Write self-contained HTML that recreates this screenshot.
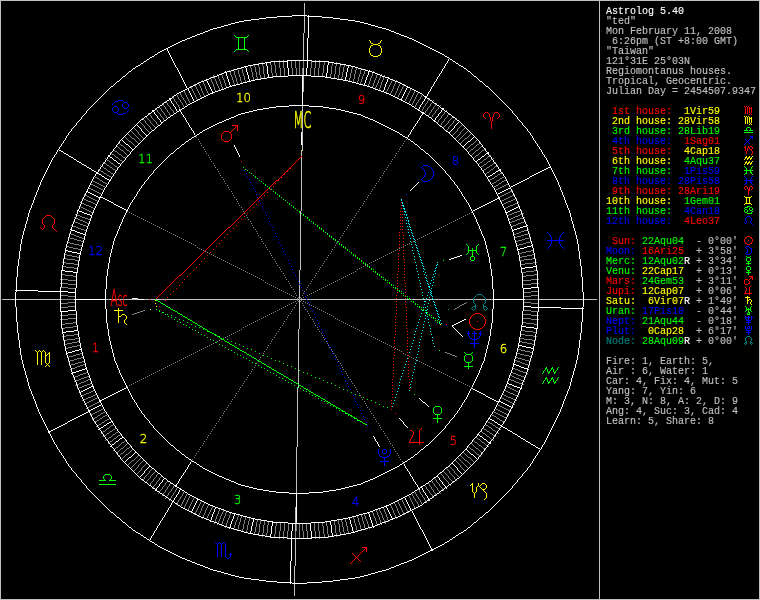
<!DOCTYPE html>
<html><head><meta charset="utf-8"><title>Astrolog 5.40 - ted</title>
<style>
html,body{margin:0;padding:0;background:#000;}
body{width:760px;height:600px;overflow:hidden;}
svg{display:block;will-change:transform;}
.gfx path{shape-rendering:crispEdges;}
.side text{font-family:"Liberation Mono",monospace;font-size:10px;white-space:pre;stroke-width:0.12px;}
.hn text{font-family:"DejaVu Sans Light","DejaVu Sans","Liberation Sans",sans-serif;font-weight:200;font-size:11.8px;text-anchor:middle;stroke-width:0.3px;}
.ang text{font-family:"DejaVu Sans Light","DejaVu Sans","Liberation Sans",sans-serif;font-weight:200;font-size:23.3px;stroke-width:0.6px;}
</style></head>
<body>
<svg width="760" height="600" viewBox="0 0 760 600">
<rect width="760" height="600" fill="#000"/>
<g class="gfx">
<path fill="#ffffff" d="M292 15h15v1h-15zM277 16h15v1h-15zM307 16h15v1h-15zM266 17h11v1h-11zM322 17h11v1h-11zM259 18h7v1h-7zM333 18h7v1h-7zM251 19h8v1h-8zM340 19h8v1h-8zM244 20h7v1h-7zM348 20h7v1h-7zM239 21h5v1h-5zM355 21h5v1h-5zM235 22h4v1h-4zM360 22h4v1h-4zM231 23h4v1h-4zM364 23h4v1h-4zM228 24h3v1h-3zM368 24h3v1h-3zM224 25h4v1h-4zM371 25h4v1h-4zM221 26h3v1h-3zM375 26h3v1h-3zM217 27h4v1h-4zM378 27h4v1h-4zM213 28h4v1h-4zM382 28h4v1h-4zM210 29h3v1h-3zM386 29h3v1h-3zM208 30h2v1h-2zM389 30h2v1h-2zM205 31h3v1h-3zM391 31h3v1h-3zM203 32h2v1h-2zM394 32h2v1h-2zM200 33h3v1h-3zM396 33h3v1h-3zM197 34h3v1h-3zM399 34h2v1h-2zM195 35h2v1h-2zM401 35h3v1h-3zM192 36h3v1h-3zM404 36h3v1h-3zM190 37h2v1h-2zM407 37h2v1h-2zM187 38h3v1h-3zM409 38h3v1h-3zM185 39h2v1h-2zM412 39h2v1h-2zM182 40h3v1h-3zM414 40h2v1h-2zM180 41h2v1h-2zM416 41h2v1h-2zM178 42h2v1h-2zM418 42h2v1h-2zM176 43h2v1h-2zM420 43h2v1h-2zM174 44h2v1h-2zM422 44h2v1h-2zM172 45h2v1h-2zM424 45h2v1h-2zM170 46h2v1h-2zM426 46h2v1h-2zM168 47h2v1h-2zM428 47h2v1h-2zM166 48h2v1h-2zM430 48h2v1h-2zM164 49h2v1h-2zM432 49h2v1h-2zM162 50h2v1h-2zM434 50h2v1h-2zM160 51h2v1h-2zM436 51h2v1h-2zM158 52h2v1h-2zM438 52h2v1h-2zM440 53h2v1h-2zM155 54h2v1h-2zM442 54h2v1h-2zM152 56h2v1h-2zM445 56h2v1h-2zM150 57h2v1h-2zM447 57h2v1h-2zM147 59h2v1h-2zM450 59h2v1h-2zM287 60h25v1h-25zM144 61h2v1h-2zM271 61h17v1h-17zM312 61h17v1h-17zM453 61h2v1h-2zM265 62h6v1h-6zM328 62h6v1h-6zM141 63h2v1h-2zM259 63h6v1h-6zM334 63h6v1h-6zM456 63h2v1h-2zM253 64h6v1h-6zM340 64h6v1h-6zM138 65h2v1h-2zM248 65h5v1h-5zM346 65h5v1h-5zM459 65h2v1h-2zM136 66h2v1h-2zM244 66h4v1h-4zM351 66h4v1h-4zM461 66h2v1h-2zM241 67h3v1h-3zM355 67h3v1h-3zM133 68h2v1h-2zM237 68h4v1h-4zM358 68h3v1h-3zM464 68h2v1h-2zM234 69h3v1h-3zM361 69h4v1h-4zM231 70h3v1h-3zM365 70h3v1h-3zM129 71h2v1h-2zM227 71h4v1h-4zM368 71h4v1h-4zM468 71h2v1h-2zM224 72h3v1h-3zM372 72h3v1h-3zM222 73h2v1h-2zM375 73h2v1h-2zM219 74h3v1h-3zM377 74h3v1h-3zM217 75h2v1h-2zM288 75h23v1h-23zM380 75h2v1h-2zM123 76h2v1h-2zM214 76h3v1h-3zM273 76h15v1h-15zM311 76h14v1h-14zM382 76h3v1h-3zM474 76h2v1h-2zM211 77h3v1h-3zM267 77h6v1h-6zM325 77h6v1h-6zM385 77h4v1h-4zM209 78h2v1h-2zM261 78h6v1h-6zM331 78h6v1h-6zM388 78h2v1h-2zM206 79h3v1h-3zM255 79h6v1h-6zM337 79h6v1h-6zM390 79h3v1h-3zM204 80h3v1h-3zM251 80h4v1h-4zM343 80h5v1h-5zM393 80h2v1h-2zM117 81h2v1h-2zM201 81h3v1h-3zM247 81h4v1h-4zM348 81h4v1h-4zM395 81h3v1h-3zM480 81h2v1h-2zM199 82h2v1h-2zM243 82h4v1h-4zM352 82h4v1h-4zM398 82h2v1h-2zM197 83h2v1h-2zM240 83h3v1h-3zM356 83h3v1h-3zM400 83h2v1h-2zM195 84h2v1h-2zM236 84h4v1h-4zM359 84h4v1h-4zM402 84h2v1h-2zM193 85h2v1h-2zM232 85h4v1h-4zM363 85h4v1h-4zM404 85h2v1h-2zM111 86h2v1h-2zM191 86h2v1h-2zM229 86h3v1h-3zM367 86h3v1h-3zM406 86h2v1h-2zM486 86h2v1h-2zM189 87h2v1h-2zM226 87h3v1h-3zM370 87h3v1h-3zM407 87h3v1h-3zM187 88h2v1h-2zM224 88h2v1h-2zM373 88h2v1h-2zM410 88h2v1h-2zM185 89h2v1h-2zM221 89h3v1h-3zM375 89h3v1h-3zM412 89h2v1h-2zM183 90h2v1h-2zM218 90h3v1h-3zM378 90h3v1h-3zM414 90h2v1h-2zM181 91h2v1h-2zM215 91h3v1h-3zM381 91h3v1h-3zM416 91h2v1h-2zM179 92h2v1h-2zM212 92h3v1h-3zM384 92h2v1h-2zM418 92h2v1h-2zM177 93h2v1h-2zM210 93h3v1h-3zM386 93h3v1h-3zM420 93h2v1h-2zM208 94h2v1h-2zM389 94h2v1h-2zM174 95h2v1h-2zM206 95h2v1h-2zM391 95h2v1h-2zM204 96h2v1h-2zM393 96h2v1h-2zM424 96h3v1h-3zM202 97h2v1h-2zM395 97h2v1h-2zM425 97h2v1h-2zM169 98h3v1h-3zM200 98h2v1h-2zM397 98h2v1h-2zM427 98h2v1h-2zM169 99h2v1h-2zM198 99h2v1h-2zM399 99h3v1h-3zM167 100h2v1h-2zM196 100h2v1h-2zM401 100h2v1h-2zM430 100h2v1h-2zM194 101h2v1h-2zM403 101h2v1h-2zM164 102h2v1h-2zM192 102h2v1h-2zM405 102h2v1h-2zM190 103h2v1h-2zM407 103h2v1h-2zM434 103h2v1h-2zM188 104h2v1h-2zM409 104h2v1h-2zM160 105h2v1h-2zM289 105h20v1h-20zM437 105h2v1h-2zM185 106h2v1h-2zM276 106h13v1h-13zM309 106h14v1h-14zM412 106h2v1h-2zM157 107h2v1h-2zM269 107h7v1h-7zM323 107h6v1h-6zM182 108h2v1h-2zM263 108h6v1h-6zM329 108h7v1h-7zM415 108h2v1h-2zM441 108h3v1h-3zM257 109h6v1h-6zM336 109h5v1h-5zM417 109h2v1h-2zM442 109h2v1h-2zM152 110h3v1h-3zM179 110h2v1h-2zM253 110h4v1h-4zM341 110h4v1h-4zM418 110h2v1h-2zM152 111h2v1h-2zM177 111h2v1h-2zM249 111h4v1h-4zM345 111h4v1h-4zM445 111h2v1h-2zM245 112h4v1h-4zM349 112h4v1h-4zM421 112h3v1h-3zM149 113h2v1h-2zM174 113h2v1h-2zM241 113h4v1h-4zM353 113h4v1h-4zM422 113h3v1h-3zM238 114h3v1h-3zM357 114h4v1h-4zM449 114h2v1h-2zM171 115h2v1h-2zM236 115h2v1h-2zM361 115h2v1h-2zM426 115h2v1h-2zM145 116h2v1h-2zM234 116h2v1h-2zM363 116h2v1h-2zM168 117h2v1h-2zM231 117h3v1h-3zM365 117h3v1h-3zM429 117h2v1h-2zM453 117h2v1h-2zM229 118h2v1h-2zM368 118h2v1h-2zM141 119h2v1h-2zM226 119h3v1h-3zM370 119h3v1h-3zM164 120h2v1h-2zM224 120h2v1h-2zM373 120h2v1h-2zM433 120h2v1h-2zM457 120h2v1h-2zM222 121h2v1h-2zM375 121h2v1h-2zM434 121h2v1h-2zM161 122h2v1h-2zM219 122h3v1h-3zM377 122h2v1h-2zM217 123h2v1h-2zM379 123h2v1h-2zM215 124h2v1h-2zM381 124h2v1h-2zM158 125h2v1h-2zM213 125h2v1h-2zM383 125h2v1h-2zM211 126h2v1h-2zM385 126h2v1h-2zM440 126h2v1h-2zM209 127h2v1h-2zM387 127h2v1h-2zM207 128h2v1h-2zM389 128h2v1h-2zM205 129h2v1h-2zM391 129h2v1h-2zM152 130h2v1h-2zM203 130h2v1h-2zM393 130h2v1h-2zM395 131h2v1h-2zM446 131h2v1h-2zM200 132h2v1h-2zM397 132h2v1h-2zM448 132h2v1h-2zM197 134h2v1h-2zM400 134h2v1h-2zM146 135h2v1h-2zM194 136h2v1h-2zM403 136h2v1h-2zM192 137h2v1h-2zM405 137h2v1h-2zM189 139h2v1h-2zM408 139h2v1h-2zM186 141h2v1h-2zM411 141h2v1h-2zM468 141h2v1h-2zM126 144h2v1h-2zM182 144h2v1h-2zM415 144h2v1h-2zM462 146h2v1h-2zM177 148h2v1h-2zM132 149h2v1h-2zM421 149h2v1h-2zM59 150h2v1h-2zM61 151h2v1h-2zM487 152h2v1h-2zM64 153h2v1h-2zM171 153h2v1h-2zM426 153h2v1h-2zM486 153h3v1h-3zM66 154h2v1h-2zM108 155h2v1h-2zM69 156h2v1h-2zM108 156h2v1h-2zM482 156h2v1h-2zM71 157h2v1h-2zM110 157h2v1h-2zM74 159h2v1h-2zM478 159h2v1h-2zM114 160h2v1h-2zM77 161h2v1h-2zM475 161h2v1h-2zM79 162h2v1h-2zM118 163h2v1h-2zM82 164h2v1h-2zM84 165h2v1h-2zM87 167h2v1h-2zM548 167h3v1h-3zM89 168h2v1h-2zM546 168h2v1h-2zM499 169h2v1h-2zM544 169h2v1h-2zM92 170h2v1h-2zM498 170h3v1h-3zM542 170h2v1h-2zM94 171h2v1h-2zM496 171h2v1h-2zM540 171h2v1h-2zM96 172h2v1h-2zM538 172h2v1h-2zM96 173h3v1h-3zM493 173h2v1h-2zM536 173h2v1h-2zM99 174h2v1h-2zM534 174h2v1h-2zM490 175h2v1h-2zM532 175h2v1h-2zM102 176h2v1h-2zM488 176h2v1h-2zM530 176h2v1h-2zM105 178h2v1h-2zM527 178h2v1h-2zM107 179h2v1h-2zM525 179h2v1h-2zM109 180h2v1h-2zM523 180h2v1h-2zM521 181h2v1h-2zM519 182h2v1h-2zM517 183h2v1h-2zM515 184h2v1h-2zM513 185h2v1h-2zM511 186h2v1h-2zM508 188h3v1h-3zM506 189h2v1h-2zM504 190h2v1h-2zM86 191h2v1h-2zM502 191h2v1h-2zM88 192h2v1h-2zM500 192h2v1h-2zM90 193h2v1h-2zM498 193h2v1h-2zM92 194h2v1h-2zM94 195h2v1h-2zM96 196h2v1h-2zM98 197h5v1h-5zM498 197h2v1h-2zM103 198h2v1h-2zM497 198h3v1h-3zM105 199h2v1h-2zM495 199h2v1h-2zM107 200h2v1h-2zM493 200h2v1h-2zM109 201h2v1h-2zM491 201h2v1h-2zM111 202h2v1h-2zM489 202h2v1h-2zM487 203h2v1h-2zM114 204h2v1h-2zM485 204h2v1h-2zM116 205h2v1h-2zM483 205h2v1h-2zM118 206h2v1h-2zM481 206h2v1h-2zM518 206h2v1h-2zM120 207h2v1h-2zM479 207h2v1h-2zM516 207h2v1h-2zM122 208h2v1h-2zM477 208h2v1h-2zM514 208h2v1h-2zM124 209h2v1h-2zM475 209h2v1h-2zM512 209h2v1h-2zM77 210h2v1h-2zM126 210h2v1h-2zM473 210h2v1h-2zM510 210h2v1h-2zM79 211h3v1h-3zM508 211h2v1h-2zM82 212h2v1h-2zM505 212h3v1h-3zM84 213h3v1h-3zM87 214h3v1h-3zM90 215h2v1h-2zM526 225h2v1h-2zM523 226h4v1h-4zM520 227h3v1h-3zM517 228h3v1h-3zM70 229h2v1h-2zM514 229h3v1h-3zM71 230h4v1h-4zM512 230h2v1h-2zM75 231h2v1h-2zM77 232h3v1h-3zM80 233h3v1h-3zM83 234h3v1h-3zM531 245h2v1h-2zM527 246h4v1h-4zM524 247h3v1h-3zM520 248h4v1h-4zM517 249h3v1h-3zM65 250h3v1h-3zM68 251h4v1h-4zM72 252h5v1h-5zM77 253h4v1h-4zM460 255h2v1h-2zM457 256h3v1h-3zM454 257h3v1h-3zM451 258h3v1h-3zM449 259h2v1h-2zM533 266h4v1h-4zM525 267h8v1h-8zM521 268h4v1h-4zM61 270h4v1h-4zM65 271h8v1h-8zM73 272h5v1h-5zM531 287h8v1h-8zM523 288h8v1h-8zM15 290h23v1h-23zM38 291h30v1h-30zM68 292h8v1h-8zM132 298h6v1h-6zM74 299h32v1h-32zM138 299h6v1h-6zM493 299h32v1h-32zM523 306h8v1h-8zM531 307h30v1h-30zM561 308h23v1h-23zM68 310h8v1h-8zM60 311h8v1h-8zM464 319h2v1h-2zM462 320h2v1h-2zM460 321h2v1h-2zM458 322h2v1h-2zM456 323h2v1h-2zM454 324h2v1h-2zM452 325h2v1h-2zM521 326h5v1h-5zM526 327h8v1h-8zM534 328h4v1h-4zM74 330h4v1h-4zM66 331h8v1h-8zM62 332h4v1h-4zM518 345h4v1h-4zM522 346h4v1h-4zM526 347h5v1h-5zM531 348h3v1h-3zM79 349h3v1h-3zM75 350h4v1h-4zM72 351h3v1h-3zM68 352h4v1h-4zM66 353h2v1h-2zM513 364h3v1h-3zM516 365h3v1h-3zM519 366h2v1h-2zM521 367h3v1h-3zM85 368h2v1h-2zM524 368h4v1h-4zM82 369h3v1h-3zM527 369h2v1h-2zM79 370h3v1h-3zM76 371h3v1h-3zM72 372h4v1h-4zM71 373h2v1h-2zM507 383h2v1h-2zM509 384h3v1h-3zM512 385h2v1h-2zM91 386h3v1h-3zM514 386h3v1h-3zM89 387h2v1h-2zM126 387h2v1h-2zM517 387h3v1h-3zM87 388h2v1h-2zM124 388h2v1h-2zM471 388h2v1h-2zM520 388h2v1h-2zM85 389h2v1h-2zM122 389h2v1h-2zM473 389h2v1h-2zM83 390h2v1h-2zM120 390h2v1h-2zM475 390h2v1h-2zM81 391h2v1h-2zM118 391h2v1h-2zM477 391h2v1h-2zM79 392h2v1h-2zM116 392h2v1h-2zM479 392h2v1h-2zM114 393h2v1h-2zM481 393h2v1h-2zM112 394h2v1h-2zM483 394h2v1h-2zM110 395h2v1h-2zM108 396h2v1h-2zM486 396h2v1h-2zM106 397h2v1h-2zM488 397h2v1h-2zM104 398h2v1h-2zM490 398h2v1h-2zM102 399h2v1h-2zM492 399h2v1h-2zM99 400h3v1h-3zM494 400h2v1h-2zM99 401h2v1h-2zM496 401h5v1h-5zM423 402h2v1h-2zM501 402h2v1h-2zM503 403h2v1h-2zM505 404h2v1h-2zM99 405h2v1h-2zM507 405h2v1h-2zM97 406h2v1h-2zM509 406h2v1h-2zM95 407h2v1h-2zM511 407h2v1h-2zM93 408h2v1h-2zM91 409h2v1h-2zM88 410h3v1h-3zM88 411h2v1h-2zM86 412h2v1h-2zM84 413h2v1h-2zM82 414h2v1h-2zM80 415h2v1h-2zM78 416h2v1h-2zM76 417h2v1h-2zM74 418h2v1h-2zM488 418h2v1h-2zM72 419h2v1h-2zM490 419h2v1h-2zM70 420h2v1h-2zM492 420h2v1h-2zM68 421h2v1h-2zM111 421h2v1h-2zM109 422h2v1h-2zM495 422h2v1h-2zM65 423h2v1h-2zM107 423h2v1h-2zM63 424h2v1h-2zM498 424h2v1h-2zM61 425h2v1h-2zM104 425h2v1h-2zM500 425h2v1h-2zM59 426h2v1h-2zM501 426h2v1h-2zM57 427h2v1h-2zM101 427h2v1h-2zM503 427h2v1h-2zM55 428h2v1h-2zM99 428h2v1h-2zM505 428h2v1h-2zM53 429h2v1h-2zM98 429h2v1h-2zM51 430h2v1h-2zM508 430h2v1h-2zM48 431h3v1h-3zM510 431h2v1h-2zM48 432h2v1h-2zM513 433h2v1h-2zM477 434h2v1h-2zM515 434h2v1h-2zM480 436h2v1h-2zM518 436h2v1h-2zM122 437h2v1h-2zM120 438h2v1h-2zM521 438h2v1h-2zM484 439h2v1h-2zM523 439h2v1h-2zM116 441h2v1h-2zM526 441h2v1h-2zM488 442h3v1h-3zM528 442h2v1h-2zM489 443h2v1h-2zM112 444h2v1h-2zM531 444h2v1h-2zM171 445h2v1h-2zM426 445h2v1h-2zM533 445h2v1h-2zM110 446h2v1h-2zM536 447h2v1h-2zM538 448h2v1h-2zM421 449h2v1h-2zM465 449h2v1h-2zM177 450h2v1h-2zM135 452h2v1h-2zM182 454h2v1h-2zM415 454h2v1h-2zM471 454h2v1h-2zM129 457h2v1h-2zM186 457h2v1h-2zM411 457h2v1h-2zM189 459h2v1h-2zM408 459h2v1h-2zM192 461h2v1h-2zM405 461h2v1h-2zM194 462h2v1h-2zM403 462h2v1h-2zM451 463h2v1h-2zM197 464h2v1h-2zM400 464h2v1h-2zM149 466h2v1h-2zM200 466h2v1h-2zM397 466h2v1h-2zM395 467h2v1h-2zM446 467h2v1h-2zM152 468h2v1h-2zM203 468h2v1h-2zM393 468h2v1h-2zM205 469h2v1h-2zM391 469h2v1h-2zM207 470h2v1h-2zM389 470h2v1h-2zM209 471h2v1h-2zM387 471h2v1h-2zM211 472h2v1h-2zM385 472h2v1h-2zM440 472h2v1h-2zM158 473h2v1h-2zM213 473h2v1h-2zM383 473h2v1h-2zM215 474h2v1h-2zM381 474h2v1h-2zM217 475h2v1h-2zM379 475h2v1h-2zM219 476h3v1h-3zM377 476h2v1h-2zM436 476h2v1h-2zM222 477h2v1h-2zM375 477h2v1h-2zM434 477h2v1h-2zM164 478h2v1h-2zM224 478h2v1h-2zM373 478h2v1h-2zM457 478h2v1h-2zM141 479h2v1h-2zM226 479h3v1h-3zM370 479h3v1h-3zM229 480h2v1h-2zM368 480h2v1h-2zM168 481h2v1h-2zM231 481h3v1h-3zM365 481h3v1h-3zM429 481h2v1h-2zM453 481h2v1h-2zM145 482h2v1h-2zM234 482h2v1h-2zM363 482h2v1h-2zM171 483h2v1h-2zM236 483h2v1h-2zM361 483h2v1h-2zM426 483h2v1h-2zM238 484h3v1h-3zM357 484h4v1h-4zM449 484h2v1h-2zM149 485h2v1h-2zM174 485h3v1h-3zM241 485h4v1h-4zM353 485h4v1h-4zM423 485h2v1h-2zM175 486h2v1h-2zM245 486h4v1h-4zM349 486h4v1h-4zM421 486h2v1h-2zM177 487h2v1h-2zM249 487h4v1h-4zM345 487h4v1h-4zM420 487h2v1h-2zM445 487h2v1h-2zM153 488h2v1h-2zM179 488h2v1h-2zM253 488h4v1h-4zM341 488h4v1h-4zM418 488h2v1h-2zM155 489h2v1h-2zM180 489h2v1h-2zM257 489h6v1h-6zM336 489h5v1h-5zM155 490h2v1h-2zM182 490h2v1h-2zM263 490h6v1h-6zM329 490h7v1h-7zM415 490h2v1h-2zM441 490h2v1h-2zM157 491h2v1h-2zM269 491h7v1h-7zM323 491h6v1h-6zM185 492h2v1h-2zM276 492h13v1h-13zM309 492h14v1h-14zM412 492h2v1h-2zM160 493h2v1h-2zM289 493h20v1h-20zM437 493h2v1h-2zM188 494h2v1h-2zM409 494h2v1h-2zM163 495h2v1h-2zM190 495h2v1h-2zM407 495h2v1h-2zM434 495h2v1h-2zM192 496h2v1h-2zM405 496h2v1h-2zM166 497h2v1h-2zM194 497h2v1h-2zM403 497h2v1h-2zM196 498h2v1h-2zM401 498h2v1h-2zM430 498h2v1h-2zM169 499h2v1h-2zM197 499h3v1h-3zM399 499h2v1h-2zM428 499h2v1h-2zM200 500h2v1h-2zM397 500h2v1h-2zM427 500h3v1h-3zM172 501h2v1h-2zM202 501h2v1h-2zM395 501h2v1h-2zM204 502h2v1h-2zM393 502h2v1h-2zM424 502h2v1h-2zM175 503h2v1h-2zM206 503h2v1h-2zM391 503h2v1h-2zM208 504h2v1h-2zM389 504h2v1h-2zM178 505h2v1h-2zM210 505h3v1h-3zM386 505h3v1h-3zM420 505h2v1h-2zM213 506h2v1h-2zM384 506h3v1h-3zM418 506h2v1h-2zM181 507h2v1h-2zM215 507h3v1h-3zM381 507h3v1h-3zM416 507h2v1h-2zM183 508h2v1h-2zM218 508h3v1h-3zM378 508h3v1h-3zM414 508h2v1h-2zM185 509h2v1h-2zM221 509h3v1h-3zM375 509h3v1h-3zM412 509h2v1h-2zM187 510h2v1h-2zM224 510h2v1h-2zM373 510h2v1h-2zM410 510h2v1h-2zM189 511h3v1h-3zM226 511h3v1h-3zM370 511h3v1h-3zM408 511h2v1h-2zM111 512h2v1h-2zM191 512h2v1h-2zM229 512h3v1h-3zM367 512h3v1h-3zM406 512h2v1h-2zM486 512h2v1h-2zM193 513h2v1h-2zM232 513h4v1h-4zM363 513h4v1h-4zM404 513h2v1h-2zM195 514h2v1h-2zM236 514h4v1h-4zM359 514h4v1h-4zM402 514h2v1h-2zM197 515h2v1h-2zM240 515h3v1h-3zM356 515h3v1h-3zM400 515h2v1h-2zM199 516h2v1h-2zM243 516h4v1h-4zM352 516h4v1h-4zM398 516h2v1h-2zM117 517h2v1h-2zM201 517h3v1h-3zM247 517h4v1h-4zM348 517h4v1h-4zM395 517h3v1h-3zM480 517h2v1h-2zM204 518h2v1h-2zM251 518h4v1h-4zM343 518h5v1h-5zM392 518h3v1h-3zM206 519h3v1h-3zM255 519h6v1h-6zM337 519h6v1h-6zM390 519h3v1h-3zM209 520h2v1h-2zM261 520h6v1h-6zM331 520h6v1h-6zM388 520h2v1h-2zM210 521h4v1h-4zM267 521h6v1h-6zM325 521h6v1h-6zM385 521h3v1h-3zM123 522h2v1h-2zM214 522h3v1h-3zM272 522h16v1h-16zM311 522h14v1h-14zM382 522h3v1h-3zM474 522h2v1h-2zM217 523h2v1h-2zM288 523h23v1h-23zM380 523h2v1h-2zM219 524h3v1h-3zM377 524h3v1h-3zM222 525h2v1h-2zM375 525h2v1h-2zM224 526h3v1h-3zM372 526h3v1h-3zM129 527h2v1h-2zM227 527h4v1h-4zM368 527h4v1h-4zM468 527h2v1h-2zM231 528h3v1h-3zM365 528h3v1h-3zM234 529h3v1h-3zM361 529h4v1h-4zM133 530h2v1h-2zM237 530h4v1h-4zM358 530h3v1h-3zM464 530h2v1h-2zM241 531h3v1h-3zM355 531h3v1h-3zM136 532h2v1h-2zM244 532h4v1h-4zM351 532h4v1h-4zM461 532h2v1h-2zM138 533h2v1h-2zM248 533h5v1h-5zM346 533h5v1h-5zM459 533h2v1h-2zM253 534h6v1h-6zM340 534h6v1h-6zM141 535h2v1h-2zM259 535h6v1h-6zM334 535h6v1h-6zM456 535h2v1h-2zM265 536h6v1h-6zM328 536h6v1h-6zM144 537h2v1h-2zM270 537h17v1h-17zM311 537h17v1h-17zM453 537h2v1h-2zM287 538h25v1h-25zM147 539h2v1h-2zM450 539h2v1h-2zM150 541h2v1h-2zM447 541h2v1h-2zM152 542h2v1h-2zM445 542h2v1h-2zM155 544h2v1h-2zM442 544h2v1h-2zM440 545h2v1h-2zM158 546h2v1h-2zM438 546h2v1h-2zM160 547h2v1h-2zM436 547h2v1h-2zM162 548h2v1h-2zM434 548h2v1h-2zM164 549h2v1h-2zM431 549h3v1h-3zM166 550h2v1h-2zM430 550h3v1h-3zM168 551h2v1h-2zM428 551h2v1h-2zM170 552h2v1h-2zM426 552h2v1h-2zM172 553h2v1h-2zM424 553h2v1h-2zM174 554h2v1h-2zM422 554h2v1h-2zM176 555h2v1h-2zM420 555h2v1h-2zM178 556h2v1h-2zM418 556h2v1h-2zM180 557h2v1h-2zM416 557h2v1h-2zM182 558h3v1h-3zM414 558h2v1h-2zM185 559h2v1h-2zM412 559h2v1h-2zM187 560h3v1h-3zM409 560h3v1h-3zM190 561h2v1h-2zM407 561h2v1h-2zM192 562h3v1h-3zM404 562h3v1h-3zM195 563h2v1h-2zM401 563h3v1h-3zM197 564h3v1h-3zM399 564h2v1h-2zM200 565h3v1h-3zM396 565h3v1h-3zM203 566h2v1h-2zM394 566h2v1h-2zM205 567h3v1h-3zM391 567h3v1h-3zM208 568h2v1h-2zM389 568h2v1h-2zM210 569h3v1h-3zM386 569h3v1h-3zM213 570h4v1h-4zM382 570h4v1h-4zM217 571h4v1h-4zM378 571h4v1h-4zM221 572h3v1h-3zM375 572h3v1h-3zM224 573h4v1h-4zM371 573h4v1h-4zM228 574h3v1h-3zM368 574h3v1h-3zM231 575h4v1h-4zM364 575h4v1h-4zM235 576h4v1h-4zM360 576h4v1h-4zM239 577h5v1h-5zM355 577h5v1h-5zM244 578h7v1h-7zM348 578h7v1h-7zM251 579h8v1h-8zM340 579h8v1h-8zM259 580h7v1h-7zM333 580h7v1h-7zM266 581h11v1h-11zM322 581h11v1h-11zM277 582h15v1h-15zM307 582h15v1h-15zM292 583h15v1h-15zM15 292v15h1v-15zM16 277v13h1v-13zM16 291v1h1v-1zM16 307v15h1v-15zM17 266v11h1v-11zM17 322v11h1v-11zM18 259v7h1v-7zM18 333v7h1v-7zM19 251v8h1v-8zM19 340v8h1v-8zM20 244v7h1v-7zM20 348v7h1v-7zM21 239v5h1v-5zM21 355v5h1v-5zM22 235v4h1v-4zM22 360v4h1v-4zM23 231v4h1v-4zM23 364v4h1v-4zM24 228v3h1v-3zM24 368v3h1v-3zM25 224v4h1v-4zM25 371v4h1v-4zM26 221v3h1v-3zM26 375v3h1v-3zM27 217v4h1v-4zM27 378v4h1v-4zM28 213v4h1v-4zM28 382v4h1v-4zM29 210v3h1v-3zM29 386v3h1v-3zM30 208v2h1v-2zM30 389v2h1v-2zM31 205v3h1v-3zM31 391v3h1v-3zM32 203v2h1v-2zM32 394v2h1v-2zM33 200v3h1v-3zM33 396v3h1v-3zM34 197v3h1v-3zM34 399v2h1v-2zM35 195v2h1v-2zM35 401v3h1v-3zM36 192v3h1v-3zM36 404v3h1v-3zM37 190v2h1v-2zM37 407v2h1v-2zM38 187v3h1v-3zM38 409v3h1v-3zM39 185v2h1v-2zM39 412v2h1v-2zM40 182v3h1v-3zM40 414v2h1v-2zM41 180v2h1v-2zM41 416v2h1v-2zM42 178v2h1v-2zM42 418v2h1v-2zM43 176v2h1v-2zM43 420v2h1v-2zM44 174v2h1v-2zM44 422v2h1v-2zM45 172v2h1v-2zM45 424v2h1v-2zM46 170v2h1v-2zM46 426v2h1v-2zM47 168v2h1v-2zM47 428v2h1v-2zM48 166v2h1v-2zM48 430v1h1v-1zM49 164v2h1v-2zM49 433v1h1v-1zM50 162v2h1v-2zM50 434v2h1v-2zM51 160v2h1v-2zM51 436v2h1v-2zM52 158v2h1v-2zM52 438v2h1v-2zM53 157v1h1v-1zM53 440v2h1v-2zM54 155v2h1v-2zM54 442v2h1v-2zM55 154v1h1v-1zM55 444v1h1v-1zM56 152v2h1v-2zM56 445v2h1v-2zM57 150v2h1v-2zM57 447v2h1v-2zM58 149v1h1v-1zM58 449v1h1v-1zM59 147v2h1v-2zM59 450v2h1v-2zM60 146v1h1v-1zM60 287v4h1v-4zM60 292v19h1v-19zM60 452v1h1v-1zM61 144v2h1v-2zM61 271v16h1v-16zM61 312v16h1v-16zM61 453v2h1v-2zM62 143v1h1v-1zM62 265v5h1v-5zM62 328v4h1v-4zM62 333v1h1v-1zM62 455v1h1v-1zM63 141v2h1v-2zM63 152v1h1v-1zM63 259v6h1v-6zM63 334v6h1v-6zM63 456v2h1v-2zM64 140v1h1v-1zM64 253v6h1v-6zM64 340v6h1v-6zM64 458v1h1v-1zM65 138v2h1v-2zM65 248v2h1v-2zM65 251v2h1v-2zM65 346v5h1v-5zM65 459v2h1v-2zM66 136v2h1v-2zM66 244v4h1v-4zM66 351v2h1v-2zM66 354v1h1v-1zM66 461v2h1v-2zM67 135v1h1v-1zM67 241v3h1v-3zM67 355v3h1v-3zM67 422v1h1v-1zM67 463v1h1v-1zM68 133v2h1v-2zM68 155v1h1v-1zM68 237v4h1v-4zM68 358v3h1v-3zM68 464v2h1v-2zM69 132v1h1v-1zM69 234v3h1v-3zM69 361v4h1v-4zM69 466v1h1v-1zM70 131v1h1v-1zM70 231v3h1v-3zM70 365v3h1v-3zM70 467v1h1v-1zM71 129v2h1v-2zM71 227v2h1v-2zM71 368v4h1v-4zM71 468v2h1v-2zM72 128v1h1v-1zM72 224v3h1v-3zM72 374v1h1v-1zM72 470v1h1v-1zM73 127v1h1v-1zM73 158v1h1v-1zM73 222v2h1v-2zM73 375v2h1v-2zM73 471v1h1v-1zM74 126v1h1v-1zM74 219v3h1v-3zM74 377v3h1v-3zM74 472v1h1v-1zM75 125v1h1v-1zM75 217v2h1v-2zM75 288v4h1v-4zM75 293v6h1v-6zM75 300v10h1v-10zM75 380v2h1v-2zM75 473v1h1v-1zM76 123v2h1v-2zM76 160v1h1v-1zM76 214v3h1v-3zM76 273v15h1v-15zM76 311v14h1v-14zM76 382v3h1v-3zM76 474v2h1v-2zM77 122v1h1v-1zM77 211v3h1v-3zM77 267v5h1v-5zM77 325v5h1v-5zM77 385v3h1v-3zM77 476v1h1v-1zM78 121v1h1v-1zM78 209v1h1v-1zM78 261v6h1v-6zM78 331v6h1v-6zM78 388v2h1v-2zM78 477v1h1v-1zM79 120v1h1v-1zM79 206v3h1v-3zM79 255v6h1v-6zM79 337v6h1v-6zM79 390v2h1v-2zM79 478v1h1v-1zM80 119v1h1v-1zM80 204v2h1v-2zM80 251v2h1v-2zM80 254v1h1v-1zM80 343v5h1v-5zM80 393v2h1v-2zM80 479v1h1v-1zM81 117v2h1v-2zM81 163v1h1v-1zM81 201v3h1v-3zM81 247v4h1v-4zM81 348v1h1v-1zM81 350v2h1v-2zM81 395v2h1v-2zM81 480v2h1v-2zM82 116v1h1v-1zM82 199v2h1v-2zM82 243v4h1v-4zM82 352v4h1v-4zM82 397v2h1v-2zM82 482v1h1v-1zM83 115v1h1v-1zM83 197v2h1v-2zM83 240v3h1v-3zM83 356v3h1v-3zM83 399v2h1v-2zM83 483v1h1v-1zM84 114v1h1v-1zM84 195v2h1v-2zM84 236v4h1v-4zM84 359v4h1v-4zM84 401v2h1v-2zM84 484v1h1v-1zM85 113v1h1v-1zM85 193v2h1v-2zM85 232v2h1v-2zM85 235v1h1v-1zM85 363v4h1v-4zM85 403v2h1v-2zM85 485v1h1v-1zM86 111v2h1v-2zM86 166v1h1v-1zM86 192v1h1v-1zM86 229v3h1v-3zM86 367v1h1v-1zM86 369v1h1v-1zM86 405v2h1v-2zM86 486v2h1v-2zM87 110v1h1v-1zM87 189v2h1v-2zM87 226v3h1v-3zM87 370v3h1v-3zM87 407v2h1v-2zM87 488v1h1v-1zM88 109v1h1v-1zM88 187v2h1v-2zM88 224v2h1v-2zM88 373v2h1v-2zM88 409v1h1v-1zM88 489v1h1v-1zM89 108v1h1v-1zM89 185v2h1v-2zM89 221v3h1v-3zM89 375v3h1v-3zM89 412v1h1v-1zM89 490v1h1v-1zM90 107v1h1v-1zM90 183v2h1v-2zM90 218v3h1v-3zM90 378v3h1v-3zM90 413v2h1v-2zM90 491v1h1v-1zM91 106v1h1v-1zM91 169v1h1v-1zM91 181v2h1v-2zM91 216v2h1v-2zM91 381v3h1v-3zM91 415v2h1v-2zM91 492v1h1v-1zM92 105v1h1v-1zM92 179v2h1v-2zM92 213v2h1v-2zM92 384v2h1v-2zM92 417v2h1v-2zM92 493v1h1v-1zM93 104v1h1v-1zM93 177v2h1v-2zM93 210v3h1v-3zM93 387v2h1v-2zM93 419v2h1v-2zM93 494v1h1v-1zM94 103v1h1v-1zM94 176v1h1v-1zM94 208v2h1v-2zM94 389v2h1v-2zM94 421v1h1v-1zM94 495v1h1v-1zM95 102v1h1v-1zM95 174v2h1v-2zM95 206v2h1v-2zM95 391v2h1v-2zM95 422v2h1v-2zM95 496v1h1v-1zM96 101v1h1v-1zM96 204v2h1v-2zM96 393v2h1v-2zM96 424v1h1v-1zM96 497v1h1v-1zM97 100v1h1v-1zM97 202v2h1v-2zM97 395v2h1v-2zM97 425v2h1v-2zM97 498v1h1v-1zM98 99v1h1v-1zM98 170v2h1v-2zM98 200v2h1v-2zM98 397v2h1v-2zM98 427v1h1v-1zM98 499v1h1v-1zM99 98v1h1v-1zM99 169v1h1v-1zM99 198v2h1v-2zM99 399v1h1v-1zM99 500v1h1v-1zM100 97v1h1v-1zM100 167v2h1v-2zM100 196v1h1v-1zM100 402v1h1v-1zM100 430v1h1v-1zM100 501v1h1v-1zM101 96v1h1v-1zM101 166v1h1v-1zM101 175v1h1v-1zM101 194v2h1v-2zM101 403v2h1v-2zM101 431v2h1v-2zM101 502v1h1v-1zM102 95v1h1v-1zM102 164v2h1v-2zM102 192v2h1v-2zM102 405v2h1v-2zM102 433v1h1v-1zM102 503v1h1v-1zM103 94v1h1v-1zM103 163v1h1v-1zM103 190v2h1v-2zM103 407v2h1v-2zM103 426v1h1v-1zM103 434v2h1v-2zM103 504v1h1v-1zM104 93v1h1v-1zM104 162v1h1v-1zM104 177v1h1v-1zM104 188v2h1v-2zM104 409v2h1v-2zM104 436v1h1v-1zM104 505v1h1v-1zM105 92v1h1v-1zM105 160v2h1v-2zM105 187v1h1v-1zM105 289v10h1v-10zM105 300v9h1v-9zM105 411v1h1v-1zM105 437v2h1v-2zM105 506v1h1v-1zM106 91v1h1v-1zM106 159v1h1v-1zM106 185v2h1v-2zM106 276v13h1v-13zM106 309v14h1v-14zM106 412v2h1v-2zM106 424v1h1v-1zM106 439v1h1v-1zM106 507v1h1v-1zM107 90v1h1v-1zM107 157v2h1v-2zM107 184v1h1v-1zM107 269v7h1v-7zM107 323v6h1v-6zM107 414v1h1v-1zM107 440v1h1v-1zM107 508v1h1v-1zM108 89v1h1v-1zM108 182v2h1v-2zM108 263v6h1v-6zM108 329v7h1v-7zM108 415v2h1v-2zM108 441v2h1v-2zM108 509v1h1v-1zM109 88v1h1v-1zM109 181v1h1v-1zM109 257v6h1v-6zM109 336v5h1v-5zM109 417v1h1v-1zM109 443v1h1v-1zM109 510v1h1v-1zM110 87v1h1v-1zM110 153v2h1v-2zM110 179v1h1v-1zM110 253v4h1v-4zM110 341v4h1v-4zM110 418v2h1v-2zM110 444v1h1v-1zM110 511v1h1v-1zM111 152v1h1v-1zM111 177v2h1v-2zM111 249v4h1v-4zM111 345v4h1v-4zM111 420v1h1v-1zM111 445v1h1v-1zM112 151v1h1v-1zM112 158v1h1v-1zM112 176v1h1v-1zM112 245v4h1v-4zM112 349v4h1v-4zM112 422v1h1v-1zM112 447v1h1v-1zM113 85v1h1v-1zM113 149v2h1v-2zM113 159v1h1v-1zM113 174v2h1v-2zM113 203v1h1v-1zM113 241v4h1v-4zM113 353v4h1v-4zM113 423v2h1v-2zM113 448v1h1v-1zM113 513v1h1v-1zM114 84v1h1v-1zM114 148v1h1v-1zM114 173v1h1v-1zM114 238v3h1v-3zM114 357v4h1v-4zM114 425v1h1v-1zM114 443v1h1v-1zM114 449v2h1v-2zM114 514v1h1v-1zM115 83v1h1v-1zM115 147v1h1v-1zM115 171v2h1v-2zM115 236v2h1v-2zM115 361v2h1v-2zM115 426v2h1v-2zM115 442v1h1v-1zM115 451v1h1v-1zM115 515v1h1v-1zM116 82v1h1v-1zM116 145v2h1v-2zM116 161v1h1v-1zM116 170v1h1v-1zM116 234v2h1v-2zM116 363v2h1v-2zM116 428v1h1v-1zM116 452v1h1v-1zM116 516v1h1v-1zM117 144v1h1v-1zM117 162v1h1v-1zM117 168v2h1v-2zM117 231v3h1v-3zM117 365v3h1v-3zM117 429v2h1v-2zM117 453v2h1v-2zM118 143v1h1v-1zM118 167v1h1v-1zM118 229v2h1v-2zM118 368v2h1v-2zM118 431v1h1v-1zM118 440v1h1v-1zM118 455v1h1v-1zM119 80v1h1v-1zM119 141v2h1v-2zM119 166v1h1v-1zM119 226v3h1v-3zM119 370v3h1v-3zM119 432v1h1v-1zM119 439v1h1v-1zM119 456v1h1v-1zM119 518v1h1v-1zM120 79v1h1v-1zM120 140v1h1v-1zM120 164v2h1v-2zM120 224v2h1v-2zM120 373v2h1v-2zM120 433v1h1v-1zM120 457v2h1v-2zM120 519v1h1v-1zM121 78v1h1v-1zM121 139v1h1v-1zM121 163v1h1v-1zM121 222v2h1v-2zM121 375v2h1v-2zM121 434v2h1v-2zM121 459v1h1v-1zM121 520v1h1v-1zM122 77v1h1v-1zM122 138v1h1v-1zM122 140v1h1v-1zM122 162v1h1v-1zM122 219v3h1v-3zM122 377v2h1v-2zM122 436v1h1v-1zM122 460v1h1v-1zM122 521v1h1v-1zM123 137v1h1v-1zM123 141v1h1v-1zM123 161v1h1v-1zM123 217v2h1v-2zM123 379v2h1v-2zM123 461v1h1v-1zM124 136v1h1v-1zM124 142v1h1v-1zM124 160v1h1v-1zM124 215v2h1v-2zM124 381v2h1v-2zM124 438v1h1v-1zM124 462v1h1v-1zM125 75v1h1v-1zM125 135v1h1v-1zM125 143v1h1v-1zM125 158v2h1v-2zM125 213v2h1v-2zM125 383v2h1v-2zM125 439v1h1v-1zM125 461v1h1v-1zM125 463v1h1v-1zM125 523v1h1v-1zM126 74v1h1v-1zM126 134v1h1v-1zM126 157v1h1v-1zM126 211v2h1v-2zM126 385v2h1v-2zM126 440v2h1v-2zM126 460v1h1v-1zM126 464v1h1v-1zM126 524v1h1v-1zM127 73v1h1v-1zM127 133v1h1v-1zM127 156v1h1v-1zM127 209v1h1v-1zM127 388v1h1v-1zM127 442v1h1v-1zM127 459v1h1v-1zM127 465v1h1v-1zM127 525v1h1v-1zM128 72v1h1v-1zM128 132v1h1v-1zM128 145v1h1v-1zM128 155v1h1v-1zM128 207v2h1v-2zM128 389v2h1v-2zM128 443v1h1v-1zM128 458v1h1v-1zM128 466v1h1v-1zM128 526v1h1v-1zM129 131v1h1v-1zM129 146v1h1v-1zM129 154v1h1v-1zM129 205v2h1v-2zM129 391v2h1v-2zM129 444v1h1v-1zM129 467v1h1v-1zM130 130v1h1v-1zM130 147v1h1v-1zM130 152v2h1v-2zM130 203v2h1v-2zM130 393v2h1v-2zM130 445v1h1v-1zM130 468v1h1v-1zM131 70v1h1v-1zM131 129v1h1v-1zM131 148v1h1v-1zM131 151v1h1v-1zM131 202v1h1v-1zM131 395v2h1v-2zM131 446v2h1v-2zM131 456v1h1v-1zM131 469v1h1v-1zM131 528v1h1v-1zM132 69v1h1v-1zM132 128v1h1v-1zM132 150v1h1v-1zM132 200v2h1v-2zM132 397v2h1v-2zM132 448v1h1v-1zM132 455v1h1v-1zM132 470v1h1v-1zM132 529v1h1v-1zM133 127v1h1v-1zM133 199v1h1v-1zM133 399v1h1v-1zM133 449v1h1v-1zM133 454v1h1v-1zM133 471v1h1v-1zM134 126v1h1v-1zM134 148v1h1v-1zM134 197v2h1v-2zM134 400v2h1v-2zM134 450v1h1v-1zM134 453v1h1v-1zM134 472v1h1v-1zM135 67v1h1v-1zM135 125v1h1v-1zM135 147v1h1v-1zM135 196v1h1v-1zM135 402v1h1v-1zM135 451v1h1v-1zM135 473v1h1v-1zM135 531v1h1v-1zM136 124v1h1v-1zM136 146v1h1v-1zM136 194v2h1v-2zM136 403v2h1v-2zM136 474v1h1v-1zM137 123v1h1v-1zM137 125v1h1v-1zM137 145v1h1v-1zM137 192v2h1v-2zM137 405v2h1v-2zM137 453v1h1v-1zM137 475v1h1v-1zM138 122v1h1v-1zM138 126v1h1v-1zM138 144v1h1v-1zM138 191v1h1v-1zM138 407v1h1v-1zM138 454v1h1v-1zM138 476v1h1v-1zM139 121v1h1v-1zM139 127v1h1v-1zM139 143v1h1v-1zM139 189v2h1v-2zM139 408v2h1v-2zM139 455v1h1v-1zM139 477v1h1v-1zM140 64v1h1v-1zM140 120v1h1v-1zM140 128v1h1v-1zM140 142v1h1v-1zM140 188v1h1v-1zM140 410v1h1v-1zM140 456v1h1v-1zM140 476v1h1v-1zM140 478v1h1v-1zM140 534v1h1v-1zM141 129v2h1v-2zM141 141v1h1v-1zM141 186v2h1v-2zM141 411v2h1v-2zM141 457v1h1v-1zM141 475v1h1v-1zM142 131v1h1v-1zM142 140v1h1v-1zM142 185v1h1v-1zM142 413v1h1v-1zM142 458v1h1v-1zM142 474v1h1v-1zM143 62v1h1v-1zM143 118v1h1v-1zM143 132v1h1v-1zM143 139v1h1v-1zM143 184v1h1v-1zM143 414v1h1v-1zM143 459v1h1v-1zM143 473v1h1v-1zM143 480v1h1v-1zM143 536v1h1v-1zM144 117v1h1v-1zM144 133v1h1v-1zM144 138v1h1v-1zM144 182v2h1v-2zM144 415v2h1v-2zM144 460v1h1v-1zM144 471v2h1v-2zM144 481v1h1v-1zM145 134v1h1v-1zM145 137v1h1v-1zM145 181v1h1v-1zM145 417v1h1v-1zM145 461v1h1v-1zM145 470v1h1v-1zM146 60v1h1v-1zM146 136v1h1v-1zM146 180v1h1v-1zM146 418v1h1v-1zM146 462v1h1v-1zM146 469v1h1v-1zM146 538v1h1v-1zM147 115v1h1v-1zM147 179v1h1v-1zM147 419v1h1v-1zM147 463v1h1v-1zM147 468v1h1v-1zM147 483v1h1v-1zM148 114v1h1v-1zM148 134v1h1v-1zM148 177v2h1v-2zM148 420v1h1v-1zM148 464v1h1v-1zM148 467v1h1v-1zM148 484v1h1v-1zM149 58v1h1v-1zM149 133v1h1v-1zM149 176v1h1v-1zM149 421v2h1v-2zM149 465v1h1v-1zM149 540v1h1v-1zM150 132v1h1v-1zM150 175v1h1v-1zM150 423v1h1v-1zM150 538v2h1v-2zM151 112v1h1v-1zM151 131v1h1v-1zM151 174v1h1v-1zM151 424v1h1v-1zM151 467v1h1v-1zM151 486v1h1v-1zM151 536v2h1v-2zM152 173v1h1v-1zM152 425v1h1v-1zM152 487v1h1v-1zM152 535v1h1v-1zM153 171v2h1v-2zM153 426v2h1v-2zM153 533v2h1v-2zM154 55v1h1v-1zM154 112v2h1v-2zM154 129v1h1v-1zM154 170v1h1v-1zM154 428v1h1v-1zM154 469v1h1v-1zM154 531v2h1v-2zM154 543v1h1v-1zM155 109v1h1v-1zM155 114v1h1v-1zM155 128v1h1v-1zM155 169v1h1v-1zM155 429v1h1v-1zM155 470v1h1v-1zM155 530v1h1v-1zM156 108v1h1v-1zM156 115v1h1v-1zM156 127v1h1v-1zM156 168v1h1v-1zM156 430v1h1v-1zM156 471v1h1v-1zM156 488v1h1v-1zM156 528v2h1v-2zM157 53v1h1v-1zM157 116v2h1v-2zM157 126v1h1v-1zM157 167v1h1v-1zM157 431v1h1v-1zM157 472v1h1v-1zM157 487v1h1v-1zM157 526v2h1v-2zM157 545v1h1v-1zM158 118v1h1v-1zM158 166v1h1v-1zM158 432v1h1v-1zM158 486v1h1v-1zM158 525v1h1v-1zM159 106v1h1v-1zM159 119v1h1v-1zM159 165v1h1v-1zM159 433v1h1v-1zM159 484v2h1v-2zM159 492v1h1v-1zM159 523v2h1v-2zM160 120v2h1v-2zM160 124v1h1v-1zM160 164v1h1v-1zM160 434v1h1v-1zM160 474v1h1v-1zM160 483v1h1v-1zM160 521v2h1v-2zM161 123v1h1v-1zM161 163v1h1v-1zM161 435v1h1v-1zM161 475v1h1v-1zM161 482v1h1v-1zM161 520v1h1v-1zM162 104v1h1v-1zM162 162v1h1v-1zM162 436v1h1v-1zM162 476v1h1v-1zM162 480v2h1v-2zM162 494v1h1v-1zM162 518v2h1v-2zM163 103v1h1v-1zM163 121v1h1v-1zM163 161v1h1v-1zM163 437v1h1v-1zM163 477v1h1v-1zM163 479v1h1v-1zM163 517v1h1v-1zM164 160v1h1v-1zM164 438v1h1v-1zM164 515v2h1v-2zM165 159v1h1v-1zM165 439v1h1v-1zM165 496v1h1v-1zM165 513v2h1v-2zM166 101v1h1v-1zM166 119v1h1v-1zM166 158v1h1v-1zM166 440v1h1v-1zM166 479v1h1v-1zM166 512v1h1v-1zM167 49v2h1v-2zM167 118v1h1v-1zM167 157v1h1v-1zM167 441v1h1v-1zM167 480v1h1v-1zM167 510v2h1v-2zM168 51v2h1v-2zM168 156v1h1v-1zM168 442v1h1v-1zM168 498v1h1v-1zM168 508v2h1v-2zM169 53v2h1v-2zM169 155v1h1v-1zM169 443v1h1v-1zM169 507v1h1v-1zM170 55v2h1v-2zM170 100v1h1v-1zM170 116v1h1v-1zM170 154v1h1v-1zM170 444v1h1v-1zM170 482v1h1v-1zM170 505v2h1v-2zM171 57v2h1v-2zM171 101v2h1v-2zM171 500v1h1v-1zM171 503v2h1v-2zM172 59v2h1v-2zM172 97v1h1v-1zM172 103v1h1v-1zM172 502v1h1v-1zM173 61v2h1v-2zM173 96v1h1v-1zM173 104v2h1v-2zM173 114v1h1v-1zM173 152v1h1v-1zM173 446v1h1v-1zM173 484v1h1v-1zM173 500v1h1v-1zM174 63v2h1v-2zM174 106v1h1v-1zM174 151v1h1v-1zM174 447v1h1v-1zM174 498v2h1v-2zM174 502v1h1v-1zM175 65v2h1v-2zM175 107v2h1v-2zM175 150v1h1v-1zM175 448v1h1v-1zM175 497v1h1v-1zM176 67v1h1v-1zM176 94v1h1v-1zM176 109v2h1v-2zM176 112v1h1v-1zM176 149v1h1v-1zM176 449v1h1v-1zM176 484v1h1v-1zM176 495v2h1v-2zM177 68v2h1v-2zM177 483v1h1v-1zM177 494v1h1v-1zM177 504v1h1v-1zM178 70v2h1v-2zM178 481v2h1v-2zM178 492v2h1v-2zM179 72v2h1v-2zM179 109v1h1v-1zM179 147v1h1v-1zM179 451v1h1v-1zM179 479v2h1v-2zM179 490v2h1v-2zM180 74v2h1v-2zM180 111v1h1v-1zM180 146v1h1v-1zM180 452v1h1v-1zM180 478v1h1v-1zM180 506v1h1v-1zM181 76v2h1v-2zM181 109v1h1v-1zM181 112v2h1v-2zM181 145v1h1v-1zM181 453v1h1v-1zM181 476v2h1v-2zM182 78v2h1v-2zM182 114v1h1v-1zM182 475v1h1v-1zM183 80v2h1v-2zM183 115v2h1v-2zM183 473v2h1v-2zM184 82v2h1v-2zM184 107v1h1v-1zM184 117v1h1v-1zM184 143v1h1v-1zM184 455v1h1v-1zM184 472v1h1v-1zM184 491v1h1v-1zM185 84v2h1v-2zM185 118v2h1v-2zM185 142v1h1v-1zM185 456v1h1v-1zM185 470v2h1v-2zM186 86v2h1v-2zM186 120v2h1v-2zM186 469v1h1v-1zM187 105v1h1v-1zM187 122v1h1v-1zM187 467v2h1v-2zM187 493v1h1v-1zM188 89v2h1v-2zM188 123v2h1v-2zM188 140v1h1v-1zM188 458v1h1v-1zM188 465v2h1v-2zM189 91v2h1v-2zM189 125v2h1v-2zM189 464v1h1v-1zM190 93v2h1v-2zM190 127v1h1v-1zM190 462v2h1v-2zM191 95v2h1v-2zM191 128v2h1v-2zM191 138v1h1v-1zM191 460v1h1v-1zM192 97v2h1v-2zM192 130v1h1v-1zM192 509v2h1v-2zM193 99v2h1v-2zM193 131v2h1v-2zM193 507v2h1v-2zM194 133v2h1v-2zM194 505v2h1v-2zM195 503v2h1v-2zM196 135v1h1v-1zM196 463v1h1v-1zM196 501v2h1v-2zM197 500v1h1v-1zM199 133v1h1v-1zM199 465v1h1v-1zM202 131v1h1v-1zM202 467v1h1v-1zM207 81v2h1v-2zM208 83v2h1v-2zM209 85v2h1v-2zM210 87v2h1v-2zM211 89v2h1v-2zM211 517v3h1v-3zM212 91v1h1v-1zM212 514v3h1v-3zM213 512v2h1v-2zM214 509v3h1v-3zM215 508v1h1v-1zM225 71v1h1v-1zM226 73v3h1v-3zM227 76v3h1v-3zM228 79v3h1v-3zM229 82v3h1v-3zM229 528v1h1v-1zM230 85v1h1v-1zM230 524v3h1v-3zM231 521v3h1v-3zM232 519v2h1v-2zM233 516v3h1v-3zM234 145v2h1v-2zM234 514v2h1v-2zM235 147v2h1v-2zM236 149v2h1v-2zM237 151v2h1v-2zM238 153v2h1v-2zM239 155v2h1v-2zM245 67v1h1v-1zM246 68v4h1v-4zM247 72v3h1v-3zM248 75v4h1v-4zM249 79v2h1v-2zM250 531v2h1v-2zM251 526v5h1v-5zM252 522v4h1v-4zM253 519v3h1v-3zM266 63v3h1v-3zM267 66v8h1v-8zM268 74v3h1v-3zM270 534v2h1v-2zM271 526v8h1v-8zM272 523v3h1v-3zM287 62v6h1v-6zM288 68v7h1v-7zM290 561v21h1v-21zM290 583v1h1v-1zM291 531v7h1v-7zM291 539v22h1v-22zM292 524v7h1v-7zM296 494v29h1v-29zM301 132v13h1v-13zM302 76v29h1v-29zM306 68v7h1v-7zM307 38v22h1v-22zM307 61v7h1v-7zM308 15v1h1v-1zM308 17v21h1v-21zM310 524v7h1v-7zM311 531v6h1v-6zM326 73v4h1v-4zM327 65v8h1v-8zM328 63v2h1v-2zM330 522v3h1v-3zM331 525v8h1v-8zM332 533v3h1v-3zM345 77v3h1v-3zM346 72v5h1v-5zM347 68v4h1v-4zM348 66v2h1v-2zM349 518v2h1v-2zM350 520v4h1v-4zM351 524v3h1v-3zM352 527v4h1v-4zM353 531v1h1v-1zM364 83v2h1v-2zM365 80v3h1v-3zM366 77v3h1v-3zM367 75v2h1v-2zM368 72v3h1v-3zM368 513v1h1v-1zM369 70v1h1v-1zM369 514v3h1v-3zM370 517v3h1v-3zM371 520v3h1v-3zM372 523v3h1v-3zM373 436v1h1v-1zM373 527v1h1v-1zM374 437v2h1v-2zM375 439v2h1v-2zM376 441v1h1v-1zM377 442v2h1v-2zM378 444v2h1v-2zM379 446v1h1v-1zM383 90v1h1v-1zM384 87v3h1v-3zM385 84v3h1v-3zM386 82v2h1v-2zM386 507v1h1v-1zM387 79v3h1v-3zM387 508v2h1v-2zM388 510v2h1v-2zM389 512v2h1v-2zM390 514v2h1v-2zM391 516v2h1v-2zM399 133v1h1v-1zM399 418v1h1v-1zM399 465v1h1v-1zM400 419v1h1v-1zM401 98v1h1v-1zM401 420v1h1v-1zM402 96v2h1v-2zM402 135v1h1v-1zM402 421v1h1v-1zM402 463v1h1v-1zM403 94v2h1v-2zM403 422v2h1v-2zM404 92v2h1v-2zM404 424v1h1v-1zM404 464v2h1v-2zM405 90v2h1v-2zM405 425v1h1v-1zM405 466v2h1v-2zM405 498v2h1v-2zM406 88v2h1v-2zM406 426v1h1v-1zM406 468v1h1v-1zM406 500v2h1v-2zM407 138v1h1v-1zM407 427v1h1v-1zM407 460v1h1v-1zM407 469v2h1v-2zM407 502v2h1v-2zM408 135v2h1v-2zM408 471v1h1v-1zM408 504v2h1v-2zM409 134v1h1v-1zM409 472v2h1v-2zM409 506v2h1v-2zM410 132v2h1v-2zM410 140v1h1v-1zM410 190v1h1v-1zM410 458v1h1v-1zM410 474v2h1v-2zM410 508v2h1v-2zM411 105v1h1v-1zM411 130v2h1v-2zM411 189v1h1v-1zM411 476v1h1v-1zM411 493v1h1v-1zM412 129v1h1v-1zM412 188v1h1v-1zM412 477v2h1v-2zM412 511v2h1v-2zM413 127v2h1v-2zM413 142v1h1v-1zM413 187v1h1v-1zM413 456v1h1v-1zM413 479v2h1v-2zM413 513v2h1v-2zM414 107v1h1v-1zM414 126v1h1v-1zM414 143v1h1v-1zM414 186v1h1v-1zM414 455v1h1v-1zM414 481v1h1v-1zM414 491v1h1v-1zM414 515v2h1v-2zM415 124v2h1v-2zM415 185v1h1v-1zM415 482v2h1v-2zM415 517v2h1v-2zM416 123v1h1v-1zM416 184v1h1v-1zM416 484v1h1v-1zM416 519v2h1v-2zM417 121v2h1v-2zM417 145v1h1v-1zM417 183v1h1v-1zM417 453v1h1v-1zM417 485v2h1v-2zM417 489v1h1v-1zM417 521v2h1v-2zM418 120v1h1v-1zM418 146v1h1v-1zM418 182v1h1v-1zM418 452v1h1v-1zM418 487v1h1v-1zM418 523v2h1v-2zM419 107v2h1v-2zM419 118v2h1v-2zM419 147v1h1v-1zM419 398v1h1v-1zM419 451v1h1v-1zM419 489v1h1v-1zM419 525v2h1v-2zM420 105v2h1v-2zM420 111v1h1v-1zM420 116v2h1v-2zM420 148v1h1v-1zM420 399v1h1v-1zM420 450v1h1v-1zM420 527v2h1v-2zM421 104v1h1v-1zM421 115v1h1v-1zM421 400v1h1v-1zM421 529v1h1v-1zM422 94v1h1v-1zM422 102v2h1v-2zM422 114v1h1v-1zM422 401v1h1v-1zM422 488v2h1v-2zM422 504v1h1v-1zM422 530v2h1v-2zM423 95v1h1v-1zM423 101v1h1v-1zM423 150v1h1v-1zM423 448v1h1v-1zM423 490v2h1v-2zM423 503v1h1v-1zM423 532v2h1v-2zM424 99v2h1v-2zM424 151v1h1v-1zM424 447v1h1v-1zM424 492v1h1v-1zM424 534v2h1v-2zM425 98v1h1v-1zM425 114v1h1v-1zM425 152v1h1v-1zM425 403v1h1v-1zM425 446v1h1v-1zM425 484v1h1v-1zM425 493v2h1v-2zM425 536v2h1v-2zM426 404v1h1v-1zM426 495v1h1v-1zM426 501v1h1v-1zM426 538v2h1v-2zM427 94v2h1v-2zM427 405v1h1v-1zM427 496v2h1v-2zM427 540v2h1v-2zM428 92v2h1v-2zM428 116v1h1v-1zM428 154v1h1v-1zM428 406v1h1v-1zM428 444v1h1v-1zM428 482v1h1v-1zM428 498v1h1v-1zM428 542v2h1v-2zM429 91v1h1v-1zM429 99v1h1v-1zM429 155v1h1v-1zM429 443v1h1v-1zM429 544v2h1v-2zM430 89v2h1v-2zM430 156v1h1v-1zM430 442v1h1v-1zM430 546v2h1v-2zM431 87v2h1v-2zM431 118v1h1v-1zM431 157v1h1v-1zM431 441v1h1v-1zM431 480v1h1v-1zM431 548v1h1v-1zM432 86v1h1v-1zM432 101v1h1v-1zM432 119v1h1v-1zM432 158v1h1v-1zM432 440v1h1v-1zM432 479v1h1v-1zM432 497v1h1v-1zM433 84v2h1v-2zM433 102v1h1v-1zM433 159v1h1v-1zM433 439v1h1v-1zM433 478v1h1v-1zM433 496v1h1v-1zM434 82v2h1v-2zM434 160v1h1v-1zM434 438v1h1v-1zM435 81v1h1v-1zM435 118v2h1v-2zM435 161v1h1v-1zM435 437v1h1v-1zM436 79v2h1v-2zM436 104v1h1v-1zM436 117v1h1v-1zM436 122v1h1v-1zM436 162v1h1v-1zM436 436v1h1v-1zM436 494v1h1v-1zM437 77v2h1v-2zM437 116v1h1v-1zM437 123v1h1v-1zM437 163v1h1v-1zM437 435v1h1v-1zM437 475v1h1v-1zM438 76v1h1v-1zM438 114v2h1v-2zM438 124v1h1v-1zM438 164v1h1v-1zM438 434v1h1v-1zM438 474v1h1v-1zM438 477v1h1v-1zM439 74v2h1v-2zM439 106v1h1v-1zM439 113v1h1v-1zM439 125v1h1v-1zM439 165v1h1v-1zM439 433v1h1v-1zM439 473v1h1v-1zM439 478v2h1v-2zM439 492v1h1v-1zM440 73v1h1v-1zM440 107v1h1v-1zM440 112v1h1v-1zM440 166v1h1v-1zM440 432v1h1v-1zM440 480v1h1v-1zM440 491v1h1v-1zM441 71v2h1v-2zM441 110v2h1v-2zM441 167v1h1v-1zM441 431v1h1v-1zM441 481v1h1v-1zM442 69v2h1v-2zM442 127v1h1v-1zM442 168v1h1v-1zM442 430v1h1v-1zM442 471v1h1v-1zM442 482v2h1v-2zM443 68v1h1v-1zM443 128v1h1v-1zM443 169v1h1v-1zM443 429v1h1v-1zM443 470v1h1v-1zM443 484v1h1v-1zM443 489v1h1v-1zM444 55v1h1v-1zM444 66v2h1v-2zM444 110v1h1v-1zM444 129v1h1v-1zM444 170v1h1v-1zM444 428v1h1v-1zM444 469v1h1v-1zM444 485v1h1v-1zM444 488v1h1v-1zM444 543v1h1v-1zM445 64v2h1v-2zM445 130v1h1v-1zM445 171v2h1v-2zM445 426v2h1v-2zM445 468v1h1v-1zM445 486v1h1v-1zM446 63v1h1v-1zM446 173v1h1v-1zM446 425v1h1v-1zM446 488v1h1v-1zM447 61v2h1v-2zM447 112v1h1v-1zM447 174v1h1v-1zM447 424v1h1v-1zM447 486v1h1v-1zM448 59v2h1v-2zM448 113v1h1v-1zM448 175v1h1v-1zM448 423v1h1v-1zM448 466v1h1v-1zM448 485v1h1v-1zM449 58v1h1v-1zM449 133v1h1v-1zM449 176v1h1v-1zM449 421v2h1v-2zM449 465v1h1v-1zM449 540v1h1v-1zM450 131v1h1v-1zM450 134v1h1v-1zM450 177v2h1v-2zM450 420v1h1v-1zM450 464v1h1v-1zM451 115v1h1v-1zM451 130v1h1v-1zM451 135v1h1v-1zM451 179v1h1v-1zM451 419v1h1v-1zM451 483v1h1v-1zM452 60v1h1v-1zM452 116v1h1v-1zM452 129v1h1v-1zM452 136v1h1v-1zM452 180v1h1v-1zM452 326v1h1v-1zM452 418v1h1v-1zM452 462v1h1v-1zM452 482v1h1v-1zM452 538v1h1v-1zM453 128v1h1v-1zM453 137v1h1v-1zM453 181v1h1v-1zM453 327v1h1v-1zM453 417v1h1v-1zM453 461v1h1v-1zM453 464v1h1v-1zM454 126v2h1v-2zM454 138v1h1v-1zM454 182v2h1v-2zM454 328v1h1v-1zM454 415v2h1v-2zM454 460v1h1v-1zM454 465v1h1v-1zM455 62v1h1v-1zM455 118v1h1v-1zM455 125v1h1v-1zM455 139v1h1v-1zM455 184v1h1v-1zM455 329v1h1v-1zM455 414v1h1v-1zM455 459v1h1v-1zM455 466v1h1v-1zM455 480v1h1v-1zM455 536v1h1v-1zM456 119v1h1v-1zM456 124v1h1v-1zM456 140v1h1v-1zM456 185v1h1v-1zM456 330v1h1v-1zM456 413v1h1v-1zM456 458v1h1v-1zM456 467v1h1v-1zM456 479v1h1v-1zM457 123v1h1v-1zM457 141v1h1v-1zM457 186v2h1v-2zM457 331v1h1v-1zM457 411v2h1v-2zM457 457v1h1v-1zM457 468v2h1v-2zM458 64v1h1v-1zM458 122v1h1v-1zM458 142v1h1v-1zM458 188v1h1v-1zM458 332v1h1v-1zM458 410v1h1v-1zM458 456v1h1v-1zM458 470v1h1v-1zM458 534v1h1v-1zM459 121v1h1v-1zM459 143v1h1v-1zM459 189v2h1v-2zM459 333v1h1v-1zM459 408v2h1v-2zM459 455v1h1v-1zM459 471v1h1v-1zM459 477v1h1v-1zM460 122v1h1v-1zM460 144v1h1v-1zM460 191v1h1v-1zM460 334v1h1v-1zM460 407v1h1v-1zM460 454v1h1v-1zM460 472v1h1v-1zM460 476v1h1v-1zM461 123v1h1v-1zM461 145v1h1v-1zM461 192v2h1v-2zM461 335v1h1v-1zM461 405v2h1v-2zM461 453v1h1v-1zM461 473v1h1v-1zM461 475v1h1v-1zM462 124v1h1v-1zM462 194v2h1v-2zM462 336v1h1v-1zM462 403v2h1v-2zM462 452v1h1v-1zM462 474v1h1v-1zM463 67v1h1v-1zM463 125v1h1v-1zM463 147v1h1v-1zM463 196v1h1v-1zM463 402v1h1v-1zM463 451v1h1v-1zM463 473v1h1v-1zM463 531v1h1v-1zM464 126v1h1v-1zM464 145v1h1v-1zM464 148v1h1v-1zM464 197v2h1v-2zM464 400v2h1v-2zM464 450v1h1v-1zM464 472v1h1v-1zM465 127v1h1v-1zM465 144v1h1v-1zM465 149v1h1v-1zM465 199v1h1v-1zM465 399v1h1v-1zM465 471v1h1v-1zM466 69v1h1v-1zM466 128v1h1v-1zM466 143v1h1v-1zM466 150v1h1v-1zM466 200v2h1v-2zM466 397v2h1v-2zM466 448v1h1v-1zM466 470v1h1v-1zM466 529v1h1v-1zM467 70v1h1v-1zM467 129v1h1v-1zM467 142v1h1v-1zM467 151v1h1v-1zM467 202v1h1v-1zM467 395v2h1v-2zM467 446v2h1v-2zM467 450v1h1v-1zM467 469v1h1v-1zM467 528v1h1v-1zM468 130v1h1v-1zM468 152v2h1v-2zM468 203v2h1v-2zM468 393v2h1v-2zM468 445v1h1v-1zM468 451v1h1v-1zM468 468v1h1v-1zM469 131v1h1v-1zM469 154v1h1v-1zM469 205v2h1v-2zM469 391v2h1v-2zM469 444v1h1v-1zM469 452v1h1v-1zM469 467v1h1v-1zM470 72v1h1v-1zM470 132v1h1v-1zM470 140v1h1v-1zM470 155v1h1v-1zM470 207v2h1v-2zM470 389v2h1v-2zM470 443v1h1v-1zM470 453v1h1v-1zM470 466v1h1v-1zM470 526v1h1v-1zM471 73v1h1v-1zM471 133v1h1v-1zM471 139v1h1v-1zM471 156v1h1v-1zM471 209v2h1v-2zM471 442v1h1v-1zM471 465v1h1v-1zM471 525v1h1v-1zM472 74v1h1v-1zM472 134v1h1v-1zM472 138v1h1v-1zM472 157v1h1v-1zM472 211v2h1v-2zM472 385v2h1v-2zM472 440v2h1v-2zM472 464v1h1v-1zM472 524v1h1v-1zM473 75v1h1v-1zM473 135v1h1v-1zM473 137v1h1v-1zM473 158v2h1v-2zM473 213v2h1v-2zM473 383v2h1v-2zM473 439v1h1v-1zM473 455v1h1v-1zM473 463v1h1v-1zM473 523v1h1v-1zM474 136v1h1v-1zM474 160v1h1v-1zM474 215v2h1v-2zM474 381v2h1v-2zM474 438v1h1v-1zM474 456v1h1v-1zM474 462v1h1v-1zM475 137v1h1v-1zM475 217v2h1v-2zM475 379v2h1v-2zM475 437v1h1v-1zM475 457v1h1v-1zM475 461v1h1v-1zM476 77v1h1v-1zM476 138v1h1v-1zM476 162v1h1v-1zM476 219v3h1v-3zM476 377v2h1v-2zM476 436v1h1v-1zM476 458v1h1v-1zM476 460v1h1v-1zM476 521v1h1v-1zM477 78v1h1v-1zM477 139v1h1v-1zM477 160v1h1v-1zM477 163v1h1v-1zM477 222v2h1v-2zM477 375v2h1v-2zM477 435v1h1v-1zM477 459v1h1v-1zM477 520v1h1v-1zM478 79v1h1v-1zM478 140v1h1v-1zM478 164v2h1v-2zM478 224v2h1v-2zM478 373v2h1v-2zM478 433v1h1v-1zM478 457v2h1v-2zM478 519v1h1v-1zM479 80v1h1v-1zM479 141v2h1v-2zM479 166v1h1v-1zM479 226v3h1v-3zM479 370v3h1v-3zM479 432v1h1v-1zM479 435v1h1v-1zM479 456v1h1v-1zM479 518v1h1v-1zM480 143v1h1v-1zM480 158v1h1v-1zM480 167v1h1v-1zM480 229v2h1v-2zM480 368v2h1v-2zM480 431v1h1v-1zM480 455v1h1v-1zM481 144v1h1v-1zM481 157v1h1v-1zM481 168v2h1v-2zM481 231v3h1v-3zM481 365v3h1v-3zM481 429v2h1v-2zM481 453v2h1v-2zM482 82v1h1v-1zM482 145v2h1v-2zM482 170v1h1v-1zM482 234v2h1v-2zM482 363v2h1v-2zM482 428v1h1v-1zM482 437v1h1v-1zM482 452v1h1v-1zM482 516v1h1v-1zM483 83v1h1v-1zM483 147v1h1v-1zM483 171v2h1v-2zM483 236v2h1v-2zM483 361v2h1v-2zM483 426v2h1v-2zM483 438v1h1v-1zM483 451v1h1v-1zM483 515v1h1v-1zM484 84v1h1v-1zM484 148v1h1v-1zM484 155v1h1v-1zM484 173v1h1v-1zM484 238v3h1v-3zM484 357v4h1v-4zM484 425v1h1v-1zM484 449v2h1v-2zM484 514v1h1v-1zM485 85v1h1v-1zM485 149v2h1v-2zM485 154v1h1v-1zM485 174v2h1v-2zM485 241v4h1v-4zM485 353v4h1v-4zM485 395v1h1v-1zM485 423v2h1v-2zM485 448v1h1v-1zM485 513v1h1v-1zM486 151v1h1v-1zM486 176v1h1v-1zM486 245v4h1v-4zM486 349v4h1v-4zM486 421v2h1v-2zM486 440v1h1v-1zM486 447v1h1v-1zM487 177v2h1v-2zM487 249v4h1v-4zM487 345v4h1v-4zM487 420v1h1v-1zM487 441v1h1v-1zM487 445v2h1v-2zM488 87v1h1v-1zM488 154v1h1v-1zM488 179v2h1v-2zM488 253v4h1v-4zM488 341v4h1v-4zM488 419v1h1v-1zM488 444v1h1v-1zM488 511v1h1v-1zM489 88v1h1v-1zM489 155v1h1v-1zM489 181v1h1v-1zM489 257v6h1v-6zM489 336v5h1v-5zM489 417v1h1v-1zM489 510v1h1v-1zM490 89v1h1v-1zM490 156v1h1v-1zM490 182v2h1v-2zM490 263v6h1v-6zM490 329v7h1v-7zM490 415v2h1v-2zM490 441v1h1v-1zM490 509v1h1v-1zM491 90v1h1v-1zM491 157v2h1v-2zM491 184v1h1v-1zM491 269v7h1v-7zM491 323v6h1v-6zM491 414v1h1v-1zM491 440v1h1v-1zM491 508v1h1v-1zM492 91v1h1v-1zM492 159v1h1v-1zM492 174v1h1v-1zM492 185v2h1v-2zM492 276v13h1v-13zM492 309v14h1v-14zM492 412v2h1v-2zM492 439v1h1v-1zM492 507v1h1v-1zM493 92v1h1v-1zM493 160v2h1v-2zM493 187v1h1v-1zM493 289v10h1v-10zM493 300v9h1v-9zM493 411v1h1v-1zM493 437v2h1v-2zM493 506v1h1v-1zM494 93v1h1v-1zM494 162v1h1v-1zM494 188v2h1v-2zM494 409v2h1v-2zM494 421v1h1v-1zM494 436v1h1v-1zM494 505v1h1v-1zM495 94v1h1v-1zM495 163v1h1v-1zM495 172v1h1v-1zM495 190v2h1v-2zM495 407v2h1v-2zM495 434v2h1v-2zM495 504v1h1v-1zM496 95v1h1v-1zM496 164v2h1v-2zM496 192v2h1v-2zM496 405v2h1v-2zM496 433v1h1v-1zM496 503v1h1v-1zM497 96v1h1v-1zM497 166v1h1v-1zM497 194v2h1v-2zM497 403v2h1v-2zM497 423v1h1v-1zM497 431v2h1v-2zM497 502v1h1v-1zM498 97v1h1v-1zM498 167v2h1v-2zM498 196v1h1v-1zM498 402v1h1v-1zM498 430v1h1v-1zM498 501v1h1v-1zM499 98v1h1v-1zM499 199v1h1v-1zM499 399v2h1v-2zM499 428v2h1v-2zM499 500v1h1v-1zM500 99v1h1v-1zM500 171v1h1v-1zM500 200v2h1v-2zM500 397v2h1v-2zM500 427v1h1v-1zM500 499v1h1v-1zM501 100v1h1v-1zM501 172v1h1v-1zM501 202v2h1v-2zM501 395v2h1v-2zM501 498v1h1v-1zM502 101v1h1v-1zM502 173v1h1v-1zM502 204v2h1v-2zM502 393v2h1v-2zM502 424v1h1v-1zM502 497v1h1v-1zM503 102v1h1v-1zM503 174v2h1v-2zM503 206v2h1v-2zM503 391v2h1v-2zM503 422v2h1v-2zM503 496v1h1v-1zM504 103v1h1v-1zM504 176v1h1v-1zM504 208v2h1v-2zM504 389v2h1v-2zM504 421v1h1v-1zM504 495v1h1v-1zM505 104v1h1v-1zM505 177v2h1v-2zM505 210v2h1v-2zM505 386v3h1v-3zM505 419v2h1v-2zM505 494v1h1v-1zM506 105v1h1v-1zM506 179v2h1v-2zM506 213v2h1v-2zM506 384v2h1v-2zM506 417v2h1v-2zM506 493v1h1v-1zM507 106v1h1v-1zM507 181v2h1v-2zM507 215v3h1v-3zM507 381v2h1v-2zM507 415v2h1v-2zM507 429v1h1v-1zM507 492v1h1v-1zM508 107v1h1v-1zM508 183v2h1v-2zM508 218v3h1v-3zM508 378v3h1v-3zM508 413v2h1v-2zM508 491v1h1v-1zM509 108v1h1v-1zM509 185v2h1v-2zM509 221v3h1v-3zM509 375v3h1v-3zM509 411v2h1v-2zM509 490v1h1v-1zM510 109v1h1v-1zM510 187v1h1v-1zM510 224v2h1v-2zM510 373v2h1v-2zM510 409v2h1v-2zM510 489v1h1v-1zM511 110v1h1v-1zM511 189v2h1v-2zM511 226v3h1v-3zM511 370v3h1v-3zM511 408v1h1v-1zM511 488v1h1v-1zM512 111v2h1v-2zM512 191v2h1v-2zM512 229v1h1v-1zM512 231v1h1v-1zM512 367v3h1v-3zM512 405v2h1v-2zM512 432v1h1v-1zM512 486v2h1v-2zM513 113v1h1v-1zM513 193v2h1v-2zM513 232v4h1v-4zM513 363v1h1v-1zM513 365v2h1v-2zM513 403v2h1v-2zM513 485v1h1v-1zM514 114v1h1v-1zM514 195v2h1v-2zM514 236v4h1v-4zM514 359v4h1v-4zM514 401v2h1v-2zM514 484v1h1v-1zM515 115v1h1v-1zM515 197v2h1v-2zM515 240v3h1v-3zM515 356v3h1v-3zM515 399v2h1v-2zM515 483v1h1v-1zM516 116v1h1v-1zM516 199v2h1v-2zM516 243v4h1v-4zM516 352v4h1v-4zM516 397v2h1v-2zM516 482v1h1v-1zM517 117v2h1v-2zM517 201v3h1v-3zM517 247v2h1v-2zM517 250v1h1v-1zM517 348v4h1v-4zM517 395v2h1v-2zM517 435v1h1v-1zM517 480v2h1v-2zM518 119v1h1v-1zM518 204v2h1v-2zM518 251v4h1v-4zM518 343v2h1v-2zM518 346v2h1v-2zM518 393v2h1v-2zM518 479v1h1v-1zM519 120v1h1v-1zM519 207v2h1v-2zM519 255v6h1v-6zM519 337v6h1v-6zM519 390v3h1v-3zM519 478v1h1v-1zM520 121v1h1v-1zM520 209v2h1v-2zM520 261v6h1v-6zM520 331v6h1v-6zM520 389v1h1v-1zM520 437v1h1v-1zM520 477v1h1v-1zM521 122v1h1v-1zM521 211v3h1v-3zM521 267v1h1v-1zM521 269v4h1v-4zM521 325v1h1v-1zM521 327v4h1v-4zM521 385v3h1v-3zM521 476v1h1v-1zM522 123v2h1v-2zM522 214v3h1v-3zM522 273v15h1v-15zM522 311v14h1v-14zM522 382v3h1v-3zM522 474v2h1v-2zM523 125v1h1v-1zM523 217v2h1v-2zM523 289v10h1v-10zM523 300v6h1v-6zM523 307v4h1v-4zM523 380v2h1v-2zM523 473v1h1v-1zM524 126v1h1v-1zM524 219v3h1v-3zM524 377v3h1v-3zM524 472v1h1v-1zM525 127v1h1v-1zM525 222v2h1v-2zM525 375v2h1v-2zM525 440v1h1v-1zM525 471v1h1v-1zM526 128v1h1v-1zM526 224v1h1v-1zM526 372v3h1v-3zM526 470v1h1v-1zM527 129v2h1v-2zM527 227v4h1v-4zM527 370v2h1v-2zM527 468v2h1v-2zM528 131v1h1v-1zM528 231v3h1v-3zM528 365v3h1v-3zM528 467v1h1v-1zM529 132v1h1v-1zM529 177v1h1v-1zM529 234v3h1v-3zM529 361v4h1v-4zM529 466v1h1v-1zM530 133v2h1v-2zM530 237v4h1v-4zM530 358v3h1v-3zM530 443v1h1v-1zM530 464v2h1v-2zM531 135v1h1v-1zM531 241v3h1v-3zM531 355v3h1v-3zM531 463v1h1v-1zM532 136v2h1v-2zM532 244v1h1v-1zM532 246v2h1v-2zM532 351v4h1v-4zM532 461v2h1v-2zM533 138v2h1v-2zM533 248v5h1v-5zM533 346v2h1v-2zM533 349v2h1v-2zM533 459v2h1v-2zM534 140v1h1v-1zM534 253v6h1v-6zM534 340v6h1v-6zM534 458v1h1v-1zM535 141v2h1v-2zM535 259v6h1v-6zM535 334v6h1v-6zM535 446v1h1v-1zM535 456v2h1v-2zM536 143v1h1v-1zM536 265v1h1v-1zM536 267v4h1v-4zM536 329v5h1v-5zM536 455v1h1v-1zM537 144v2h1v-2zM537 271v16h1v-16zM537 312v16h1v-16zM537 453v2h1v-2zM538 146v1h1v-1zM538 288v19h1v-19zM538 308v4h1v-4zM538 452v1h1v-1zM539 147v2h1v-2zM539 450v2h1v-2zM540 149v1h1v-1zM540 449v1h1v-1zM541 150v2h1v-2zM541 447v2h1v-2zM542 152v2h1v-2zM542 445v2h1v-2zM543 154v1h1v-1zM543 444v1h1v-1zM544 155v2h1v-2zM544 442v2h1v-2zM545 157v1h1v-1zM545 440v2h1v-2zM546 158v2h1v-2zM546 438v2h1v-2zM547 160v2h1v-2zM547 436v2h1v-2zM548 162v2h1v-2zM548 434v2h1v-2zM549 164v2h1v-2zM549 432v2h1v-2zM550 166v1h1v-1zM550 430v2h1v-2zM551 168v2h1v-2zM551 428v2h1v-2zM552 170v2h1v-2zM552 426v2h1v-2zM553 172v2h1v-2zM553 424v2h1v-2zM554 174v2h1v-2zM554 422v2h1v-2zM555 176v2h1v-2zM555 420v2h1v-2zM556 178v2h1v-2zM556 418v2h1v-2zM557 180v2h1v-2zM557 416v2h1v-2zM558 182v3h1v-3zM558 414v2h1v-2zM559 185v2h1v-2zM559 412v2h1v-2zM560 187v3h1v-3zM560 409v3h1v-3zM561 190v2h1v-2zM561 407v2h1v-2zM562 192v3h1v-3zM562 404v3h1v-3zM563 195v2h1v-2zM563 401v3h1v-3zM564 197v3h1v-3zM564 399v2h1v-2zM565 200v3h1v-3zM565 396v3h1v-3zM566 203v2h1v-2zM566 394v2h1v-2zM567 205v3h1v-3zM567 391v3h1v-3zM568 208v2h1v-2zM568 389v2h1v-2zM569 210v3h1v-3zM569 386v3h1v-3zM570 213v4h1v-4zM570 382v4h1v-4zM571 217v4h1v-4zM571 378v4h1v-4zM572 221v3h1v-3zM572 375v3h1v-3zM573 224v4h1v-4zM573 371v4h1v-4zM574 228v3h1v-3zM574 368v3h1v-3zM575 231v4h1v-4zM575 364v4h1v-4zM576 235v4h1v-4zM576 360v4h1v-4zM577 239v5h1v-5zM577 355v5h1v-5zM578 244v7h1v-7zM578 348v7h1v-7zM579 251v8h1v-8zM579 340v8h1v-8zM580 259v7h1v-7zM580 333v7h1v-7zM581 266v11h1v-11zM581 322v11h1v-11zM582 277v15h1v-15zM582 307v1h1v-1zM582 309v13h1v-13zM583 292v15h1v-15z"/>
<path fill="#c0c0c0" d="M0 0h760v1h-760zM2 299h13v1h-13zM16 299h44v1h-44zM106 299h32v1h-32zM144 299h5v1h-5zM150 299h5v1h-5zM156 299h143v1h-143zM300 299h6v1h-6zM307 299h102v1h-102zM412 299h21v1h-21zM434 299h39v1h-39zM474 299h11v1h-11zM486 299h7v1h-7zM539 299h44v1h-44zM584 299h13v1h-13zM0 599h760v1h-760zM0 1v598h1v-598zM294 566v17h1v-17zM294 584v12h1v-12zM295 507v16h1v-16zM295 524v7h1v-7zM295 539v27h1v-27zM296 447v46h1v-46zM297 388v59h1v-59zM298 329v55h1v-55zM298 385v3h1v-3zM299 270v14h1v-14zM299 285v14h1v-14zM299 300v29h1v-29zM300 211v59h1v-59zM301 151v5h1v-5zM301 157v54h1v-54zM302 106v45h1v-45zM303 33v27h1v-27zM303 68v7h1v-7zM303 76v16h1v-16zM304 3v12h1v-12zM304 16v17h1v-17zM410 299v1h1v-1zM599 1v598h1v-598zM759 1v598h1v-598z"/>
<path fill="#808080" d="M132 138h2v1h-2zM465 138h2v1h-2zM129 141h2v1h-2zM471 144h2v1h-2zM477 144h2v1h-2zM121 145h2v1h-2zM471 149h2v1h-2zM121 150h2v1h-2zM127 150h2v1h-2zM476 150h2v1h-2zM482 150h2v1h-2zM115 151h2v1h-2zM112 154h2v1h-2zM119 154h2v1h-2zM476 155h2v1h-2zM488 156h2v1h-2zM116 157h2v1h-2zM123 157h2v1h-2zM484 159h2v1h-2zM107 160h2v1h-2zM120 160h2v1h-2zM488 161h2v1h-2zM480 162h2v1h-2zM104 163h2v1h-2zM111 163h2v1h-2zM493 163h2v1h-2zM484 164h2v1h-2zM107 165h2v1h-2zM490 165h2v1h-2zM115 166h2v1h-2zM481 166h2v1h-2zM495 166h2v1h-2zM110 167h2v1h-2zM487 167h2v1h-2zM104 168h2v1h-2zM113 169h2v1h-2zM484 169h2v1h-2zM491 169h2v1h-2zM99 170h2v1h-2zM101 171h2v1h-2zM108 171h2v1h-2zM487 172h2v1h-2zM104 173h2v1h-2zM111 173h2v1h-2zM500 173h2v1h-2zM498 174h2v1h-2zM107 175h2v1h-2zM109 176h2v1h-2zM495 176h2v1h-2zM95 177h2v1h-2zM502 177h2v1h-2zM97 178h2v1h-2zM492 178h2v1h-2zM500 178h2v1h-2zM490 179h2v1h-2zM100 180h2v1h-2zM497 180h2v1h-2zM504 180h2v1h-2zM93 181h2v1h-2zM502 181h2v1h-2zM95 182h2v1h-2zM103 182h2v1h-2zM494 182h2v1h-2zM97 183h2v1h-2zM105 183h2v1h-2zM492 183h2v1h-2zM499 183h2v1h-2zM91 184h2v1h-2zM99 184h2v1h-2zM506 184h2v1h-2zM93 185h2v1h-2zM101 185h2v1h-2zM496 185h2v1h-2zM504 185h2v1h-2zM95 186h2v1h-2zM103 186h2v1h-2zM494 186h2v1h-2zM502 186h2v1h-2zM97 187h2v1h-2zM500 187h2v1h-2zM89 188h2v1h-2zM99 188h2v1h-2zM498 188h2v1h-2zM91 189h2v1h-2zM101 189h2v1h-2zM496 189h2v1h-2zM93 190h2v1h-2zM95 191h2v1h-2zM510 191h2v1h-2zM97 192h2v1h-2zM508 192h2v1h-2zM99 193h2v1h-2zM506 193h2v1h-2zM504 194h2v1h-2zM85 195h2v1h-2zM502 195h2v1h-2zM512 195h2v1h-2zM87 196h2v1h-2zM500 196h2v1h-2zM510 196h2v1h-2zM89 197h2v1h-2zM508 197h2v1h-2zM91 198h2v1h-2zM506 198h2v1h-2zM84 199h2v1h-2zM93 199h2v1h-2zM504 199h2v1h-2zM513 199h2v1h-2zM86 200h2v1h-2zM95 200h2v1h-2zM502 200h2v1h-2zM511 200h2v1h-2zM88 201h3v1h-3zM508 201h3v1h-3zM91 202h2v1h-2zM506 202h2v1h-2zM82 203h2v1h-2zM93 203h2v1h-2zM504 203h2v1h-2zM515 203h2v1h-2zM84 204h2v1h-2zM513 204h2v1h-2zM86 205h3v1h-3zM510 205h3v1h-3zM89 206h2v1h-2zM508 206h2v1h-2zM81 207h2v1h-2zM91 207h2v1h-2zM506 207h2v1h-2zM83 208h2v1h-2zM85 209h2v1h-2zM87 210h2v1h-2zM89 211h2v1h-2zM517 211h3v1h-3zM91 212h2v1h-2zM514 212h3v1h-3zM512 213h2v1h-2zM522 213h2v1h-2zM509 214h3v1h-3zM520 214h2v1h-2zM77 215h3v1h-3zM518 215h2v1h-2zM80 216h2v1h-2zM515 216h3v1h-3zM82 217h3v1h-3zM513 217h2v1h-2zM76 218h2v1h-2zM85 218h3v1h-3zM511 218h2v1h-2zM520 218h3v1h-3zM78 219h2v1h-2zM88 219h2v1h-2zM509 219h2v1h-2zM517 219h3v1h-3zM80 220h3v1h-3zM515 220h2v1h-2zM83 221h2v1h-2zM512 221h3v1h-3zM75 222h3v1h-3zM85 222h2v1h-2zM510 222h2v1h-2zM521 222h3v1h-3zM78 223h2v1h-2zM87 223h2v1h-2zM518 223h3v1h-3zM80 224h3v1h-3zM516 224h2v1h-2zM83 225h3v1h-3zM513 225h3v1h-3zM73 226h3v1h-3zM76 227h2v1h-2zM78 228h3v1h-3zM81 229h3v1h-3zM84 230h2v1h-2zM524 230h3v1h-3zM521 231h3v1h-3zM519 232h2v1h-2zM516 233h3v1h-3zM71 234h3v1h-3zM514 234h2v1h-2zM524 234h4v1h-4zM74 235h2v1h-2zM521 235h3v1h-3zM76 236h3v1h-3zM517 236h4v1h-4zM79 237h3v1h-3zM515 237h2v1h-2zM70 238h4v1h-4zM82 238h2v1h-2zM525 238h4v1h-4zM74 239h3v1h-3zM522 239h3v1h-3zM77 240h4v1h-4zM518 240h4v1h-4zM81 241h2v1h-2zM516 241h2v1h-2zM68 242h2v1h-2zM526 242h4v1h-4zM70 243h4v1h-4zM523 243h3v1h-3zM74 244h5v1h-5zM519 244h4v1h-4zM79 245h3v1h-3zM517 245h2v1h-2zM67 246h2v1h-2zM69 247h4v1h-4zM73 248h5v1h-5zM78 249h3v1h-3zM531 250h2v1h-2zM526 251h5v1h-5zM522 252h4v1h-4zM519 253h3v1h-3zM65 254h2v1h-2zM532 254h2v1h-2zM67 255h5v1h-5zM527 255h5v1h-5zM72 256h5v1h-5zM522 256h5v1h-5zM77 257h2v1h-2zM520 257h2v1h-2zM65 258h2v1h-2zM532 258h2v1h-2zM67 259h8v1h-8zM524 259h8v1h-8zM75 260h4v1h-4zM520 260h4v1h-4zM64 262h2v1h-2zM533 262h2v1h-2zM66 263h8v1h-8zM525 263h8v1h-8zM74 264h4v1h-4zM521 264h4v1h-4zM63 266h3v1h-3zM66 267h8v1h-8zM74 268h3v1h-3zM534 270h2v1h-2zM526 271h8v1h-8zM522 272h4v1h-4zM62 274h3v1h-3zM534 274h3v1h-3zM65 275h8v1h-8zM526 275h8v1h-8zM73 276h3v1h-3zM523 276h3v1h-3zM62 279h6v1h-6zM531 279h6v1h-6zM68 280h8v1h-8zM523 280h8v1h-8zM62 283h6v1h-6zM531 283h6v1h-6zM68 284h8v1h-8zM523 284h8v1h-8zM61 287h7v1h-7zM68 288h7v1h-7zM531 291h7v1h-7zM524 292h7v1h-7zM61 295h7v1h-7zM531 295h7v1h-7zM68 296h7v1h-7zM524 296h7v1h-7zM61 299h13v1h-13zM525 299h13v1h-13zM68 302h7v1h-7zM524 302h7v1h-7zM61 303h7v1h-7zM464 303h2v1h-2zM531 303h7v1h-7zM462 304h2v1h-2zM460 305h2v1h-2zM68 306h7v1h-7zM61 307h7v1h-7zM457 307h2v1h-2zM455 308h2v1h-2zM143 310h2v1h-2zM524 310h7v1h-7zM140 311h3v1h-3zM531 311h7v1h-7zM137 312h3v1h-3zM134 313h3v1h-3zM68 314h8v1h-8zM132 314h2v1h-2zM523 314h8v1h-8zM62 315h6v1h-6zM531 315h6v1h-6zM68 318h8v1h-8zM523 318h8v1h-8zM62 319h6v1h-6zM531 319h6v1h-6zM73 322h3v1h-3zM523 322h3v1h-3zM65 323h8v1h-8zM526 323h8v1h-8zM62 324h3v1h-3zM534 324h3v1h-3zM73 326h4v1h-4zM65 327h8v1h-8zM63 328h2v1h-2zM522 330h3v1h-3zM525 331h8v1h-8zM533 332h3v1h-3zM74 334h4v1h-4zM521 334h4v1h-4zM66 335h8v1h-8zM525 335h8v1h-8zM64 336h2v1h-2zM533 336h2v1h-2zM75 338h4v1h-4zM520 338h4v1h-4zM67 339h8v1h-8zM524 339h8v1h-8zM65 340h2v1h-2zM532 340h2v1h-2zM77 341h2v1h-2zM520 341h2v1h-2zM72 342h5v1h-5zM522 342h5v1h-5zM67 343h5v1h-5zM527 343h5v1h-5zM65 344h2v1h-2zM532 344h2v1h-2zM77 345h3v1h-3zM72 346h5v1h-5zM68 347h4v1h-4zM66 348h2v1h-2zM518 349h3v1h-3zM521 350h4v1h-4zM525 351h5v1h-5zM445 352h2v1h-2zM530 352h2v1h-2zM80 353h2v1h-2zM447 353h3v1h-3zM517 353h3v1h-3zM76 354h4v1h-4zM450 354h2v1h-2zM520 354h4v1h-4zM73 355h3v1h-3zM452 355h3v1h-3zM524 355h5v1h-5zM69 356h4v1h-4zM455 356h2v1h-2zM529 356h2v1h-2zM81 357h2v1h-2zM516 357h2v1h-2zM77 358h4v1h-4zM518 358h4v1h-4zM74 359h3v1h-3zM522 359h3v1h-3zM70 360h4v1h-4zM515 360h2v1h-2zM525 360h4v1h-4zM82 361h2v1h-2zM517 361h3v1h-3zM78 362h4v1h-4zM520 362h2v1h-2zM75 363h3v1h-3zM522 363h3v1h-3zM71 364h4v1h-4zM83 364h2v1h-2zM525 364h3v1h-3zM80 365h3v1h-3zM77 366h3v1h-3zM75 367h2v1h-2zM72 368h3v1h-3zM513 368h2v1h-2zM515 369h3v1h-3zM518 370h2v1h-2zM520 371h3v1h-3zM523 372h3v1h-3zM83 373h3v1h-3zM513 373h3v1h-3zM80 374h3v1h-3zM516 374h2v1h-2zM78 375h2v1h-2zM510 375h2v1h-2zM518 375h3v1h-3zM75 376h3v1h-3zM87 376h2v1h-2zM512 376h2v1h-2zM521 376h3v1h-3zM84 377h3v1h-3zM514 377h2v1h-2zM81 378h3v1h-3zM516 378h3v1h-3zM79 379h2v1h-2zM88 379h2v1h-2zM509 379h2v1h-2zM519 379h2v1h-2zM76 380h3v1h-3zM86 380h2v1h-2zM511 380h3v1h-3zM521 380h2v1h-2zM84 381h2v1h-2zM514 381h2v1h-2zM81 382h3v1h-3zM516 382h3v1h-3zM79 383h2v1h-2zM519 383h3v1h-3zM77 384h2v1h-2zM87 384h3v1h-3zM75 385h2v1h-2zM84 385h3v1h-3zM82 386h2v1h-2zM506 386h2v1h-2zM79 387h3v1h-3zM508 387h2v1h-2zM510 388h2v1h-2zM512 389h2v1h-2zM514 390h2v1h-2zM91 391h2v1h-2zM506 391h2v1h-2zM516 391h2v1h-2zM89 392h2v1h-2zM508 392h2v1h-2zM86 393h3v1h-3zM510 393h3v1h-3zM84 394h2v1h-2zM513 394h2v1h-2zM82 395h2v1h-2zM93 395h2v1h-2zM504 395h2v1h-2zM515 395h2v1h-2zM91 396h2v1h-2zM506 396h2v1h-2zM88 397h3v1h-3zM508 397h3v1h-3zM86 398h2v1h-2zM95 398h2v1h-2zM502 398h2v1h-2zM511 398h2v1h-2zM84 399h2v1h-2zM93 399h2v1h-2zM504 399h2v1h-2zM513 399h2v1h-2zM91 400h2v1h-2zM506 400h2v1h-2zM89 401h2v1h-2zM508 401h2v1h-2zM87 402h2v1h-2zM97 402h2v1h-2zM510 402h2v1h-2zM95 403h2v1h-2zM93 404h2v1h-2zM91 405h2v1h-2zM498 405h2v1h-2zM89 406h2v1h-2zM500 406h2v1h-2zM502 407h2v1h-2zM504 408h2v1h-2zM101 409h2v1h-2zM496 409h2v1h-2zM506 409h2v1h-2zM99 410h2v1h-2zM498 410h2v1h-2zM508 410h2v1h-2zM97 411h2v1h-2zM500 411h2v1h-2zM95 412h2v1h-2zM103 412h2v1h-2zM494 412h2v1h-2zM502 412h2v1h-2zM93 413h2v1h-2zM101 413h2v1h-2zM496 413h2v1h-2zM504 413h2v1h-2zM91 414h2v1h-2zM498 414h2v1h-2zM506 414h2v1h-2zM98 415h2v1h-2zM105 415h2v1h-2zM492 415h2v1h-2zM500 415h2v1h-2zM103 416h2v1h-2zM494 416h2v1h-2zM502 416h2v1h-2zM95 417h2v1h-2zM504 417h2v1h-2zM93 418h2v1h-2zM100 418h2v1h-2zM497 418h2v1h-2zM107 419h2v1h-2zM97 420h2v1h-2zM105 420h2v1h-2zM500 420h2v1h-2zM95 421h2v1h-2zM502 421h2v1h-2zM102 422h2v1h-2zM488 422h2v1h-2zM490 423h2v1h-2zM99 424h2v1h-2zM111 425h2v1h-2zM486 425h2v1h-2zM493 425h2v1h-2zM489 427h2v1h-2zM496 427h2v1h-2zM107 428h2v1h-2zM113 429h2v1h-2zM484 429h2v1h-2zM493 430h2v1h-2zM103 431h2v1h-2zM110 431h2v1h-2zM487 431h2v1h-2zM116 432h2v1h-2zM107 433h2v1h-2zM483 433h2v1h-2zM490 433h2v1h-2zM113 434h2v1h-2zM104 435h2v1h-2zM118 435h2v1h-2zM493 435h2v1h-2zM487 436h2v1h-2zM109 437h2v1h-2zM114 438h2v1h-2zM478 439h2v1h-2zM110 441h2v1h-2zM122 442h2v1h-2zM475 442h2v1h-2zM482 442h2v1h-2zM479 445h2v1h-2zM116 447h2v1h-2zM121 448h2v1h-2zM127 448h2v1h-2zM476 448h2v1h-2zM483 448h2v1h-2zM471 449h2v1h-2zM121 453h2v1h-2zM126 454h2v1h-2zM477 454h2v1h-2zM468 457h2v1h-2zM132 460h2v1h-2zM465 460h2v1h-2zM60 279v1h1v-1zM60 283v1h1v-1zM60 315v1h1v-1zM60 319v1h1v-1zM61 328v1h1v-1zM62 262v1h1v-1zM62 336v1h1v-1zM63 258v1h1v-1zM63 340v1h1v-1zM68 357v1h1v-1zM68 361v1h1v-1zM69 233v1h1v-1zM69 237v1h1v-1zM69 365v1h1v-1zM70 369v1h1v-1zM71 225v1h1v-1zM73 221v1h1v-1zM73 377v1h1v-1zM74 217v1h1v-1zM74 381v1h1v-1zM75 214v1h1v-1zM77 388v1h1v-1zM80 202v1h1v-1zM80 206v1h1v-1zM80 396v1h1v-1zM82 198v1h1v-1zM82 400v1h1v-1zM84 194v1h1v-1zM84 404v1h1v-1zM86 226v1h1v-1zM86 372v1h1v-1zM86 403v1h1v-1zM86 408v1h1v-1zM88 407v1h1v-1zM90 383v1h1v-1zM90 415v1h1v-1zM92 419v1h1v-1zM93 208v1h1v-1zM93 390v1h1v-1zM94 422v1h1v-1zM95 204v1h1v-1zM95 394v1h1v-1zM96 426v1h1v-1zM97 201v1h1v-1zM97 397v1h1v-1zM97 416v1h1v-1zM98 169v1h1v-1zM98 425v1h1v-1zM99 179v1h1v-1zM99 419v1h1v-1zM100 165v1h1v-1zM100 414v1h1v-1zM101 423v1h1v-1zM101 433v1h1v-1zM102 166v1h1v-1zM102 181v1h1v-1zM102 417v1h1v-1zM102 432v1h1v-1zM103 162v1h1v-1zM103 167v1h1v-1zM103 172v1h1v-1zM103 436v1h1v-1zM104 421v1h1v-1zM105 158v1h1v-1zM105 430v1h1v-1zM105 440v1h1v-1zM106 164v1h1v-1zM106 169v1h1v-1zM106 174v1h1v-1zM106 429v1h1v-1zM106 434v1h1v-1zM107 170v1h1v-1zM107 439v1h1v-1zM108 438v1h1v-1zM108 443v1h1v-1zM109 161v1h1v-1zM109 166v1h1v-1zM109 418v1h1v-1zM109 427v1h1v-1zM109 432v1h1v-1zM109 442v1h1v-1zM110 152v1h1v-1zM110 162v1h1v-1zM110 172v1h1v-1zM110 426v1h1v-1zM111 153v1h1v-1zM111 436v1h1v-1zM112 168v1h1v-1zM112 430v1h1v-1zM112 435v1h1v-1zM112 440v1h1v-1zM113 164v1h1v-1zM113 439v1h1v-1zM113 450v1h1v-1zM114 150v1h1v-1zM114 155v1h1v-1zM114 165v1h1v-1zM115 156v1h1v-1zM115 170v1h1v-1zM115 428v1h1v-1zM115 433v1h1v-1zM115 448v1h1v-1zM116 437v1h1v-1zM116 453v1h1v-1zM117 146v1h1v-1zM117 152v1h1v-1zM117 167v1h1v-1zM117 436v1h1v-1zM117 452v1h1v-1zM118 142v1h1v-1zM118 147v1h1v-1zM118 153v1h1v-1zM118 158v1h1v-1zM118 446v1h1v-1zM118 451v1h1v-1zM118 456v1h1v-1zM119 143v1h1v-1zM119 148v1h1v-1zM119 159v1h1v-1zM119 445v1h1v-1zM119 450v1h1v-1zM119 455v1h1v-1zM120 144v1h1v-1zM120 149v1h1v-1zM120 434v1h1v-1zM120 444v1h1v-1zM120 449v1h1v-1zM120 454v1h1v-1zM121 155v1h1v-1zM121 443v1h1v-1zM122 156v1h1v-1zM122 161v1h1v-1zM122 458v1h1v-1zM123 146v1h1v-1zM123 151v1h1v-1zM123 447v1h1v-1zM123 452v1h1v-1zM123 457v1h1v-1zM124 147v1h1v-1zM124 152v1h1v-1zM124 441v1h1v-1zM124 446v1h1v-1zM124 451v1h1v-1zM124 456v1h1v-1zM125 137v1h1v-1zM125 148v1h1v-1zM125 153v1h1v-1zM125 440v1h1v-1zM125 445v1h1v-1zM125 450v1h1v-1zM125 455v1h1v-1zM126 138v1h1v-1zM126 149v1h1v-1zM126 154v1h1v-1zM126 444v1h1v-1zM126 449v1h1v-1zM127 139v1h1v-1zM127 155v1h1v-1zM127 211v1h1v-1zM127 386v1h1v-1zM127 443v1h1v-1zM128 134v1h1v-1zM128 140v1h1v-1zM128 453v1h1v-1zM128 464v1h1v-1zM129 135v1h1v-1zM129 151v1h1v-1zM129 212v1h1v-1zM129 385v1h1v-1zM129 447v1h1v-1zM129 452v1h1v-1zM129 463v1h1v-1zM130 136v1h1v-1zM130 446v1h1v-1zM130 451v1h1v-1zM130 462v1h1v-1zM131 131v1h1v-1zM131 137v1h1v-1zM131 142v1h1v-1zM131 213v1h1v-1zM131 384v1h1v-1zM131 450v1h1v-1zM131 461v1h1v-1zM131 467v1h1v-1zM132 132v1h1v-1zM132 143v1h1v-1zM132 449v1h1v-1zM132 466v1h1v-1zM133 133v1h1v-1zM133 144v1h1v-1zM133 214v1h1v-1zM133 383v1h1v-1zM133 465v1h1v-1zM134 128v1h1v-1zM134 134v1h1v-1zM134 139v1h1v-1zM134 145v1h1v-1zM134 459v1h1v-1zM134 464v1h1v-1zM134 470v1h1v-1zM135 129v1h1v-1zM135 135v1h1v-1zM135 140v1h1v-1zM135 146v1h1v-1zM135 215v1h1v-1zM135 382v1h1v-1zM135 458v1h1v-1zM135 463v1h1v-1zM135 469v1h1v-1zM136 130v1h1v-1zM136 136v1h1v-1zM136 141v1h1v-1zM136 457v1h1v-1zM136 462v1h1v-1zM136 468v1h1v-1zM137 131v1h1v-1zM137 137v1h1v-1zM137 142v1h1v-1zM137 216v1h1v-1zM137 381v1h1v-1zM137 456v1h1v-1zM137 461v1h1v-1zM137 467v1h1v-1zM137 473v1h1v-1zM138 132v2h1v-2zM138 138v1h1v-1zM138 143v1h1v-1zM138 455v1h1v-1zM138 460v1h1v-1zM138 465v2h1v-2zM138 472v1h1v-1zM139 134v1h1v-1zM139 139v1h1v-1zM139 217v1h1v-1zM139 380v1h1v-1zM139 459v1h1v-1zM139 464v1h1v-1zM139 471v1h1v-1zM140 122v1h1v-1zM140 135v1h1v-1zM140 140v1h1v-1zM140 458v1h1v-1zM140 463v1h1v-1zM140 470v1h1v-1zM141 123v1h1v-1zM141 136v1h1v-1zM141 218v1h1v-1zM141 379v1h1v-1zM141 462v1h1v-1zM141 468v2h1v-2zM142 118v1h1v-1zM142 124v1h1v-1zM142 137v1h1v-1zM142 461v1h1v-1zM142 467v1h1v-1zM142 480v1h1v-1zM143 119v1h1v-1zM143 125v1h1v-1zM143 138v1h1v-1zM143 219v1h1v-1zM143 378v1h1v-1zM143 460v1h1v-1zM143 466v1h1v-1zM143 479v1h1v-1zM144 120v1h1v-1zM144 126v2h1v-2zM144 465v1h1v-1zM144 477v2h1v-2zM145 121v2h1v-2zM145 128v1h1v-1zM145 220v1h1v-1zM145 377v1h1v-1zM145 464v1h1v-1zM145 476v1h1v-1zM146 117v1h1v-1zM146 123v1h1v-1zM146 129v1h1v-1zM146 463v1h1v-1zM146 475v1h1v-1zM146 481v1h1v-1zM147 118v1h1v-1zM147 124v1h1v-1zM147 130v1h1v-1zM147 221v1h1v-1zM147 376v1h1v-1zM147 474v1h1v-1zM147 480v1h1v-1zM148 113v1h1v-1zM148 119v1h1v-1zM148 125v1h1v-1zM148 131v1h1v-1zM148 473v1h1v-1zM148 479v1h1v-1zM149 114v1h1v-1zM149 120v1h1v-1zM149 126v1h1v-1zM149 132v1h1v-1zM149 222v1h1v-1zM149 375v1h1v-1zM149 471v2h1v-2zM149 478v1h1v-1zM150 115v1h1v-1zM150 121v2h1v-2zM150 127v2h1v-2zM150 470v1h1v-1zM150 476v2h1v-2zM150 483v2h1v-2zM151 116v2h1v-2zM151 123v1h1v-1zM151 129v1h1v-1zM151 223v1h1v-1zM151 374v1h1v-1zM151 469v1h1v-1zM151 475v1h1v-1zM151 482v1h1v-1zM152 118v1h1v-1zM152 124v1h1v-1zM152 474v1h1v-1zM152 481v1h1v-1zM152 488v1h1v-1zM153 119v1h1v-1zM153 125v1h1v-1zM153 224v1h1v-1zM153 373v1h1v-1zM153 473v1h1v-1zM153 479v2h1v-2zM153 486v2h1v-2zM154 120v1h1v-1zM154 126v1h1v-1zM154 472v1h1v-1zM154 478v1h1v-1zM154 485v1h1v-1zM155 108v1h1v-1zM155 121v1h1v-1zM155 127v1h1v-1zM155 225v1h1v-1zM155 372v1h1v-1zM155 471v1h1v-1zM155 477v1h1v-1zM155 484v1h1v-1zM156 109v1h1v-1zM156 122v2h1v-2zM156 475v2h1v-2zM156 482v2h1v-2zM157 110v2h1v-2zM157 124v1h1v-1zM157 226v1h1v-1zM157 371v1h1v-1zM157 474v1h1v-1zM157 481v1h1v-1zM158 105v1h1v-1zM158 112v1h1v-1zM158 480v1h1v-1zM158 493v1h1v-1zM159 107v1h1v-1zM159 113v1h1v-1zM159 227v1h1v-1zM159 370v1h1v-1zM159 478v2h1v-2zM159 491v1h1v-1zM160 108v1h1v-1zM160 114v2h1v-2zM160 477v1h1v-1zM160 490v1h1v-1zM161 109v2h1v-2zM161 116v1h1v-1zM161 228v1h1v-1zM161 369v1h1v-1zM161 476v1h1v-1zM161 489v1h1v-1zM162 103v1h1v-1zM162 111v1h1v-1zM162 117v1h1v-1zM162 487v2h1v-2zM162 495v1h1v-1zM163 104v2h1v-2zM163 112v1h1v-1zM163 118v2h1v-2zM163 229v1h1v-1zM163 368v1h1v-1zM163 486v1h1v-1zM163 493v2h1v-2zM164 106v1h1v-1zM164 113v2h1v-2zM164 485v1h1v-1zM164 492v1h1v-1zM165 101v1h1v-1zM165 107v2h1v-2zM165 115v1h1v-1zM165 230v1h1v-1zM165 367v1h1v-1zM165 483v2h1v-2zM165 490v2h1v-2zM165 498v1h1v-1zM166 102v1h1v-1zM166 109v1h1v-1zM166 116v2h1v-2zM166 482v1h1v-1zM166 489v1h1v-1zM166 496v1h1v-1zM167 103v2h1v-2zM167 110v2h1v-2zM167 231v1h1v-1zM167 366v1h1v-1zM167 481v1h1v-1zM167 487v2h1v-2zM167 495v1h1v-1zM168 105v1h1v-1zM168 112v1h1v-1zM168 486v1h1v-1zM168 493v2h1v-2zM169 106v1h1v-1zM169 113v2h1v-2zM169 232v1h1v-1zM169 365v1h1v-1zM169 484v2h1v-2zM169 492v1h1v-1zM169 500v1h1v-1zM170 107v2h1v-2zM170 115v1h1v-1zM170 483v1h1v-1zM170 491v1h1v-1zM170 498v1h1v-1zM171 109v1h1v-1zM171 233v1h1v-1zM171 364v1h1v-1zM171 489v2h1v-2zM171 496v2h1v-2zM172 96v1h1v-1zM172 110v1h1v-1zM172 488v1h1v-1zM172 495v1h1v-1zM173 97v2h1v-2zM173 111v2h1v-2zM173 234v1h1v-1zM173 363v1h1v-1zM173 486v2h1v-2zM173 493v2h1v-2zM174 99v2h1v-2zM174 492v1h1v-1zM175 101v1h1v-1zM175 235v1h1v-1zM175 362v1h1v-1zM175 490v2h1v-2zM176 102v2h1v-2zM176 488v2h1v-2zM176 504v1h1v-1zM177 95v2h1v-2zM177 104v1h1v-1zM177 236v1h1v-1zM177 361v1h1v-1zM177 502v2h1v-2zM178 97v2h1v-2zM178 105v2h1v-2zM178 500v2h1v-2zM179 99v1h1v-1zM179 107v2h1v-2zM179 237v1h1v-1zM179 360v1h1v-1zM179 499v1h1v-1zM180 93v2h1v-2zM180 100v2h1v-2zM180 109v1h1v-1zM180 497v2h1v-2zM181 95v2h1v-2zM181 102v1h1v-1zM181 238v1h1v-1zM181 359v1h1v-1zM181 496v1h1v-1zM181 504v2h1v-2zM182 97v1h1v-1zM182 103v2h1v-2zM182 494v2h1v-2zM182 502v2h1v-2zM183 98v2h1v-2zM183 105v2h1v-2zM183 239v1h1v-1zM183 358v1h1v-1zM183 492v2h1v-2zM183 500v2h1v-2zM184 91v2h1v-2zM184 100v1h1v-1zM184 498v2h1v-2zM184 506v2h1v-2zM185 93v2h1v-2zM185 101v2h1v-2zM185 240v1h1v-1zM185 357v1h1v-1zM185 496v2h1v-2zM185 504v2h1v-2zM186 95v2h1v-2zM186 103v2h1v-2zM186 494v2h1v-2zM186 502v2h1v-2zM187 97v2h1v-2zM187 241v1h1v-1zM187 356v1h1v-1zM187 500v2h1v-2zM188 99v2h1v-2zM188 498v2h1v-2zM188 508v2h1v-2zM189 101v2h1v-2zM189 242v1h1v-1zM189 355v1h1v-1zM189 496v2h1v-2zM189 506v2h1v-2zM190 86v1h1v-1zM190 504v2h1v-2zM191 87v2h1v-2zM191 243v1h1v-1zM191 354v1h1v-1zM191 461v1h1v-1zM191 502v2h1v-2zM192 89v2h1v-2zM192 459v1h1v-1zM192 500v2h1v-2zM193 91v2h1v-2zM193 244v1h1v-1zM193 353v1h1v-1zM193 498v2h1v-2zM194 84v1h1v-1zM194 93v2h1v-2zM194 457v1h1v-1zM194 514v1h1v-1zM195 85v2h1v-2zM195 95v2h1v-2zM195 135v1h1v-1zM195 245v1h1v-1zM195 352v1h1v-1zM195 455v1h1v-1zM195 512v2h1v-2zM196 87v2h1v-2zM196 97v2h1v-2zM196 137v1h1v-1zM196 453v1h1v-1zM196 510v2h1v-2zM197 89v2h1v-2zM197 99v1h1v-1zM197 247v1h1v-1zM197 351v1h1v-1zM197 508v2h1v-2zM198 82v1h1v-1zM198 91v2h1v-2zM198 139v1h1v-1zM198 451v1h1v-1zM198 506v2h1v-2zM198 516v1h1v-1zM199 84v2h1v-2zM199 93v2h1v-2zM199 141v1h1v-1zM199 248v1h1v-1zM199 350v1h1v-1zM199 449v1h1v-1zM199 504v2h1v-2zM199 513v2h1v-2zM200 86v2h1v-2zM200 95v2h1v-2zM200 143v1h1v-1zM200 447v1h1v-1zM200 502v2h1v-2zM200 511v2h1v-2zM201 88v3h1v-3zM201 97v1h1v-1zM201 145v1h1v-1zM201 249v1h1v-1zM201 349v1h1v-1zM201 501v1h1v-1zM201 508v3h1v-3zM202 80v1h1v-1zM202 91v2h1v-2zM202 445v1h1v-1zM202 506v2h1v-2zM202 518v1h1v-1zM203 82v2h1v-2zM203 93v2h1v-2zM203 147v1h1v-1zM203 250v1h1v-1zM203 348v1h1v-1zM203 443v1h1v-1zM203 504v2h1v-2zM203 515v2h1v-2zM204 84v2h1v-2zM204 95v1h1v-1zM204 149v1h1v-1zM204 441v1h1v-1zM204 503v1h1v-1zM204 513v2h1v-2zM205 86v3h1v-3zM205 151v1h1v-1zM205 251v1h1v-1zM205 347v1h1v-1zM205 510v3h1v-3zM206 89v2h1v-2zM206 153v1h1v-1zM206 439v1h1v-1zM206 508v2h1v-2zM206 518v1h1v-1zM207 91v2h1v-2zM207 252v1h1v-1zM207 346v1h1v-1zM207 437v1h1v-1zM207 506v2h1v-2zM207 516v2h1v-2zM208 93v1h1v-1zM208 155v1h1v-1zM208 435v1h1v-1zM208 505v1h1v-1zM208 514v2h1v-2zM209 157v1h1v-1zM209 253v1h1v-1zM209 345v1h1v-1zM209 512v2h1v-2zM210 77v1h1v-1zM210 159v1h1v-1zM210 433v1h1v-1zM210 510v2h1v-2zM211 79v3h1v-3zM211 161v1h1v-1zM211 254v1h1v-1zM211 344v1h1v-1zM211 431v1h1v-1zM211 508v2h1v-2zM212 82v2h1v-2zM212 429v1h1v-1zM212 506v2h1v-2zM213 75v2h1v-2zM213 84v3h1v-3zM213 163v1h1v-1zM213 255v1h1v-1zM213 343v1h1v-1zM214 77v2h1v-2zM214 87v3h1v-3zM214 165v1h1v-1zM214 427v1h1v-1zM214 523v1h1v-1zM215 79v2h1v-2zM215 90v1h1v-1zM215 167v1h1v-1zM215 256v1h1v-1zM215 342v1h1v-1zM215 425v1h1v-1zM215 519v3h1v-3zM216 81v3h1v-3zM216 423v1h1v-1zM216 516v3h1v-3zM217 74v1h1v-1zM217 84v2h1v-2zM217 169v1h1v-1zM217 257v1h1v-1zM217 341v1h1v-1zM217 514v2h1v-2zM217 524v1h1v-1zM218 76v3h1v-3zM218 86v2h1v-2zM218 171v1h1v-1zM218 421v1h1v-1zM218 511v3h1v-3zM218 521v2h1v-2zM219 79v2h1v-2zM219 88v2h1v-2zM219 173v1h1v-1zM219 258v1h1v-1zM219 340v1h1v-1zM219 419v1h1v-1zM219 509v2h1v-2zM219 519v2h1v-2zM220 81v3h1v-3zM220 175v1h1v-1zM220 417v1h1v-1zM220 516v3h1v-3zM221 73v1h1v-1zM221 84v3h1v-3zM221 259v1h1v-1zM221 339v1h1v-1zM221 514v2h1v-2zM221 525v1h1v-1zM222 75v3h1v-3zM222 87v2h1v-2zM222 177v1h1v-1zM222 415v1h1v-1zM222 512v2h1v-2zM222 521v3h1v-3zM223 78v2h1v-2zM223 179v1h1v-1zM223 260v1h1v-1zM223 413v1h1v-1zM223 510v2h1v-2zM223 518v3h1v-3zM224 80v3h1v-3zM224 181v1h1v-1zM224 411v1h1v-1zM224 516v2h1v-2zM225 83v3h1v-3zM225 183v1h1v-1zM225 261v1h1v-1zM225 337v1h1v-1zM225 513v3h1v-3zM225 527v1h1v-1zM226 86v1h1v-1zM226 409v1h1v-1zM226 512v1h1v-1zM226 523v3h1v-3zM227 185v1h1v-1zM227 262v1h1v-1zM227 336v1h1v-1zM227 407v1h1v-1zM227 520v3h1v-3zM228 187v1h1v-1zM228 405v1h1v-1zM228 518v2h1v-2zM229 70v1h1v-1zM229 189v1h1v-1zM229 263v1h1v-1zM229 335v1h1v-1zM229 515v3h1v-3zM230 72v3h1v-3zM230 403v1h1v-1zM230 513v2h1v-2zM231 75v2h1v-2zM231 191v1h1v-1zM231 264v1h1v-1zM231 334v1h1v-1zM231 401v1h1v-1zM232 77v3h1v-3zM232 193v1h1v-1zM232 399v1h1v-1zM233 69v1h1v-1zM233 80v3h1v-3zM233 195v1h1v-1zM233 265v1h1v-1zM233 333v1h1v-1zM233 529v1h1v-1zM234 71v4h1v-4zM234 83v2h1v-2zM234 197v1h1v-1zM234 397v1h1v-1zM234 525v3h1v-3zM235 75v3h1v-3zM235 266v1h1v-1zM235 332v1h1v-1zM235 395v1h1v-1zM235 522v3h1v-3zM236 78v4h1v-4zM236 199v1h1v-1zM236 393v1h1v-1zM236 520v2h1v-2zM237 69v1h1v-1zM237 82v2h1v-2zM237 201v1h1v-1zM237 267v1h1v-1zM237 331v1h1v-1zM237 517v3h1v-3zM237 529v1h1v-1zM238 70v4h1v-4zM238 203v1h1v-1zM238 391v1h1v-1zM238 515v2h1v-2zM238 525v4h1v-4zM239 74v3h1v-3zM239 205v1h1v-1zM239 268v1h1v-1zM239 330v1h1v-1zM239 389v1h1v-1zM239 522v3h1v-3zM240 77v4h1v-4zM240 387v1h1v-1zM240 518v4h1v-4zM241 68v1h1v-1zM241 81v2h1v-2zM241 207v1h1v-1zM241 269v1h1v-1zM241 329v1h1v-1zM241 516v2h1v-2zM242 69v4h1v-4zM242 209v1h1v-1zM242 385v1h1v-1zM242 529v2h1v-2zM243 73v3h1v-3zM243 211v1h1v-1zM243 270v1h1v-1zM243 327v1h1v-1zM243 383v1h1v-1zM243 524v5h1v-5zM244 76v4h1v-4zM244 213v1h1v-1zM244 381v1h1v-1zM244 520v4h1v-4zM245 80v2h1v-2zM245 271v1h1v-1zM245 326v1h1v-1zM245 517v3h1v-3zM246 215v1h1v-1zM246 379v1h1v-1zM246 530v2h1v-2zM247 217v1h1v-1zM247 272v1h1v-1zM247 325v1h1v-1zM247 377v1h1v-1zM247 525v5h1v-5zM248 219v1h1v-1zM248 375v1h1v-1zM248 521v4h1v-4zM249 273v1h1v-1zM249 324v1h1v-1zM249 518v3h1v-3zM250 66v2h1v-2zM250 221v1h1v-1zM250 373v1h1v-1zM251 68v4h1v-4zM251 223v1h1v-1zM251 274v1h1v-1zM251 323v1h1v-1zM251 371v1h1v-1zM252 72v5h1v-5zM252 225v1h1v-1zM252 369v1h1v-1zM253 77v3h1v-3zM253 227v1h1v-1zM253 275v1h1v-1zM253 322v1h1v-1zM254 65v2h1v-2zM254 367v1h1v-1zM254 532v2h1v-2zM255 67v5h1v-5zM255 229v1h1v-1zM255 276v1h1v-1zM255 321v1h1v-1zM255 365v1h1v-1zM255 527v5h1v-5zM256 72v5h1v-5zM256 231v1h1v-1zM256 363v1h1v-1zM256 522v5h1v-5zM257 77v2h1v-2zM257 233v1h1v-1zM257 277v1h1v-1zM257 320v1h1v-1zM257 520v2h1v-2zM258 63v1h1v-1zM258 65v2h1v-2zM258 235v1h1v-1zM258 361v1h1v-1zM258 532v2h1v-2zM258 535v1h1v-1zM259 67v8h1v-8zM259 278v1h1v-1zM259 319v1h1v-1zM259 359v1h1v-1zM259 524v8h1v-8zM260 75v4h1v-4zM260 237v1h1v-1zM260 357v1h1v-1zM260 520v4h1v-4zM261 239v1h1v-1zM261 279v1h1v-1zM261 318v1h1v-1zM262 62v1h1v-1zM262 64v2h1v-2zM262 241v1h1v-1zM262 355v1h1v-1zM262 533v2h1v-2zM262 536v1h1v-1zM263 66v8h1v-8zM263 243v1h1v-1zM263 280v1h1v-1zM263 317v1h1v-1zM263 353v1h1v-1zM263 525v8h1v-8zM264 74v4h1v-4zM264 351v1h1v-1zM264 521v4h1v-4zM265 245v1h1v-1zM265 282v1h1v-1zM265 316v1h1v-1zM266 247v1h1v-1zM266 349v1h1v-1zM266 533v3h1v-3zM267 249v1h1v-1zM267 283v1h1v-1zM267 315v1h1v-1zM267 347v1h1v-1zM267 525v8h1v-8zM268 345v1h1v-1zM268 522v3h1v-3zM269 251v1h1v-1zM269 284v1h1v-1zM269 314v1h1v-1zM270 61v1h1v-1zM270 63v2h1v-2zM270 253v1h1v-1zM270 343v1h1v-1zM271 65v8h1v-8zM271 255v1h1v-1zM271 285v1h1v-1zM271 313v1h1v-1zM271 341v1h1v-1zM272 73v4h1v-4zM272 257v1h1v-1zM272 339v1h1v-1zM273 286v1h1v-1zM273 312v1h1v-1zM274 62v3h1v-3zM274 259v1h1v-1zM274 337v1h1v-1zM274 534v3h1v-3zM275 65v8h1v-8zM275 261v1h1v-1zM275 287v1h1v-1zM275 311v1h1v-1zM275 335v1h1v-1zM275 526v8h1v-8zM276 73v3h1v-3zM276 263v1h1v-1zM276 333v1h1v-1zM276 523v3h1v-3zM277 265v1h1v-1zM277 288v1h1v-1zM277 310v1h1v-1zM278 331v1h1v-1zM279 60v1h1v-1zM279 62v6h1v-6zM279 267v1h1v-1zM279 289v1h1v-1zM279 309v1h1v-1zM279 329v1h1v-1zM279 531v6h1v-6zM279 538v1h1v-1zM280 68v8h1v-8zM280 269v1h1v-1zM280 327v1h1v-1zM280 523v8h1v-8zM281 271v1h1v-1zM281 290v1h1v-1zM281 308v1h1v-1zM282 325v1h1v-1zM283 60v1h1v-1zM283 62v6h1v-6zM283 273v1h1v-1zM283 291v1h1v-1zM283 307v1h1v-1zM283 323v1h1v-1zM283 531v6h1v-6zM283 538v1h1v-1zM284 68v8h1v-8zM284 275v1h1v-1zM284 321v1h1v-1zM284 523v8h1v-8zM285 277v1h1v-1zM285 292v1h1v-1zM285 306v1h1v-1zM286 279v1h1v-1zM286 319v1h1v-1zM287 293v1h1v-1zM287 305v1h1v-1zM287 317v1h1v-1zM287 531v7h1v-7zM288 281v1h1v-1zM288 315v1h1v-1zM288 524v7h1v-7zM289 283v1h1v-1zM289 294v1h1v-1zM289 304v1h1v-1zM290 285v1h1v-1zM290 313v1h1v-1zM291 61v7h1v-7zM291 287v1h1v-1zM291 295v1h1v-1zM291 303v1h1v-1zM291 311v1h1v-1zM292 68v7h1v-7zM292 309v1h1v-1zM293 289v1h1v-1zM293 296v1h1v-1zM293 302v1h1v-1zM294 291v1h1v-1zM294 307v1h1v-1zM295 61v7h1v-7zM295 293v1h1v-1zM295 297v1h1v-1zM295 301v1h1v-1zM295 305v1h1v-1zM295 531v7h1v-7zM296 68v7h1v-7zM296 295v1h1v-1zM296 303v1h1v-1zM296 524v7h1v-7zM297 298v1h1v-1zM297 300v1h1v-1zM298 297v1h1v-1zM298 301v1h1v-1zM299 61v14h1v-14zM299 299v1h1v-1zM299 524v14h1v-14zM300 297v1h1v-1zM300 301v1h1v-1zM301 298v1h1v-1zM301 300v1h1v-1zM302 68v7h1v-7zM302 295v1h1v-1zM302 303v1h1v-1zM302 524v7h1v-7zM303 61v7h1v-7zM303 293v1h1v-1zM303 297v1h1v-1zM303 301v1h1v-1zM303 305v1h1v-1zM303 531v7h1v-7zM304 291v1h1v-1zM304 307v1h1v-1zM305 302v1h1v-1zM305 309v1h1v-1zM306 289v1h1v-1zM306 524v7h1v-7zM307 287v1h1v-1zM307 295v1h1v-1zM307 303v1h1v-1zM307 311v1h1v-1zM307 531v7h1v-7zM308 285v1h1v-1zM308 313v1h1v-1zM309 294v1h1v-1zM309 304v1h1v-1zM309 315v1h1v-1zM310 68v7h1v-7zM310 283v1h1v-1zM310 317v1h1v-1zM311 61v7h1v-7zM311 281v1h1v-1zM311 293v1h1v-1zM311 305v1h1v-1zM312 279v1h1v-1zM312 319v1h1v-1zM313 292v1h1v-1zM313 306v1h1v-1zM313 321v1h1v-1zM314 68v8h1v-8zM314 277v1h1v-1zM314 323v1h1v-1zM314 523v8h1v-8zM315 60v1h1v-1zM315 62v6h1v-6zM315 275v1h1v-1zM315 291v1h1v-1zM315 307v1h1v-1zM315 325v1h1v-1zM315 531v6h1v-6zM315 538v1h1v-1zM316 273v1h1v-1zM317 290v1h1v-1zM317 308v1h1v-1zM317 327v1h1v-1zM318 68v8h1v-8zM318 271v1h1v-1zM318 329v1h1v-1zM318 523v8h1v-8zM319 60v1h1v-1zM319 62v6h1v-6zM319 269v1h1v-1zM319 289v1h1v-1zM319 309v1h1v-1zM319 331v1h1v-1zM319 531v6h1v-6zM319 538v1h1v-1zM320 267v1h1v-1zM321 288v1h1v-1zM321 310v1h1v-1zM321 333v1h1v-1zM322 73v3h1v-3zM322 265v1h1v-1zM322 335v1h1v-1zM322 523v3h1v-3zM323 65v8h1v-8zM323 263v1h1v-1zM323 287v1h1v-1zM323 311v1h1v-1zM323 337v1h1v-1zM323 526v8h1v-8zM324 62v3h1v-3zM324 261v1h1v-1zM324 339v1h1v-1zM324 534v3h1v-3zM325 286v1h1v-1zM325 312v1h1v-1zM326 259v1h1v-1zM326 341v1h1v-1zM326 522v4h1v-4zM327 257v1h1v-1zM327 285v1h1v-1zM327 313v1h1v-1zM327 343v1h1v-1zM327 526v8h1v-8zM328 255v1h1v-1zM328 345v1h1v-1zM328 534v2h1v-2zM328 537v1h1v-1zM329 284v1h1v-1zM329 314v1h1v-1zM329 347v1h1v-1zM330 74v3h1v-3zM330 253v1h1v-1zM331 66v8h1v-8zM331 251v1h1v-1zM331 283v1h1v-1zM331 315v1h1v-1zM331 349v1h1v-1zM332 63v3h1v-3zM332 249v1h1v-1zM332 351v1h1v-1zM333 282v1h1v-1zM333 316v1h1v-1zM333 353v1h1v-1zM334 74v4h1v-4zM334 247v1h1v-1zM334 521v4h1v-4zM335 66v8h1v-8zM335 245v1h1v-1zM335 281v1h1v-1zM335 318v1h1v-1zM335 355v1h1v-1zM335 525v8h1v-8zM336 62v1h1v-1zM336 64v2h1v-2zM336 243v1h1v-1zM336 357v1h1v-1zM336 533v2h1v-2zM336 536v1h1v-1zM337 280v1h1v-1zM337 319v1h1v-1zM337 359v1h1v-1zM338 75v4h1v-4zM338 241v1h1v-1zM338 361v1h1v-1zM338 520v4h1v-4zM339 67v8h1v-8zM339 239v1h1v-1zM339 279v1h1v-1zM339 320v1h1v-1zM339 524v8h1v-8zM340 63v1h1v-1zM340 65v2h1v-2zM340 237v1h1v-1zM340 363v1h1v-1zM340 532v2h1v-2zM340 535v1h1v-1zM341 77v2h1v-2zM341 278v1h1v-1zM341 321v1h1v-1zM341 365v1h1v-1zM341 520v2h1v-2zM342 72v5h1v-5zM342 235v1h1v-1zM342 367v1h1v-1zM342 522v5h1v-5zM343 67v5h1v-5zM343 233v1h1v-1zM343 277v1h1v-1zM343 322v1h1v-1zM343 369v1h1v-1zM343 527v5h1v-5zM344 65v2h1v-2zM344 231v1h1v-1zM344 532v2h1v-2zM345 276v1h1v-1zM345 323v1h1v-1zM345 371v1h1v-1zM345 519v3h1v-3zM346 229v1h1v-1zM346 373v1h1v-1zM346 522v4h1v-4zM347 227v1h1v-1zM347 275v1h1v-1zM347 324v1h1v-1zM347 375v1h1v-1zM347 526v5h1v-5zM348 225v1h1v-1zM348 377v1h1v-1zM348 531v2h1v-2zM349 78v3h1v-3zM349 274v1h1v-1zM349 325v1h1v-1zM350 73v5h1v-5zM350 223v1h1v-1zM350 379v1h1v-1zM351 69v4h1v-4zM351 221v1h1v-1zM351 273v1h1v-1zM351 326v1h1v-1zM351 381v1h1v-1zM352 67v2h1v-2zM352 219v1h1v-1zM352 383v1h1v-1zM353 79v3h1v-3zM353 272v1h1v-1zM353 327v1h1v-1zM353 517v2h1v-2zM354 74v5h1v-5zM354 217v1h1v-1zM354 385v1h1v-1zM354 519v4h1v-4zM355 70v4h1v-4zM355 215v1h1v-1zM355 271v1h1v-1zM355 328v1h1v-1zM355 387v1h1v-1zM355 523v3h1v-3zM356 68v2h1v-2zM356 213v1h1v-1zM356 389v1h1v-1zM356 526v4h1v-4zM357 81v2h1v-2zM357 269v1h1v-1zM357 329v1h1v-1zM357 391v1h1v-1zM357 516v2h1v-2zM357 530v1h1v-1zM358 77v4h1v-4zM358 211v1h1v-1zM358 518v4h1v-4zM359 74v3h1v-3zM359 209v1h1v-1zM359 268v1h1v-1zM359 330v1h1v-1zM359 393v1h1v-1zM359 522v3h1v-3zM360 70v4h1v-4zM360 82v2h1v-2zM360 207v1h1v-1zM360 395v1h1v-1zM360 525v4h1v-4zM361 68v1h1v-1zM361 79v3h1v-3zM361 267v1h1v-1zM361 331v1h1v-1zM361 397v1h1v-1zM361 515v2h1v-2zM361 530v1h1v-1zM362 76v3h1v-3zM362 205v1h1v-1zM362 399v1h1v-1zM362 517v4h1v-4zM363 74v2h1v-2zM363 203v1h1v-1zM363 266v1h1v-1zM363 332v1h1v-1zM363 521v3h1v-3zM364 71v3h1v-3zM364 201v1h1v-1zM364 401v1h1v-1zM364 514v2h1v-2zM364 524v4h1v-4zM365 69v1h1v-1zM365 265v1h1v-1zM365 333v1h1v-1zM365 403v1h1v-1zM365 516v3h1v-3zM365 529v1h1v-1zM366 199v1h1v-1zM366 405v1h1v-1zM366 519v2h1v-2zM367 197v1h1v-1zM367 264v1h1v-1zM367 334v1h1v-1zM367 407v1h1v-1zM367 521v3h1v-3zM368 84v2h1v-2zM368 195v1h1v-1zM368 524v3h1v-3zM369 81v3h1v-3zM369 263v1h1v-1zM369 335v1h1v-1zM369 409v1h1v-1zM369 528v1h1v-1zM370 78v3h1v-3zM370 193v1h1v-1zM370 411v1h1v-1zM371 76v2h1v-2zM371 191v1h1v-1zM371 262v1h1v-1zM371 336v1h1v-1zM371 413v1h1v-1zM372 73v3h1v-3zM372 86v1h1v-1zM372 189v1h1v-1zM372 512v1h1v-1zM373 71v1h1v-1zM373 83v3h1v-3zM373 261v1h1v-1zM373 337v1h1v-1zM373 415v1h1v-1zM373 513v3h1v-3zM374 80v3h1v-3zM374 187v1h1v-1zM374 417v1h1v-1zM374 516v2h1v-2zM375 78v2h1v-2zM375 87v2h1v-2zM375 185v1h1v-1zM375 260v1h1v-1zM375 338v1h1v-1zM375 419v1h1v-1zM375 518v3h1v-3zM376 75v3h1v-3zM376 85v2h1v-2zM376 183v1h1v-1zM376 421v1h1v-1zM376 510v2h1v-2zM376 521v3h1v-3zM377 73v1h1v-1zM377 83v2h1v-2zM377 259v1h1v-1zM377 339v1h1v-1zM377 512v3h1v-3zM377 525v1h1v-1zM378 80v3h1v-3zM378 181v1h1v-1zM378 423v1h1v-1zM378 515v2h1v-2zM379 78v2h1v-2zM379 88v2h1v-2zM379 179v1h1v-1zM379 258v1h1v-1zM379 340v1h1v-1zM379 425v1h1v-1zM379 509v2h1v-2zM379 517v3h1v-3zM380 76v2h1v-2zM380 85v3h1v-3zM380 177v1h1v-1zM380 427v1h1v-1zM380 511v2h1v-2zM380 520v3h1v-3zM381 74v1h1v-1zM381 82v3h1v-3zM381 257v1h1v-1zM381 341v1h1v-1zM381 429v1h1v-1zM381 513v2h1v-2zM381 524v1h1v-1zM382 80v2h1v-2zM382 175v1h1v-1zM382 515v3h1v-3zM383 77v3h1v-3zM383 173v1h1v-1zM383 256v1h1v-1zM383 342v1h1v-1zM383 431v1h1v-1zM383 508v1h1v-1zM383 518v2h1v-2zM384 75v1h1v-1zM384 171v1h1v-1zM384 433v1h1v-1zM384 509v3h1v-3zM384 520v2h1v-2zM385 255v1h1v-1zM385 343v1h1v-1zM385 435v1h1v-1zM385 512v2h1v-2zM385 522v2h1v-2zM386 91v2h1v-2zM386 169v1h1v-1zM386 514v3h1v-3zM387 89v2h1v-2zM387 167v1h1v-1zM387 254v1h1v-1zM387 344v1h1v-1zM387 437v1h1v-1zM387 517v3h1v-3zM388 87v2h1v-2zM388 165v1h1v-1zM388 439v1h1v-1zM388 521v1h1v-1zM389 85v2h1v-2zM389 253v1h1v-1zM389 345v1h1v-1zM389 441v1h1v-1zM390 83v2h1v-2zM390 93v1h1v-1zM390 163v1h1v-1zM390 443v1h1v-1zM390 505v1h1v-1zM391 81v2h1v-2zM391 91v2h1v-2zM391 161v1h1v-1zM391 252v1h1v-1zM391 346v1h1v-1zM391 506v2h1v-2zM392 80v1h1v-1zM392 89v2h1v-2zM392 159v1h1v-1zM392 445v1h1v-1zM392 508v2h1v-2zM393 86v3h1v-3zM393 251v1h1v-1zM393 347v1h1v-1zM393 447v1h1v-1zM393 510v3h1v-3zM394 84v2h1v-2zM394 95v1h1v-1zM394 157v1h1v-1zM394 449v1h1v-1zM394 503v1h1v-1zM394 513v2h1v-2zM395 82v2h1v-2zM395 93v2h1v-2zM395 155v1h1v-1zM395 250v1h1v-1zM395 348v1h1v-1zM395 451v1h1v-1zM395 504v2h1v-2zM395 515v2h1v-2zM396 80v1h1v-1zM396 91v2h1v-2zM396 153v1h1v-1zM396 506v2h1v-2zM396 518v1h1v-1zM397 88v3h1v-3zM397 97v1h1v-1zM397 249v1h1v-1zM397 349v1h1v-1zM397 453v1h1v-1zM397 501v1h1v-1zM397 508v3h1v-3zM398 86v2h1v-2zM398 95v2h1v-2zM398 151v1h1v-1zM398 455v1h1v-1zM398 502v2h1v-2zM398 511v2h1v-2zM399 84v2h1v-2zM399 93v2h1v-2zM399 149v1h1v-1zM399 248v1h1v-1zM399 350v1h1v-1zM399 457v1h1v-1zM399 504v2h1v-2zM399 513v2h1v-2zM400 82v1h1v-1zM400 91v2h1v-2zM400 147v1h1v-1zM400 459v1h1v-1zM400 506v2h1v-2zM400 516v1h1v-1zM401 89v2h1v-2zM401 247v1h1v-1zM401 351v1h1v-1zM401 499v1h1v-1zM401 508v2h1v-2zM402 87v2h1v-2zM402 145v1h1v-1zM402 461v1h1v-1zM402 500v2h1v-2zM402 510v2h1v-2zM403 85v2h1v-2zM403 143v1h1v-1zM403 246v1h1v-1zM403 353v1h1v-1zM403 463v1h1v-1zM403 502v2h1v-2zM403 512v2h1v-2zM404 84v1h1v-1zM404 141v1h1v-1zM404 504v2h1v-2zM404 514v1h1v-1zM405 99v2h1v-2zM405 245v1h1v-1zM405 354v1h1v-1zM405 506v2h1v-2zM406 97v2h1v-2zM406 139v1h1v-1zM406 508v2h1v-2zM407 95v2h1v-2zM407 137v1h1v-1zM407 244v1h1v-1zM407 355v1h1v-1zM407 510v2h1v-2zM408 93v2h1v-2zM408 512v1h1v-1zM409 91v2h1v-2zM409 101v2h1v-2zM409 243v1h1v-1zM409 356v1h1v-1zM409 496v2h1v-2zM410 89v2h1v-2zM410 99v2h1v-2zM410 498v2h1v-2zM411 97v2h1v-2zM411 242v1h1v-1zM411 357v1h1v-1zM411 500v2h1v-2zM412 95v2h1v-2zM412 103v2h1v-2zM412 494v2h1v-2zM412 502v2h1v-2zM413 93v2h1v-2zM413 101v2h1v-2zM413 241v1h1v-1zM413 358v1h1v-1zM413 496v2h1v-2zM413 504v2h1v-2zM414 91v2h1v-2zM414 99v2h1v-2zM414 498v1h1v-1zM414 506v2h1v-2zM415 97v2h1v-2zM415 105v2h1v-2zM415 240v1h1v-1zM415 359v1h1v-1zM415 492v2h1v-2zM415 499v2h1v-2zM416 95v2h1v-2zM416 103v2h1v-2zM416 494v2h1v-2zM416 501v1h1v-1zM417 93v2h1v-2zM417 102v1h1v-1zM417 239v1h1v-1zM417 360v1h1v-1zM417 496v1h1v-1zM417 502v2h1v-2zM418 100v2h1v-2zM418 489v1h1v-1zM418 497v2h1v-2zM418 504v2h1v-2zM419 99v1h1v-1zM419 238v1h1v-1zM419 361v1h1v-1zM419 490v2h1v-2zM419 499v1h1v-1zM420 97v2h1v-2zM420 492v2h1v-2zM420 500v2h1v-2zM421 95v2h1v-2zM421 111v1h1v-1zM421 237v1h1v-1zM421 362v1h1v-1zM421 494v1h1v-1zM421 502v2h1v-2zM422 109v2h1v-2zM422 495v2h1v-2zM423 107v2h1v-2zM423 236v1h1v-1zM423 363v1h1v-1zM423 497v1h1v-1zM424 106v1h1v-1zM424 498v2h1v-2zM425 104v2h1v-2zM425 111v2h1v-2zM425 235v1h1v-1zM425 364v1h1v-1zM425 486v1h1v-1zM425 500v2h1v-2zM426 103v1h1v-1zM426 110v1h1v-1zM426 487v2h1v-2zM426 502v1h1v-1zM427 101v2h1v-2zM427 108v2h1v-2zM427 234v1h1v-1zM427 365v1h1v-1zM427 489v1h1v-1zM428 99v2h1v-2zM428 107v1h1v-1zM428 115v1h1v-1zM428 483v1h1v-1zM428 490v1h1v-1zM429 98v1h1v-1zM429 106v1h1v-1zM429 113v2h1v-2zM429 233v1h1v-1zM429 366v1h1v-1zM429 484v2h1v-2zM429 491v2h1v-2zM430 104v2h1v-2zM430 112v1h1v-1zM430 486v1h1v-1zM430 493v1h1v-1zM431 103v1h1v-1zM431 110v2h1v-2zM431 117v1h1v-1zM431 232v1h1v-1zM431 367v1h1v-1zM431 487v2h1v-2zM431 494v1h1v-1zM432 102v1h1v-1zM432 109v1h1v-1zM432 115v2h1v-2zM432 481v2h1v-2zM432 489v1h1v-1zM432 495v2h1v-2zM433 100v1h1v-1zM433 107v2h1v-2zM433 114v1h1v-1zM433 231v1h1v-1zM433 368v1h1v-1zM433 483v1h1v-1zM433 490v2h1v-2zM433 497v1h1v-1zM434 106v1h1v-1zM434 113v1h1v-1zM434 478v1h1v-1zM434 484v2h1v-2zM434 492v1h1v-1zM435 104v2h1v-2zM435 111v2h1v-2zM435 230v1h1v-1zM435 369v1h1v-1zM435 479v1h1v-1zM435 486v1h1v-1zM435 493v2h1v-2zM436 103v1h1v-1zM436 110v1h1v-1zM436 480v2h1v-2zM436 487v1h1v-1zM436 495v1h1v-1zM437 109v1h1v-1zM437 122v1h1v-1zM437 229v1h1v-1zM437 370v1h1v-1zM437 482v1h1v-1zM437 488v2h1v-2zM438 107v2h1v-2zM438 120v2h1v-2zM438 483v1h1v-1zM438 490v1h1v-1zM439 119v1h1v-1zM439 228v1h1v-1zM439 371v1h1v-1zM439 484v2h1v-2zM439 491v1h1v-1zM440 105v1h1v-1zM440 118v1h1v-1zM440 125v1h1v-1zM440 473v1h1v-1zM440 486v1h1v-1zM440 493v1h1v-1zM441 116v2h1v-2zM441 123v2h1v-2zM441 227v1h1v-1zM441 372v1h1v-1zM441 474v1h1v-1zM441 487v1h1v-1zM442 115v1h1v-1zM442 122v1h1v-1zM442 475v1h1v-1zM442 488v2h1v-2zM443 114v1h1v-1zM443 121v1h1v-1zM443 127v1h1v-1zM443 226v1h1v-1zM443 373v1h1v-1zM443 471v1h1v-1zM443 476v2h1v-2zM443 490v1h1v-1zM444 112v2h1v-2zM444 119v2h1v-2zM444 126v1h1v-1zM444 472v1h1v-1zM444 478v1h1v-1zM445 118v1h1v-1zM445 125v1h1v-1zM445 225v1h1v-1zM445 374v1h1v-1zM445 473v1h1v-1zM445 479v1h1v-1zM446 110v1h1v-1zM446 117v1h1v-1zM446 124v1h1v-1zM446 130v1h1v-1zM446 468v1h1v-1zM446 474v1h1v-1zM446 480v1h1v-1zM447 115v2h1v-2zM447 123v1h1v-1zM447 129v1h1v-1zM447 224v1h1v-1zM447 375v1h1v-1zM447 469v1h1v-1zM447 475v1h1v-1zM447 481v1h1v-1zM448 114v1h1v-1zM448 121v2h1v-2zM448 127v2h1v-2zM448 470v1h1v-1zM448 476v2h1v-2zM448 482v2h1v-2zM449 113v1h1v-1zM449 120v1h1v-1zM449 126v1h1v-1zM449 223v1h1v-1zM449 376v1h1v-1zM449 466v1h1v-1zM449 471v2h1v-2zM449 478v1h1v-1zM450 119v1h1v-1zM450 125v1h1v-1zM450 467v1h1v-1zM450 473v1h1v-1zM450 479v1h1v-1zM450 485v1h1v-1zM451 118v1h1v-1zM451 124v1h1v-1zM451 222v1h1v-1zM451 377v1h1v-1zM451 468v1h1v-1zM451 474v1h1v-1zM451 480v1h1v-1zM452 117v1h1v-1zM452 123v1h1v-1zM452 135v1h1v-1zM452 469v1h1v-1zM452 475v1h1v-1zM452 481v1h1v-1zM453 116v1h1v-1zM453 121v2h1v-2zM453 134v1h1v-1zM453 221v1h1v-1zM453 378v1h1v-1zM453 470v1h1v-1zM453 476v1h1v-1zM453 482v1h1v-1zM454 120v1h1v-1zM454 133v1h1v-1zM454 309v1h1v-1zM454 471v2h1v-2zM454 477v2h1v-2zM455 119v1h1v-1zM455 132v1h1v-1zM455 138v1h1v-1zM455 220v1h1v-1zM455 379v1h1v-1zM455 460v1h1v-1zM455 473v1h1v-1zM455 479v1h1v-1zM456 118v1h1v-1zM456 131v1h1v-1zM456 137v1h1v-1zM456 461v1h1v-1zM456 474v1h1v-1zM456 480v1h1v-1zM457 129v2h1v-2zM457 136v1h1v-1zM457 219v1h1v-1zM457 380v1h1v-1zM457 462v1h1v-1zM457 475v1h1v-1zM458 128v1h1v-1zM458 135v1h1v-1zM458 140v1h1v-1zM458 458v1h1v-1zM458 463v1h1v-1zM458 476v1h1v-1zM459 127v1h1v-1zM459 134v1h1v-1zM459 139v1h1v-1zM459 218v1h1v-1zM459 306v1h1v-1zM459 381v1h1v-1zM459 459v1h1v-1zM459 464v1h1v-1zM460 126v1h1v-1zM460 132v2h1v-2zM460 138v1h1v-1zM460 143v1h1v-1zM460 455v1h1v-1zM460 460v1h1v-1zM460 465v2h1v-2zM461 125v1h1v-1zM461 131v1h1v-1zM461 137v1h1v-1zM461 142v1h1v-1zM461 217v1h1v-1zM461 382v1h1v-1zM461 456v1h1v-1zM461 461v1h1v-1zM461 467v1h1v-1zM462 130v1h1v-1zM462 136v1h1v-1zM462 141v1h1v-1zM462 457v1h1v-1zM462 462v1h1v-1zM462 468v1h1v-1zM463 129v1h1v-1zM463 135v1h1v-1zM463 140v1h1v-1zM463 216v1h1v-1zM463 383v1h1v-1zM463 452v1h1v-1zM463 458v1h1v-1zM463 463v1h1v-1zM463 469v1h1v-1zM464 128v1h1v-1zM464 134v1h1v-1zM464 139v1h1v-1zM464 453v1h1v-1zM464 459v1h1v-1zM464 464v1h1v-1zM464 470v1h1v-1zM465 133v1h1v-1zM465 215v1h1v-1zM465 384v1h1v-1zM465 454v1h1v-1zM465 465v1h1v-1zM466 132v1h1v-1zM466 149v1h1v-1zM466 302v1h1v-1zM466 455v1h1v-1zM466 466v1h1v-1zM467 131v1h1v-1zM467 137v1h1v-1zM467 148v1h1v-1zM467 214v1h1v-1zM467 385v1h1v-1zM467 456v1h1v-1zM467 461v1h1v-1zM467 467v1h1v-1zM468 136v1h1v-1zM468 147v1h1v-1zM468 446v1h1v-1zM468 462v1h1v-1zM469 135v1h1v-1zM469 146v1h1v-1zM469 151v1h1v-1zM469 213v1h1v-1zM469 386v1h1v-1zM469 447v1h1v-1zM469 463v1h1v-1zM470 134v1h1v-1zM470 145v1h1v-1zM470 150v1h1v-1zM470 448v1h1v-1zM470 458v1h1v-1zM470 464v1h1v-1zM471 155v1h1v-1zM471 212v1h1v-1zM471 387v1h1v-1zM471 443v1h1v-1zM471 459v1h1v-1zM472 154v1h1v-1zM472 444v1h1v-1zM472 460v1h1v-1zM473 143v1h1v-1zM473 148v1h1v-1zM473 153v1h1v-1zM473 440v1h1v-1zM473 445v1h1v-1zM473 450v1h1v-1zM473 461v1h1v-1zM474 142v1h1v-1zM474 147v1h1v-1zM474 152v1h1v-1zM474 157v1h1v-1zM474 441v1h1v-1zM474 446v1h1v-1zM474 451v1h1v-1zM475 141v1h1v-1zM475 146v1h1v-1zM475 151v1h1v-1zM475 156v1h1v-1zM475 447v1h1v-1zM475 452v1h1v-1zM476 140v1h1v-1zM476 145v1h1v-1zM476 437v1h1v-1zM476 453v1h1v-1zM477 438v1h1v-1zM477 443v1h1v-1zM478 149v1h1v-1zM478 154v1h1v-1zM478 444v1h1v-1zM478 449v1h1v-1zM479 143v1h1v-1zM479 148v1h1v-1zM479 153v1h1v-1zM479 163v1h1v-1zM479 450v1h1v-1zM479 455v1h1v-1zM480 142v1h1v-1zM480 147v1h1v-1zM480 152v1h1v-1zM480 440v1h1v-1zM480 451v1h1v-1zM480 456v1h1v-1zM481 146v1h1v-1zM481 151v1h1v-1zM481 431v1h1v-1zM481 441v1h1v-1zM481 446v1h1v-1zM481 452v1h1v-1zM482 161v1h1v-1zM482 432v1h1v-1zM482 447v1h1v-1zM482 453v1h1v-1zM483 160v1h1v-1zM483 165v1h1v-1zM483 170v1h1v-1zM483 428v1h1v-1zM484 149v1h1v-1zM484 443v1h1v-1zM485 148v1h1v-1zM485 434v1h1v-1zM485 444v1h1v-1zM485 449v1h1v-1zM486 158v1h1v-1zM486 163v1h1v-1zM486 168v1h1v-1zM486 173v1h1v-1zM486 430v1h1v-1zM486 435v1h1v-1zM486 445v1h1v-1zM487 157v1h1v-1zM487 162v1h1v-1zM487 421v1h1v-1zM488 426v1h1v-1zM488 446v1h1v-1zM489 166v1h1v-1zM489 171v1h1v-1zM489 180v1h1v-1zM489 432v1h1v-1zM489 437v1h1v-1zM490 155v1h1v-1zM490 160v1h1v-1zM490 170v1h1v-1zM490 438v1h1v-1zM491 159v1h1v-1zM491 428v1h1v-1zM491 439v1h1v-1zM492 164v1h1v-1zM492 424v1h1v-1zM492 429v1h1v-1zM492 434v1h1v-1zM493 158v1h1v-1zM493 168v1h1v-1zM493 440v1h1v-1zM494 167v1h1v-1zM494 177v1h1v-1zM495 162v1h1v-1zM495 426v1h1v-1zM495 431v1h1v-1zM495 436v1h1v-1zM496 181v1h1v-1zM496 417v1h1v-1zM496 432v1h1v-1zM497 165v1h1v-1zM497 175v1h1v-1zM498 184v1h1v-1zM498 428v1h1v-1zM498 433v1h1v-1zM499 179v1h1v-1zM499 419v1h1v-1zM500 429v1h1v-1zM501 182v1h1v-1zM501 201v1h1v-1zM501 397v1h1v-1zM502 172v1h1v-1zM503 204v1h1v-1zM503 394v1h1v-1zM504 422v1h1v-1zM505 208v1h1v-1zM505 390v1h1v-1zM508 215v1h1v-1zM508 415v1h1v-1zM510 411v1h1v-1zM512 190v1h1v-1zM512 226v1h1v-1zM512 372v1h1v-1zM512 403v1h1v-1zM514 194v1h1v-1zM514 404v1h1v-1zM516 198v1h1v-1zM516 400v1h1v-1zM518 202v1h1v-1zM518 392v1h1v-1zM518 396v1h1v-1zM521 210v1h1v-1zM523 384v1h1v-1zM524 217v1h1v-1zM524 381v1h1v-1zM525 221v1h1v-1zM525 377v1h1v-1zM527 373v1h1v-1zM528 229v1h1v-1zM529 233v1h1v-1zM529 237v1h1v-1zM529 365v1h1v-1zM530 241v1h1v-1zM530 361v1h1v-1zM535 258v1h1v-1zM535 340v1h1v-1zM536 262v1h1v-1zM536 336v1h1v-1zM537 270v1h1v-1zM538 279v1h1v-1zM538 283v1h1v-1zM538 315v1h1v-1zM538 319v1h1v-1z"/>
<path fill="#ff0000" d="M749 108h3v1h-3zM485 112h3v1h-3zM495 112h3v1h-3zM232 125h6v1h-6zM236 126h2v1h-2zM224 131h5v1h-5zM229 132h2v1h-2zM224 141h5v1h-5zM750 146h2v1h-2zM744 147h2v1h-2zM748 147h2v1h-2zM750 149h2v1h-2zM289 168h2v1h-2zM286 171h2v1h-2zM283 174h2v1h-2zM280 177h2v1h-2zM276 180h3v1h-3zM745 186h2v1h-2zM750 186h2v1h-2zM748 189h2v1h-2zM748 190h2v1h-2zM46 215h5v1h-5zM228 227h2v1h-2zM747 236h3v1h-3zM745 237h2v1h-2zM750 237h2v1h-2zM745 243h2v1h-2zM750 243h2v1h-2zM747 244h3v1h-3zM179 275h2v1h-2zM749 276h4v1h-4zM751 277h2v1h-2zM745 279h3v1h-3zM748 283h2v1h-2zM745 284h3v1h-3zM744 293h8v1h-8zM475 313h5v1h-5zM473 314h2v1h-2zM480 314h2v1h-2zM473 328h2v1h-2zM480 328h2v1h-2zM475 329h5v1h-5zM410 430h2v1h-2zM409 442h15v1h-15zM362 547h5v1h-5zM365 548h2v1h-2zM40 227v1h1v-1zM41 228v1h1v-1zM42 219v5h1v-5zM42 229v1h1v-1zM43 218v1h1v-1zM43 224v1h1v-1zM43 228v1h1v-1zM44 217v1h1v-1zM44 225v3h1v-3zM45 216v1h1v-1zM51 216v1h1v-1zM52 217v1h1v-1zM52 225v3h1v-3zM53 218v1h1v-1zM53 224v1h1v-1zM53 228v1h1v-1zM54 219v5h1v-5zM54 229v1h1v-1zM55 230v1h1v-1zM56 231v1h1v-1zM149 299v1h1v-1zM156 298v1h1v-1zM157 297v1h1v-1zM158 296v1h1v-1zM159 295v1h1v-1zM159 306v1h1v-1zM160 294v1h1v-1zM161 293v1h1v-1zM162 292v1h1v-1zM163 291v1h1v-1zM164 290v1h1v-1zM165 289v1h1v-1zM165 300v1h1v-1zM166 288v1h1v-1zM167 287v1h1v-1zM167 297v1h1v-1zM168 286v1h1v-1zM169 285v1h1v-1zM170 284v1h1v-1zM170 294v1h1v-1zM171 283v1h1v-1zM172 282v1h1v-1zM173 281v1h1v-1zM173 291v1h1v-1zM174 280v1h1v-1zM175 279v1h1v-1zM176 278v1h1v-1zM176 288v1h1v-1zM177 277v1h1v-1zM178 276v1h1v-1zM179 285v1h1v-1zM181 274v1h1v-1zM182 273v1h1v-1zM182 282v1h1v-1zM183 272v1h1v-1zM184 271v1h1v-1zM184 279v1h1v-1zM185 270v1h1v-1zM186 269v1h1v-1zM187 268v1h1v-1zM187 276v1h1v-1zM188 267v1h1v-1zM189 266v1h1v-1zM190 265v1h1v-1zM190 273v1h1v-1zM191 264v1h1v-1zM192 263v1h1v-1zM193 262v1h1v-1zM193 270v1h1v-1zM194 261v1h1v-1zM195 260v1h1v-1zM196 259v1h1v-1zM196 267v1h1v-1zM197 258v1h1v-1zM198 257v1h1v-1zM199 256v1h1v-1zM199 264v1h1v-1zM200 255v1h1v-1zM201 254v1h1v-1zM201 261v1h1v-1zM202 253v1h1v-1zM203 252v1h1v-1zM204 251v1h1v-1zM204 258v1h1v-1zM205 250v1h1v-1zM206 249v1h1v-1zM207 248v1h1v-1zM207 255v1h1v-1zM208 247v1h1v-1zM209 246v1h1v-1zM210 245v1h1v-1zM210 252v1h1v-1zM211 244v1h1v-1zM212 243v1h1v-1zM213 242v1h1v-1zM213 249v1h1v-1zM214 241v1h1v-1zM215 240v1h1v-1zM216 239v1h1v-1zM216 246v1h1v-1zM217 238v1h1v-1zM218 237v1h1v-1zM219 236v1h1v-1zM219 243v1h1v-1zM220 235v1h1v-1zM221 134v5h1v-5zM221 234v1h1v-1zM221 240v1h1v-1zM222 133v1h1v-1zM222 139v1h1v-1zM222 233v1h1v-1zM223 132v1h1v-1zM223 140v1h1v-1zM223 232v1h1v-1zM224 231v1h1v-1zM224 237v1h1v-1zM225 230v1h1v-1zM226 229v1h1v-1zM227 228v1h1v-1zM227 234v1h1v-1zM229 140v1h1v-1zM230 133v1h1v-1zM230 139v1h1v-1zM230 226v1h1v-1zM230 231v1h1v-1zM231 131v1h1v-1zM231 134v5h1v-5zM231 225v1h1v-1zM232 130v1h1v-1zM232 224v1h1v-1zM233 129v1h1v-1zM233 223v1h1v-1zM233 228v1h1v-1zM234 128v1h1v-1zM234 222v1h1v-1zM235 127v1h1v-1zM235 221v1h1v-1zM236 220v1h1v-1zM236 225v1h1v-1zM237 127v4h1v-4zM237 219v1h1v-1zM238 218v1h1v-1zM238 222v1h1v-1zM239 217v1h1v-1zM240 216v1h1v-1zM241 161v1h1v-1zM241 215v1h1v-1zM241 219v1h1v-1zM242 214v1h1v-1zM243 213v1h1v-1zM244 212v1h1v-1zM244 216v1h1v-1zM245 211v1h1v-1zM246 210v1h1v-1zM247 209v1h1v-1zM247 213v1h1v-1zM248 208v1h1v-1zM249 207v1h1v-1zM250 206v1h1v-1zM250 210v1h1v-1zM251 205v1h1v-1zM252 204v1h1v-1zM253 203v1h1v-1zM253 207v1h1v-1zM254 202v1h1v-1zM255 201v1h1v-1zM256 200v1h1v-1zM256 204v1h1v-1zM257 199v1h1v-1zM258 198v1h1v-1zM258 201v1h1v-1zM259 197v1h1v-1zM260 196v1h1v-1zM261 195v1h1v-1zM261 198v1h1v-1zM262 194v1h1v-1zM263 193v1h1v-1zM264 192v1h1v-1zM264 195v1h1v-1zM265 191v1h1v-1zM266 190v1h1v-1zM267 189v1h1v-1zM267 192v1h1v-1zM268 188v1h1v-1zM270 186v1h1v-1zM270 189v1h1v-1zM271 185v1h1v-1zM272 184v1h1v-1zM273 183v1h1v-1zM273 186v1h1v-1zM274 182v1h1v-1zM275 181v1h1v-1zM275 183v1h1v-1zM278 179v1h1v-1zM279 178v1h1v-1zM281 176v1h1v-1zM282 175v1h1v-1zM284 173v1h1v-1zM285 172v1h1v-1zM287 170v1h1v-1zM288 169v1h1v-1zM290 167v1h1v-1zM291 166v1h1v-1zM292 165v1h1v-1zM293 164v1h1v-1zM294 163v1h1v-1zM295 162v1h1v-1zM296 161v1h1v-1zM297 160v1h1v-1zM298 159v1h1v-1zM299 158v1h1v-1zM300 157v1h1v-1zM301 156v1h1v-1zM350 563v1h1v-1zM351 562v1h1v-1zM352 553v1h1v-1zM352 561v1h1v-1zM353 554v1h1v-1zM353 560v1h1v-1zM354 555v1h1v-1zM354 559v1h1v-1zM355 556v1h1v-1zM355 558v1h1v-1zM356 557v1h1v-1zM357 556v1h1v-1zM357 558v1h1v-1zM358 555v1h1v-1zM358 559v1h1v-1zM359 554v1h1v-1zM359 560v1h1v-1zM360 553v1h1v-1zM360 561v1h1v-1zM361 552v1h1v-1zM362 551v1h1v-1zM363 550v1h1v-1zM364 549v1h1v-1zM366 549v3h1v-3zM391 400v1h1v-1zM391 403v1h1v-1zM391 406v1h1v-1zM391 409v1h1v-1zM392 379v1h1v-1zM392 382v1h1v-1zM392 385v1h1v-1zM392 388v1h1v-1zM392 391v1h1v-1zM392 394v1h1v-1zM392 397v1h1v-1zM393 358v1h1v-1zM393 361v1h1v-1zM393 364v1h1v-1zM393 367v1h1v-1zM393 370v1h1v-1zM393 373v1h1v-1zM393 376v1h1v-1zM394 337v1h1v-1zM394 340v1h1v-1zM394 343v1h1v-1zM394 346v1h1v-1zM394 349v1h1v-1zM394 352v1h1v-1zM394 355v1h1v-1zM395 316v1h1v-1zM395 319v1h1v-1zM395 322v1h1v-1zM395 325v1h1v-1zM395 328v1h1v-1zM395 331v1h1v-1zM395 334v1h1v-1zM395 413v1h1v-1zM396 295v1h1v-1zM396 298v1h1v-1zM396 301v1h1v-1zM396 304v1h1v-1zM396 307v1h1v-1zM396 310v1h1v-1zM396 313v1h1v-1zM397 274v1h1v-1zM397 277v1h1v-1zM397 280v1h1v-1zM397 283v1h1v-1zM397 286v1h1v-1zM397 289v1h1v-1zM397 292v1h1v-1zM398 253v1h1v-1zM398 256v1h1v-1zM398 259v1h1v-1zM398 262v1h1v-1zM398 265v1h1v-1zM398 268v1h1v-1zM398 271v1h1v-1zM399 232v1h1v-1zM399 235v1h1v-1zM399 238v1h1v-1zM399 241v1h1v-1zM399 244v1h1v-1zM399 247v1h1v-1zM399 250v1h1v-1zM400 211v1h1v-1zM400 214v1h1v-1zM400 217v1h1v-1zM400 220v1h1v-1zM400 223v1h1v-1zM400 226v1h1v-1zM400 229v1h1v-1zM401 202v1h1v-1zM401 205v1h1v-1zM401 208v1h1v-1zM402 211v1h1v-1zM402 214v1h1v-1zM402 217v1h1v-1zM402 220v1h1v-1zM402 223v1h1v-1zM402 226v1h1v-1zM402 229v1h1v-1zM402 232v1h1v-1zM403 235v1h1v-1zM403 238v1h1v-1zM403 241v1h1v-1zM403 244v1h1v-1zM403 247v1h1v-1zM403 250v1h1v-1zM403 253v1h1v-1zM403 256v1h1v-1zM404 259v1h1v-1zM404 262v1h1v-1zM404 265v1h1v-1zM404 268v1h1v-1zM404 271v1h1v-1zM404 274v1h1v-1zM404 277v1h1v-1zM404 280v1h1v-1zM405 283v1h1v-1zM405 286v1h1v-1zM405 289v1h1v-1zM405 292v1h1v-1zM405 295v1h1v-1zM405 298v1h1v-1zM405 301v1h1v-1zM405 304v1h1v-1zM406 307v1h1v-1zM406 310v1h1v-1zM406 313v1h1v-1zM406 316v1h1v-1zM406 319v1h1v-1zM406 322v1h1v-1zM406 325v1h1v-1zM406 328v1h1v-1zM407 331v1h1v-1zM407 334v1h1v-1zM407 337v1h1v-1zM407 340v1h1v-1zM407 343v1h1v-1zM407 346v1h1v-1zM407 349v1h1v-1zM407 352v1h1v-1zM408 355v1h1v-1zM408 358v1h1v-1zM408 361v1h1v-1zM408 364v1h1v-1zM408 367v1h1v-1zM408 370v1h1v-1zM408 373v1h1v-1zM408 376v1h1v-1zM409 379v1h1v-1zM409 382v1h1v-1zM409 385v1h1v-1zM409 388v1h1v-1zM409 441v1h1v-1zM410 439v2h1v-2zM411 437v2h1v-2zM412 431v1h1v-1zM412 435v2h1v-2zM413 432v3h1v-3zM419 430v12h1v-12zM419 443v2h1v-2zM420 429v1h1v-1zM421 428v1h1v-1zM446 324v1h1v-1zM469 319v5h1v-5zM470 317v2h1v-2zM470 324v2h1v-2zM471 316v1h1v-1zM471 326v1h1v-1zM472 315v1h1v-1zM472 327v1h1v-1zM477 321v1h1v-1zM482 315v1h1v-1zM482 327v1h1v-1zM483 114v3h1v-3zM483 316v1h1v-1zM483 326v1h1v-1zM484 113v1h1v-1zM484 117v1h1v-1zM484 317v2h1v-2zM484 324v2h1v-2zM485 118v1h1v-1zM485 319v5h1v-5zM488 113v1h1v-1zM489 114v3h1v-3zM490 117v4h1v-4zM491 121v8h1v-8zM492 117v4h1v-4zM493 114v3h1v-3zM494 113v1h1v-1zM497 118v1h1v-1zM498 113v1h1v-1zM498 117v1h1v-1zM499 114v3h1v-3zM744 106v1h1v-1zM744 187v2h1v-2zM744 239v3h1v-3zM744 280v4h1v-4zM745 107v7h1v-7zM745 146v1h1v-1zM745 148v3h1v-3zM745 189v1h1v-1zM745 238v1h1v-1zM745 242v1h1v-1zM745 287v1h1v-1zM745 291v2h1v-2zM746 106v1h1v-1zM746 151v3h1v-3zM746 288v3h1v-3zM747 107v7h1v-7zM747 148v3h1v-3zM747 187v2h1v-2zM748 106v1h1v-1zM748 146v1h1v-1zM748 191v4h1v-4zM748 240v1h1v-1zM748 280v1h1v-1zM749 107v1h1v-1zM749 109v4h1v-4zM749 114v1h1v-1zM749 148v1h1v-1zM749 187v2h1v-2zM749 279v1h1v-1zM749 281v2h1v-2zM749 287v6h1v-6zM749 294v1h1v-1zM750 113v1h1v-1zM750 278v1h1v-1zM750 286v1h1v-1zM751 107v1h1v-1zM751 109v4h1v-4zM751 114v1h1v-1zM751 150v1h1v-1zM751 154v1h1v-1zM751 189v1h1v-1zM751 238v1h1v-1zM751 242v1h1v-1zM752 147v2h1v-2zM752 151v3h1v-3zM752 187v2h1v-2zM752 239v3h1v-3zM752 278v2h1v-2z"/>
<path fill="#00ff00" d="M236 37h11v1h-11zM236 49h11v1h-11zM747 127h3v1h-3zM744 130h4v1h-4zM749 130h4v1h-4zM744 132h9v1h-9zM744 170h9v1h-9zM750 172h2v1h-2zM745 173h2v1h-2zM747 206h3v1h-3zM745 207h3v1h-3zM750 207h2v1h-2zM745 209h2v1h-2zM750 210h2v1h-2zM745 212h2v1h-2zM747 213h5v1h-5zM468 250h9v1h-9zM471 256h3v1h-3zM747 257h3v1h-3zM471 260h3v1h-3zM747 261h3v1h-3zM746 263h5v1h-5zM747 266h3v1h-3zM747 270h3v1h-3zM746 272h5v1h-5zM156 300h2v1h-2zM158 301h2v1h-2zM161 303h2v1h-2zM163 304h2v1h-2zM166 306h2v1h-2zM168 307h2v1h-2zM171 309h2v1h-2zM746 309h5v1h-5zM173 310h2v1h-2zM175 311h2v1h-2zM162 312h2v1h-2zM748 312h2v1h-2zM178 313h2v1h-2zM180 314h2v1h-2zM747 314h3v1h-3zM183 316h2v1h-2zM185 317h2v1h-2zM188 319h2v1h-2zM190 320h2v1h-2zM193 322h2v1h-2zM195 323h2v1h-2zM198 325h2v1h-2zM200 326h2v1h-2zM203 328h2v1h-2zM205 329h2v1h-2zM207 331h3v1h-3zM210 332h2v1h-2zM212 333h2v1h-2zM214 334h2v1h-2zM215 335h2v1h-2zM217 336h3v1h-3zM220 338h2v1h-2zM222 339h2v1h-2zM225 341h2v1h-2zM227 342h2v1h-2zM230 344h2v1h-2zM232 345h2v1h-2zM235 347h2v1h-2zM237 348h2v1h-2zM240 350h2v1h-2zM242 351h2v1h-2zM244 352h2v1h-2zM247 354h2v1h-2zM466 354h5v1h-5zM249 355h2v1h-2zM252 357h2v1h-2zM254 358h2v1h-2zM257 360h2v1h-2zM259 361h2v1h-2zM466 362h5v1h-5zM262 363h2v1h-2zM264 364h2v1h-2zM267 366h2v1h-2zM464 366h9v1h-9zM269 367h2v1h-2zM545 368h2v1h-2zM551 368h2v1h-2zM272 369h2v1h-2zM274 370h2v1h-2zM277 372h2v1h-2zM548 372h2v1h-2zM554 372h2v1h-2zM279 373h2v1h-2zM281 374h2v1h-2zM284 376h2v1h-2zM286 377h2v1h-2zM545 378h2v1h-2zM551 378h2v1h-2zM289 379h2v1h-2zM291 380h2v1h-2zM294 382h2v1h-2zM548 382h2v1h-2zM554 382h2v1h-2zM296 383h2v1h-2zM299 385h2v1h-2zM301 386h2v1h-2zM304 388h2v1h-2zM306 389h2v1h-2zM309 391h2v1h-2zM311 392h2v1h-2zM314 394h2v1h-2zM316 395h2v1h-2zM318 396h2v1h-2zM321 398h2v1h-2zM323 399h2v1h-2zM326 401h2v1h-2zM328 402h2v1h-2zM331 404h2v1h-2zM333 405h2v1h-2zM435 406h5v1h-5zM336 407h2v1h-2zM338 408h2v1h-2zM341 410h2v1h-2zM342 411h3v1h-3zM345 413h3v1h-3zM348 414h2v1h-2zM435 414h5v1h-5zM350 415h2v1h-2zM351 416h2v1h-2zM353 417h2v1h-2zM354 418h3v1h-3zM433 418h9v1h-9zM357 420h3v1h-3zM360 421h2v1h-2zM363 423h2v1h-2zM365 424h2v1h-2zM105 474h5v1h-5zM99 480h7v1h-7zM109 480h7v1h-7zM99 484h17v1h-17zM103 476v3h1v-3zM104 475v1h1v-1zM104 479v1h1v-1zM110 475v1h1v-1zM110 479v1h1v-1zM111 476v3h1v-3zM155 299v1h1v-1zM156 309v1h1v-1zM159 310v2h1v-2zM160 302v1h1v-1zM165 305v1h1v-1zM165 314v1h1v-1zM167 314v1h1v-1zM168 316v1h1v-1zM170 308v1h1v-1zM171 315v1h1v-1zM171 317v1h1v-1zM174 319v1h1v-1zM175 317v1h1v-1zM177 312v1h1v-1zM177 321v1h1v-1zM179 319v1h1v-1zM180 322v1h1v-1zM182 315v1h1v-1zM183 320v1h1v-1zM183 324v1h1v-1zM186 325v1h1v-1zM187 318v1h1v-1zM187 322v1h1v-1zM189 327v1h1v-1zM191 324v1h1v-1zM192 321v1h1v-1zM192 329v1h1v-1zM195 326v1h1v-1zM195 330v1h1v-1zM197 324v1h1v-1zM198 332v1h1v-1zM199 327v1h1v-1zM201 334v1h1v-1zM202 327v1h1v-1zM203 329v1h1v-1zM204 335v1h1v-1zM207 330v1h1v-1zM207 337v1h1v-1zM210 339v1h1v-1zM213 340v1h1v-1zM216 342v1h1v-1zM219 337v1h1v-1zM219 344v1h1v-1zM222 345v1h1v-1zM223 338v1h1v-1zM224 340v1h1v-1zM225 347v1h1v-1zM227 339v1h1v-1zM228 349v1h1v-1zM229 343v1h1v-1zM231 341v1h1v-1zM231 350v1h1v-1zM234 35v1h1v-1zM234 51v1h1v-1zM234 346v1h1v-1zM234 352v1h1v-1zM235 36v1h1v-1zM235 50v1h1v-1zM235 343v1h1v-1zM237 354v1h1v-1zM238 38v11h1v-11zM239 344v1h1v-1zM239 349v1h1v-1zM240 355v1h1v-1zM243 167v1h1v-1zM243 346v1h1v-1zM243 357v1h1v-1zM244 38v11h1v-11zM245 169v1h1v-1zM246 353v1h1v-1zM246 358v1h1v-1zM247 36v1h1v-1zM247 50v1h1v-1zM247 170v1h1v-1zM247 348v1h1v-1zM248 35v1h1v-1zM248 51v1h1v-1zM249 172v1h1v-1zM249 360v1h1v-1zM251 173v1h1v-1zM251 349v1h1v-1zM251 356v1h1v-1zM252 362v1h1v-1zM253 175v1h1v-1zM255 176v2h1v-2zM255 351v1h1v-1zM255 363v1h1v-1zM256 359v1h1v-1zM257 178v1h1v-1zM258 365v1h1v-1zM259 180v1h1v-1zM259 353v1h1v-1zM261 181v1h1v-1zM261 362v1h1v-1zM261 367v1h1v-1zM263 183v1h1v-1zM263 355v1h1v-1zM264 368v1h1v-1zM265 184v2h1v-2zM266 365v1h1v-1zM267 186v1h1v-1zM267 356v1h1v-1zM267 370v1h1v-1zM269 187v2h1v-2zM270 372v1h1v-1zM271 189v1h1v-1zM271 358v1h1v-1zM271 368v1h1v-1zM273 191v1h1v-1zM273 373v1h1v-1zM275 192v2h1v-2zM275 360v1h1v-1zM276 371v1h1v-1zM276 375v1h1v-1zM277 194v1h1v-1zM279 195v2h1v-2zM279 361v1h1v-1zM279 377v1h1v-1zM281 197v1h1v-1zM282 378v1h1v-1zM283 199v1h1v-1zM283 363v1h1v-1zM283 375v1h1v-1zM285 200v1h1v-1zM285 380v1h1v-1zM287 202v1h1v-1zM287 365v1h1v-1zM288 378v1h1v-1zM288 382v1h1v-1zM289 203v2h1v-2zM291 205v1h1v-1zM291 366v1h1v-1zM291 383v1h1v-1zM293 206v2h1v-2zM293 381v1h1v-1zM294 385v1h1v-1zM295 208v1h1v-1zM295 368v1h1v-1zM297 210v1h1v-1zM297 387v1h1v-1zM298 384v1h1v-1zM299 211v2h1v-2zM299 370v1h1v-1zM300 388v1h1v-1zM301 213v1h1v-1zM303 214v2h1v-2zM303 372v1h1v-1zM303 387v1h1v-1zM303 390v1h1v-1zM305 216v1h1v-1zM306 391v1h1v-1zM307 217v2h1v-2zM307 373v1h1v-1zM308 390v1h1v-1zM309 219v2h1v-2zM309 393v1h1v-1zM311 221v1h1v-1zM311 375v1h1v-1zM312 395v1h1v-1zM313 222v2h1v-2zM313 393v1h1v-1zM315 224v1h1v-1zM315 377v1h1v-1zM315 396v1h1v-1zM317 225v2h1v-2zM318 398v1h1v-1zM319 227v2h1v-2zM319 378v1h1v-1zM320 397v1h1v-1zM321 228v2h1v-2zM321 400v1h1v-1zM323 230v2h1v-2zM323 380v1h1v-1zM324 401v1h1v-1zM325 232v1h1v-1zM325 400v1h1v-1zM327 233v2h1v-2zM327 382v1h1v-1zM327 403v1h1v-1zM329 235v2h1v-2zM330 403v1h1v-1zM330 405v1h1v-1zM331 236v2h1v-2zM331 383v1h1v-1zM333 238v2h1v-2zM333 406v1h1v-1zM335 239v2h1v-2zM335 385v1h1v-1zM335 406v1h1v-1zM336 408v1h1v-1zM337 241v2h1v-2zM339 243v2h1v-2zM339 387v1h1v-1zM339 410v1h1v-1zM340 409v1h1v-1zM341 244v2h1v-2zM343 246v2h1v-2zM343 389v1h1v-1zM345 247v2h1v-2zM345 412v1h1v-1zM347 249v2h1v-2zM347 390v1h1v-1zM348 415v1h1v-1zM349 251v1h1v-1zM351 252v2h1v-2zM351 392v1h1v-1zM353 254v2h1v-2zM355 255v2h1v-2zM355 394v1h1v-1zM357 257v2h1v-2zM357 419v1h1v-1zM359 258v2h1v-2zM359 395v1h1v-1zM361 260v2h1v-2zM362 422v1h1v-1zM363 262v2h1v-2zM363 397v1h1v-1zM365 263v2h1v-2zM367 265v2h1v-2zM367 399v1h1v-1zM369 266v2h1v-2zM371 268v2h1v-2zM371 400v1h1v-1zM373 269v1h1v-1zM373 271v1h1v-1zM375 271v2h1v-2zM375 402v1h1v-1zM377 273v2h1v-2zM379 274v2h1v-2zM379 404v1h1v-1zM381 276v2h1v-2zM383 277v1h1v-1zM383 279v1h1v-1zM383 406v1h1v-1zM385 279v2h1v-2zM387 280v1h1v-1zM387 282v1h1v-1zM387 407v1h1v-1zM389 282v2h1v-2zM391 284v2h1v-2zM393 285v1h1v-1zM393 287v1h1v-1zM395 287v2h1v-2zM397 288v1h1v-1zM397 290v1h1v-1zM399 290v2h1v-2zM401 291v1h1v-1zM401 293v1h1v-1zM403 293v1h1v-1zM403 295v1h1v-1zM405 296v1h1v-1zM407 296v1h1v-1zM407 298v1h1v-1zM409 298v2h1v-2zM411 299v1h1v-1zM411 301v1h1v-1zM413 301v2h1v-2zM414 394v1h1v-1zM415 303v2h1v-2zM417 304v1h1v-1zM417 306v1h1v-1zM419 306v2h1v-2zM421 307v1h1v-1zM421 309v1h1v-1zM423 309v2h1v-2zM425 310v1h1v-1zM425 312v1h1v-1zM427 312v1h1v-1zM427 314v1h1v-1zM429 314v2h1v-2zM431 315v1h1v-1zM431 317v1h1v-1zM433 317v2h1v-2zM433 408v5h1v-5zM434 407v1h1v-1zM434 413v1h1v-1zM435 318v1h1v-1zM435 320v1h1v-1zM437 320v1h1v-1zM437 322v1h1v-1zM437 415v3h1v-3zM437 419v4h1v-4zM439 321v1h1v-1zM439 323v1h1v-1zM439 350v1h1v-1zM440 407v1h1v-1zM440 413v1h1v-1zM441 408v5h1v-5zM443 260v1h1v-1zM464 352v1h1v-1zM464 356v5h1v-5zM465 353v1h1v-1zM465 355v1h1v-1zM465 361v1h1v-1zM466 244v1h1v-1zM466 254v1h1v-1zM467 245v1h1v-1zM467 253v1h1v-1zM468 246v4h1v-4zM468 251v2h1v-2zM468 363v3h1v-3zM468 367v2h1v-2zM470 257v3h1v-3zM471 353v1h1v-1zM471 355v1h1v-1zM471 361v1h1v-1zM472 248v2h1v-2zM472 251v5h1v-5zM472 352v1h1v-1zM472 356v5h1v-5zM474 257v3h1v-3zM476 246v4h1v-4zM476 251v2h1v-2zM477 245v1h1v-1zM477 253v1h1v-1zM478 244v1h1v-1zM478 254v1h1v-1zM542 373v1h1v-1zM542 383v1h1v-1zM543 371v2h1v-2zM543 381v2h1v-2zM544 370v1h1v-1zM544 380v1h1v-1zM545 369v1h1v-1zM545 379v1h1v-1zM546 367v1h1v-1zM546 377v1h1v-1zM547 369v3h1v-3zM547 379v3h1v-3zM548 373v1h1v-1zM548 383v1h1v-1zM549 371v1h1v-1zM549 381v1h1v-1zM550 370v1h1v-1zM550 380v1h1v-1zM551 369v1h1v-1zM551 379v1h1v-1zM552 367v1h1v-1zM552 377v1h1v-1zM553 369v3h1v-3zM553 379v3h1v-3zM554 373v1h1v-1zM554 383v1h1v-1zM555 371v1h1v-1zM555 381v1h1v-1zM556 370v1h1v-1zM556 380v1h1v-1zM557 368v2h1v-2zM557 378v2h1v-2zM558 367v1h1v-1zM558 377v1h1v-1zM744 166v1h1v-1zM744 174v1h1v-1zM744 208v1h1v-1zM744 210v2h1v-2zM745 167v1h1v-1zM745 306v1h1v-1zM745 311v1h1v-1zM746 128v2h1v-2zM746 168v2h1v-2zM746 171v2h1v-2zM746 256v1h1v-1zM746 258v3h1v-3zM746 267v3h1v-3zM746 307v2h1v-2zM746 310v1h1v-1zM747 210v2h1v-2zM747 313v1h1v-1zM748 262v1h1v-1zM748 264v1h1v-1zM748 271v1h1v-1zM748 273v2h1v-2zM748 308v1h1v-1zM748 310v2h1v-2zM749 208v2h1v-2zM749 313v1h1v-1zM750 128v2h1v-2zM750 169v1h1v-1zM750 171v1h1v-1zM750 256v1h1v-1zM750 258v3h1v-3zM750 267v3h1v-3zM750 307v2h1v-2zM750 310v1h1v-1zM751 167v2h1v-2zM751 173v1h1v-1zM751 212v1h1v-1zM751 306v1h1v-1zM751 311v1h1v-1zM752 166v1h1v-1zM752 174v1h1v-1zM752 208v2h1v-2zM752 211v1h1v-1z"/>
<path fill="#ffff00" d="M371 43h2v1h-2zM378 43h2v1h-2zM373 44h5v1h-5zM371 45h2v1h-2zM378 45h2v1h-2zM371 55h2v1h-2zM378 55h2v1h-2zM373 56h5v1h-5zM749 118h3v1h-3zM745 157h2v1h-2zM748 157h2v1h-2zM747 158h2v1h-2zM750 158h2v1h-2zM745 162h2v1h-2zM748 162h2v1h-2zM747 163h2v1h-2zM750 163h2v1h-2zM745 197h6v1h-6zM745 203h6v1h-6zM745 297h5v1h-5zM749 299h2v1h-2zM747 300h2v1h-2zM114 310h9v1h-9zM122 314h3v1h-3zM118 316h3v1h-3zM48 353h2v1h-2zM45 355h2v1h-2zM482 483h3v1h-3zM471 484h2v1h-2zM482 489h3v1h-3zM35 350v1h1v-1zM36 351v1h1v-1zM37 352v13h1v-13zM38 351v1h1v-1zM39 350v1h1v-1zM40 351v1h1v-1zM41 352v13h1v-13zM42 351v1h1v-1zM43 350v1h1v-1zM44 351v1h1v-1zM45 352v3h1v-3zM45 356v7h1v-7zM45 366v1h1v-1zM46 363v1h1v-1zM46 365v1h1v-1zM47 354v1h1v-1zM47 364v1h1v-1zM48 363v1h1v-1zM48 365v1h1v-1zM49 352v1h1v-1zM49 354v9h1v-9zM49 366v1h1v-1zM118 308v2h1v-2zM118 311v5h1v-5zM118 317v6h1v-6zM121 315v1h1v-1zM124 320v3h1v-3zM125 315v1h1v-1zM125 319v1h1v-1zM125 323v1h1v-1zM126 316v3h1v-3zM126 324v1h1v-1zM150 309v1h1v-1zM155 300v1h1v-1zM155 303v1h1v-1zM156 306v1h1v-1zM301 150v1h1v-1zM369 40v1h1v-1zM369 48v5h1v-5zM370 41v2h1v-2zM370 46v2h1v-2zM370 53v2h1v-2zM380 41v2h1v-2zM380 46v2h1v-2zM380 53v2h1v-2zM381 40v1h1v-1zM381 48v5h1v-5zM440 324v1h1v-1zM470 485v1h1v-1zM472 483v1h1v-1zM472 485v7h1v-7zM473 492v1h1v-1zM474 493v5h1v-5zM475 492v1h1v-1zM476 487v5h1v-5zM477 486v1h1v-1zM478 483v3h1v-3zM479 486v1h1v-1zM480 485v1h1v-1zM480 487v1h1v-1zM481 484v1h1v-1zM481 488v1h1v-1zM483 490v1h1v-1zM484 491v1h1v-1zM484 499v1h1v-1zM485 484v1h1v-1zM485 488v1h1v-1zM485 492v1h1v-1zM485 498v1h1v-1zM486 485v3h1v-3zM486 493v5h1v-5zM744 116v1h1v-1zM744 159v1h1v-1zM744 164v1h1v-1zM744 196v1h1v-1zM744 204v1h1v-1zM745 117v7h1v-7zM745 158v1h1v-1zM745 163v1h1v-1zM746 116v1h1v-1zM746 156v1h1v-1zM746 161v1h1v-1zM746 198v5h1v-5zM747 117v7h1v-7zM747 159v1h1v-1zM747 164v1h1v-1zM747 296v1h1v-1zM747 298v2h1v-2zM747 301v3h1v-3zM748 116v1h1v-1zM749 117v1h1v-1zM749 119v4h1v-4zM749 124v1h1v-1zM749 156v1h1v-1zM749 161v1h1v-1zM749 198v5h1v-5zM750 123v1h1v-1zM750 159v1h1v-1zM750 164v1h1v-1zM750 302v2h1v-2zM751 117v1h1v-1zM751 119v4h1v-4zM751 124v1h1v-1zM751 157v1h1v-1zM751 162v1h1v-1zM751 196v1h1v-1zM751 204v1h1v-1zM751 300v2h1v-2zM751 304v1h1v-1zM752 156v1h1v-1zM752 161v1h1v-1z"/>
<path fill="#0000ff" d="M118 100h5v1h-5zM115 101h3v1h-3zM124 102h3v1h-3zM114 106h3v1h-3zM124 108h3v1h-3zM114 112h3v1h-3zM123 113h3v1h-3zM118 114h5v1h-5zM750 136h3v1h-3zM751 137h2v1h-2zM423 165h5v1h-5zM428 166h2v1h-2zM428 180h2v1h-2zM744 180h9v1h-9zM423 181h5v1h-5zM750 182h2v1h-2zM745 183h2v1h-2zM747 216h3v1h-3zM547 240h17v1h-17zM746 246h3v1h-3zM750 248h2v1h-2zM746 252h2v1h-2zM746 254h4v1h-4zM745 317h5v1h-5zM751 317h2v1h-2zM746 320h5v1h-5zM746 322h5v1h-5zM748 326h2v1h-2zM747 328h3v1h-3zM746 330h5v1h-5zM746 332h5v1h-5zM467 333h3v1h-3zM472 333h5v1h-5zM479 333h3v1h-3zM470 338h2v1h-2zM477 338h2v1h-2zM472 339h5v1h-5zM470 343h9v1h-9zM383 449h3v1h-3zM383 453h3v1h-3zM380 456h2v1h-2zM387 456h2v1h-2zM382 457h5v1h-5zM380 461h9v1h-9zM229 554h3v1h-3zM227 558h2v1h-2zM112 104v1h1v-1zM112 108v3h1v-3zM113 103v1h1v-1zM113 107v1h1v-1zM113 111v1h1v-1zM114 102v1h1v-1zM117 107v1h1v-1zM117 111v1h1v-1zM117 113v1h1v-1zM118 108v3h1v-3zM122 104v3h1v-3zM123 101v1h1v-1zM123 103v1h1v-1zM123 107v1h1v-1zM126 112v1h1v-1zM127 103v1h1v-1zM127 107v1h1v-1zM127 111v1h1v-1zM128 104v3h1v-3zM128 110v1h1v-1zM215 542v1h1v-1zM216 543v1h1v-1zM217 544v13h1v-13zM218 543v1h1v-1zM219 542v1h1v-1zM220 543v1h1v-1zM221 544v13h1v-13zM222 543v1h1v-1zM223 542v1h1v-1zM224 543v1h1v-1zM225 544v13h1v-13zM226 557v1h1v-1zM229 557v1h1v-1zM230 553v1h1v-1zM230 555v2h1v-2zM244 170v1h1v-1zM246 173v1h1v-1zM247 176v1h1v-1zM249 179v1h1v-1zM250 182v1h1v-1zM252 185v1h1v-1zM253 188v1h1v-1zM255 191v1h1v-1zM256 194v1h1v-1zM257 197v1h1v-1zM259 200v1h1v-1zM260 203v1h1v-1zM262 206v1h1v-1zM263 209v1h1v-1zM265 212v1h1v-1zM266 215v1h1v-1zM268 218v1h1v-1zM269 221v1h1v-1zM270 224v1h1v-1zM272 227v1h1v-1zM273 230v1h1v-1zM275 233v1h1v-1zM276 236v1h1v-1zM278 239v1h1v-1zM279 242v1h1v-1zM280 245v1h1v-1zM282 248v1h1v-1zM283 251v1h1v-1zM285 254v1h1v-1zM286 257v1h1v-1zM288 260v1h1v-1zM289 263v1h1v-1zM291 266v1h1v-1zM292 269v1h1v-1zM293 272v1h1v-1zM295 275v1h1v-1zM296 278v1h1v-1zM298 281v1h1v-1zM299 284v1h1v-1zM301 287v1h1v-1zM302 290v1h1v-1zM304 293v1h1v-1zM305 296v1h1v-1zM306 299v1h1v-1zM308 302v1h1v-1zM309 305v1h1v-1zM311 308v1h1v-1zM312 311v1h1v-1zM314 314v1h1v-1zM315 317v1h1v-1zM317 320v1h1v-1zM318 323v1h1v-1zM319 326v1h1v-1zM321 329v1h1v-1zM322 332v1h1v-1zM324 335v1h1v-1zM325 338v1h1v-1zM327 341v1h1v-1zM328 344v1h1v-1zM330 347v1h1v-1zM331 350v1h1v-1zM332 353v1h1v-1zM334 356v1h1v-1zM335 359v1h1v-1zM337 362v1h1v-1zM338 365v1h1v-1zM340 368v1h1v-1zM341 371v1h1v-1zM342 374v1h1v-1zM344 377v1h1v-1zM345 380v1h1v-1zM347 383v1h1v-1zM348 386v1h1v-1zM350 389v1h1v-1zM353 395v1h1v-1zM354 398v1h1v-1zM355 401v1h1v-1zM357 404v1h1v-1zM358 407v1h1v-1zM360 410v1h1v-1zM361 413v1h1v-1zM363 416v1h1v-1zM364 419v1h1v-1zM366 422v1h1v-1zM367 425v1h1v-1zM370 430v1h1v-1zM378 449v5h1v-5zM379 454v2h1v-2zM382 450v3h1v-3zM384 458v3h1v-3zM384 462v4h1v-4zM386 450v3h1v-3zM389 454v2h1v-2zM390 449v5h1v-5zM406 194v1h1v-1zM421 167v1h1v-1zM421 179v1h1v-1zM422 166v1h1v-1zM422 168v1h1v-1zM422 178v1h1v-1zM422 180v1h1v-1zM423 169v1h1v-1zM423 177v1h1v-1zM424 170v2h1v-2zM424 175v2h1v-2zM425 172v3h1v-3zM430 167v1h1v-1zM430 179v1h1v-1zM431 168v1h1v-1zM431 178v1h1v-1zM432 169v2h1v-2zM432 176v2h1v-2zM433 171v5h1v-5zM446 325v1h1v-1zM468 331v2h1v-2zM468 334v2h1v-2zM469 336v2h1v-2zM474 331v2h1v-2zM474 334v5h1v-5zM474 340v3h1v-3zM474 344v4h1v-4zM479 336v2h1v-2zM480 331v2h1v-2zM480 334v2h1v-2zM547 232v1h1v-1zM547 248v1h1v-1zM548 233v1h1v-1zM548 247v1h1v-1zM549 234v1h1v-1zM549 246v1h1v-1zM550 235v2h1v-2zM550 244v2h1v-2zM551 237v3h1v-3zM551 241v3h1v-3zM559 237v3h1v-3zM559 241v3h1v-3zM560 235v2h1v-2zM560 244v2h1v-2zM561 234v1h1v-1zM561 246v1h1v-1zM562 233v1h1v-1zM562 247v1h1v-1zM563 232v1h1v-1zM563 248v1h1v-1zM744 144v1h1v-1zM744 176v1h1v-1zM744 184v1h1v-1zM744 222v1h1v-1zM745 139v1h1v-1zM745 143v1h1v-1zM745 177v1h1v-1zM745 218v3h1v-3zM745 223v1h1v-1zM745 247v1h1v-1zM745 253v1h1v-1zM745 316v1h1v-1zM745 318v1h1v-1zM745 326v3h1v-3zM746 140v1h1v-1zM746 142v1h1v-1zM746 178v2h1v-2zM746 181v2h1v-2zM746 217v1h1v-1zM746 221v2h1v-2zM746 248v1h1v-1zM746 319v1h1v-1zM746 329v1h1v-1zM747 141v1h1v-1zM747 249v3h1v-3zM747 327v1h1v-1zM748 140v1h1v-1zM748 142v1h1v-1zM748 316v1h1v-1zM748 318v2h1v-2zM748 321v1h1v-1zM748 323v2h1v-2zM748 331v1h1v-1zM748 333v2h1v-2zM749 139v1h1v-1zM749 143v1h1v-1zM749 247v1h1v-1zM749 327v1h1v-1zM750 138v1h1v-1zM750 179v1h1v-1zM750 181v1h1v-1zM750 217v1h1v-1zM750 221v2h1v-2zM750 253v1h1v-1zM751 177v2h1v-2zM751 183v1h1v-1zM751 218v3h1v-3zM751 223v1h1v-1zM751 249v4h1v-4zM751 316v1h1v-1zM751 318v2h1v-2zM751 326v4h1v-4zM752 138v1h1v-1zM752 176v1h1v-1zM752 184v1h1v-1zM752 224v1h1v-1z"/>
<path fill="#00ffff" d="M402 205h2v1h-2zM403 208h2v1h-2zM404 211h2v1h-2zM428 286h2v1h-2zM424 301h2v1h-2zM392 406v1h1v-1zM393 403v1h1v-1zM394 400v1h1v-1zM395 397v1h1v-1zM396 394v1h1v-1zM397 391v1h1v-1zM398 388v1h1v-1zM399 382v1h1v-1zM399 385v1h1v-1zM400 379v1h1v-1zM401 199v2h1v-2zM401 376v1h1v-1zM402 202v2h1v-2zM402 373v1h1v-1zM403 206v1h1v-1zM403 370v1h1v-1zM404 209v1h1v-1zM404 214v1h1v-1zM404 367v1h1v-1zM405 212v1h1v-1zM405 217v1h1v-1zM405 364v1h1v-1zM406 214v2h1v-2zM406 220v1h1v-1zM406 223v1h1v-1zM406 361v1h1v-1zM407 217v2h1v-2zM407 226v1h1v-1zM407 358v1h1v-1zM408 220v2h1v-2zM408 223v1h1v-1zM408 229v1h1v-1zM408 232v1h1v-1zM409 224v1h1v-1zM409 226v1h1v-1zM409 235v1h1v-1zM409 352v1h1v-1zM409 390v1h1v-1zM410 227v1h1v-1zM410 229v1h1v-1zM410 238v1h1v-1zM410 241v1h1v-1zM410 349v1h1v-1zM410 384v1h1v-1zM410 387v1h1v-1zM411 230v1h1v-1zM411 232v1h1v-1zM411 244v1h1v-1zM411 346v1h1v-1zM411 381v1h1v-1zM412 233v1h1v-1zM412 235v1h1v-1zM412 247v1h1v-1zM412 250v1h1v-1zM412 343v1h1v-1zM412 375v1h1v-1zM412 378v1h1v-1zM413 236v1h1v-1zM413 238v1h1v-1zM413 253v1h1v-1zM413 340v1h1v-1zM413 372v1h1v-1zM414 239v1h1v-1zM414 241v1h1v-1zM414 256v1h1v-1zM414 259v1h1v-1zM414 334v1h1v-1zM414 337v1h1v-1zM414 366v1h1v-1zM414 369v1h1v-1zM415 242v1h1v-1zM415 244v1h1v-1zM415 262v1h1v-1zM415 331v1h1v-1zM415 363v1h1v-1zM416 245v1h1v-1zM416 247v1h1v-1zM416 265v1h1v-1zM416 268v1h1v-1zM416 328v1h1v-1zM416 357v1h1v-1zM416 360v1h1v-1zM417 248v1h1v-1zM417 250v1h1v-1zM417 271v1h1v-1zM417 325v1h1v-1zM417 354v1h1v-1zM418 251v1h1v-1zM418 253v1h1v-1zM418 274v1h1v-1zM418 277v1h1v-1zM418 322v1h1v-1zM418 348v1h1v-1zM418 351v1h1v-1zM419 254v1h1v-1zM419 256v1h1v-1zM419 280v1h1v-1zM419 319v1h1v-1zM419 342v1h1v-1zM419 345v1h1v-1zM420 257v1h1v-1zM420 259v1h1v-1zM420 283v1h1v-1zM420 286v1h1v-1zM420 316v1h1v-1zM420 339v1h1v-1zM421 260v1h1v-1zM421 262v1h1v-1zM421 289v1h1v-1zM421 313v1h1v-1zM421 333v1h1v-1zM421 336v1h1v-1zM422 263v1h1v-1zM422 265v1h1v-1zM422 292v1h1v-1zM422 295v1h1v-1zM422 310v1h1v-1zM422 330v1h1v-1zM423 266v1h1v-1zM423 268v1h1v-1zM423 271v1h1v-1zM423 298v1h1v-1zM423 307v1h1v-1zM423 324v1h1v-1zM423 327v1h1v-1zM424 269v1h1v-1zM424 274v1h1v-1zM424 304v1h1v-1zM424 321v1h1v-1zM425 272v1h1v-1zM425 277v1h1v-1zM425 307v1h1v-1zM425 315v1h1v-1zM425 318v1h1v-1zM426 275v1h1v-1zM426 278v1h1v-1zM426 280v1h1v-1zM426 298v1h1v-1zM426 310v1h1v-1zM426 312v2h1v-2zM427 281v1h1v-1zM427 283v1h1v-1zM427 295v1h1v-1zM427 306v1h1v-1zM427 309v1h1v-1zM427 316v1h1v-1zM428 284v1h1v-1zM428 292v1h1v-1zM428 303v1h1v-1zM428 319v1h1v-1zM428 322v1h1v-1zM429 287v1h1v-1zM429 289v1h1v-1zM429 297v1h1v-1zM429 300v1h1v-1zM429 325v1h1v-1zM430 283v1h1v-1zM430 290v1h1v-1zM430 292v1h1v-1zM430 294v1h1v-1zM430 328v1h1v-1zM430 331v1h1v-1zM431 280v1h1v-1zM431 288v1h1v-1zM431 291v1h1v-1zM431 293v1h1v-1zM431 295v1h1v-1zM431 334v1h1v-1zM432 277v1h1v-1zM432 285v1h1v-1zM432 296v1h1v-1zM432 298v1h1v-1zM432 337v1h1v-1zM432 340v1h1v-1zM433 274v1h1v-1zM433 279v1h1v-1zM433 282v1h1v-1zM433 299v1h1v-1zM433 301v1h1v-1zM433 343v1h1v-1zM434 271v1h1v-1zM434 276v1h1v-1zM434 302v1h1v-1zM434 304v1h1v-1zM434 346v1h1v-1zM435 268v1h1v-1zM435 270v1h1v-1zM435 273v1h1v-1zM435 305v1h1v-1zM435 307v1h1v-1zM436 265v1h1v-1zM436 267v1h1v-1zM436 308v1h1v-1zM436 310v1h1v-1zM437 262v1h1v-1zM437 264v1h1v-1zM437 311v1h1v-1zM437 313v1h1v-1zM438 314v1h1v-1zM438 316v1h1v-1zM438 319v1h1v-1zM439 317v1h1v-1zM439 322v1h1v-1zM440 320v1h1v-1zM441 323v1h1v-1z"/>
<path fill="#008080" d="M477 294h5v1h-5zM473 306h3v1h-3zM483 306h3v1h-3zM747 336h3v1h-3zM745 342h2v1h-2zM750 342h2v1h-2zM448 309v1h1v-1zM471 308v1h1v-1zM472 307v1h1v-1zM472 309v1h1v-1zM473 298v5h1v-5zM473 310v1h1v-1zM474 297v1h1v-1zM474 303v1h1v-1zM474 309v1h1v-1zM475 296v1h1v-1zM475 304v2h1v-2zM475 307v2h1v-2zM476 295v1h1v-1zM482 295v1h1v-1zM483 296v1h1v-1zM483 304v2h1v-2zM483 307v2h1v-2zM484 297v1h1v-1zM484 303v1h1v-1zM484 309v1h1v-1zM485 298v5h1v-5zM485 310v1h1v-1zM486 307v1h1v-1zM486 309v1h1v-1zM487 308v1h1v-1zM744 343v1h1v-1zM745 338v3h1v-3zM745 344v1h1v-1zM746 337v1h1v-1zM746 341v1h1v-1zM746 343v1h1v-1zM750 337v1h1v-1zM750 341v1h1v-1zM750 343v1h1v-1zM751 338v3h1v-3zM751 344v1h1v-1zM752 343v1h1v-1z"/>
</g>
<g class="hn">
<text x="95.5" y="351.5" fill="#ff0000" stroke="#ff0000">1</text>
<text x="143.5" y="442.5" fill="#ffff00" stroke="#ffff00">2</text>
<text x="237.5" y="503.5" fill="#00ff00" stroke="#00ff00">3</text>
<text x="355.5" y="505.5" fill="#0000ff" stroke="#0000ff">4</text>
<text x="453.5" y="444.5" fill="#ff0000" stroke="#ff0000">5</text>
<text x="503.5" y="352.5" fill="#ffff00" stroke="#ffff00">6</text>
<text x="503.5" y="255.5" fill="#00ff00" stroke="#00ff00">7</text>
<text x="455.5" y="164.5" fill="#0000ff" stroke="#0000ff">8</text>
<text x="361.5" y="103.5" fill="#ff0000" stroke="#ff0000">9</text>
<text x="243.5" y="101.5" fill="#ffff00" stroke="#ffff00">10</text>
<text x="145.5" y="162.5" fill="#00ff00" stroke="#00ff00">11</text>
<text x="95.5" y="254.5" fill="#0000ff" stroke="#0000ff">12</text>
</g>
<g class="ang">
<text transform="translate(110.5,306) scale(0.45,1)" fill="#ff0000" stroke="#ff0000">A<tspan font-size="20.2px">sc</tspan></text>
<text transform="translate(293.6,128) scale(0.49,1)" fill="#ffff00" stroke="#ffff00">MC</text>
</g>
<g class="side">
<text x="606" y="14" fill="#ffffff" stroke="#ffffff">Astrolog 5.40</text>
<text x="606" y="24" fill="#c0c0c0" stroke="#c0c0c0">"ted"</text>
<text x="606" y="34" fill="#c0c0c0" stroke="#c0c0c0">Mon February 11, 2008</text>
<text x="612" y="44" fill="#c0c0c0" stroke="#c0c0c0">6:26pm (ST +8:00 GMT)</text>
<text x="606" y="54" fill="#c0c0c0" stroke="#c0c0c0">"Taiwan"</text>
<text x="606" y="64" fill="#c0c0c0" stroke="#c0c0c0">121°31E 25°03N</text>
<text x="606" y="74" fill="#c0c0c0" stroke="#c0c0c0">Regiomontanus houses.</text>
<text x="606" y="84" fill="#c0c0c0" stroke="#c0c0c0">Tropical, Geocentric.</text>
<text x="606" y="94" fill="#c0c0c0" stroke="#c0c0c0">Julian Day = 2454507.9347</text>
<text x="612" y="114" fill="#ff0000" stroke="#ff0000">1st house:</text>
<text x="684" y="114" fill="#ffff00" stroke="#ffff00">1Vir59</text>
<text x="612" y="124" fill="#ffff00" stroke="#ffff00">2nd house:</text>
<text x="678" y="124" fill="#ffff00" stroke="#ffff00">28Vir58</text>
<text x="612" y="134" fill="#00ff00" stroke="#00ff00">3rd house:</text>
<text x="678" y="134" fill="#00ff00" stroke="#00ff00">28Lib19</text>
<text x="612" y="144" fill="#0000ff" stroke="#0000ff">4th house:</text>
<text x="684" y="144" fill="#ff0000" stroke="#ff0000">1Sag01</text>
<text x="612" y="154" fill="#ff0000" stroke="#ff0000">5th house:</text>
<text x="684" y="154" fill="#ffff00" stroke="#ffff00">4Cap18</text>
<text x="612" y="164" fill="#ffff00" stroke="#ffff00">6th house:</text>
<text x="684" y="164" fill="#00ff00" stroke="#00ff00">4Aqu37</text>
<text x="612" y="174" fill="#00ff00" stroke="#00ff00">7th house:</text>
<text x="684" y="174" fill="#0000ff" stroke="#0000ff">1Pis59</text>
<text x="612" y="184" fill="#0000ff" stroke="#0000ff">8th house:</text>
<text x="678" y="184" fill="#0000ff" stroke="#0000ff">28Pis58</text>
<text x="612" y="194" fill="#ff0000" stroke="#ff0000">9th house:</text>
<text x="678" y="194" fill="#ff0000" stroke="#ff0000">28Ari19</text>
<text x="606" y="204" fill="#ffff00" stroke="#ffff00">10th house:</text>
<text x="684" y="204" fill="#00ff00" stroke="#00ff00">1Gem01</text>
<text x="606" y="214" fill="#00ff00" stroke="#00ff00">11th house:</text>
<text x="684" y="214" fill="#0000ff" stroke="#0000ff">4Can18</text>
<text x="606" y="224" fill="#0000ff" stroke="#0000ff">12th house:</text>
<text x="684" y="224" fill="#ff0000" stroke="#ff0000">4Leo37</text>
<text x="612" y="244" fill="#ff0000" stroke="#ff0000">Sun:</text>
<text x="642" y="244" fill="#00ff00" stroke="#00ff00">22Aqu04</text>
<text x="696" y="244" fill="#c0c0c0" stroke="#c0c0c0">-</text>
<text x="708" y="244" fill="#c0c0c0" stroke="#c0c0c0">0°00'</text>
<text x="606" y="254" fill="#0000ff" stroke="#0000ff">Moon:</text>
<text x="642" y="254" fill="#ff0000" stroke="#ff0000">16Ari25</text>
<text x="696" y="254" fill="#c0c0c0" stroke="#c0c0c0">+</text>
<text x="708" y="254" fill="#c0c0c0" stroke="#c0c0c0">3°58'</text>
<text x="606" y="264" fill="#00ff00" stroke="#00ff00">Merc:</text>
<text x="642" y="264" fill="#00ff00" stroke="#00ff00">12Aqu02</text>
<text x="684" y="264" fill="#ffffff" stroke="#ffffff">R</text>
<text x="696" y="264" fill="#c0c0c0" stroke="#c0c0c0">+</text>
<text x="708" y="264" fill="#c0c0c0" stroke="#c0c0c0">3°34'</text>
<text x="606" y="274" fill="#00ff00" stroke="#00ff00">Venu:</text>
<text x="642" y="274" fill="#ffff00" stroke="#ffff00">22Cap17</text>
<text x="696" y="274" fill="#c0c0c0" stroke="#c0c0c0">+</text>
<text x="708" y="274" fill="#c0c0c0" stroke="#c0c0c0">0°13'</text>
<text x="606" y="284" fill="#ff0000" stroke="#ff0000">Mars:</text>
<text x="642" y="284" fill="#00ff00" stroke="#00ff00">24Gem53</text>
<text x="696" y="284" fill="#c0c0c0" stroke="#c0c0c0">+</text>
<text x="708" y="284" fill="#c0c0c0" stroke="#c0c0c0">3°11'</text>
<text x="606" y="294" fill="#ff0000" stroke="#ff0000">Jupi:</text>
<text x="642" y="294" fill="#ffff00" stroke="#ffff00">12Cap07</text>
<text x="696" y="294" fill="#c0c0c0" stroke="#c0c0c0">+</text>
<text x="708" y="294" fill="#c0c0c0" stroke="#c0c0c0">0°06'</text>
<text x="606" y="304" fill="#ffff00" stroke="#ffff00">Satu:</text>
<text x="648" y="304" fill="#ffff00" stroke="#ffff00">6Vir07</text>
<text x="684" y="304" fill="#ffffff" stroke="#ffffff">R</text>
<text x="696" y="304" fill="#c0c0c0" stroke="#c0c0c0">+</text>
<text x="708" y="304" fill="#c0c0c0" stroke="#c0c0c0">1°49'</text>
<text x="606" y="314" fill="#00ff00" stroke="#00ff00">Uran:</text>
<text x="642" y="314" fill="#0000ff" stroke="#0000ff">17Pis10</text>
<text x="696" y="314" fill="#c0c0c0" stroke="#c0c0c0">-</text>
<text x="708" y="314" fill="#c0c0c0" stroke="#c0c0c0">0°44'</text>
<text x="606" y="324" fill="#0000ff" stroke="#0000ff">Nept:</text>
<text x="642" y="324" fill="#00ff00" stroke="#00ff00">21Aqu44</text>
<text x="696" y="324" fill="#c0c0c0" stroke="#c0c0c0">-</text>
<text x="708" y="324" fill="#c0c0c0" stroke="#c0c0c0">0°18'</text>
<text x="606" y="334" fill="#0000ff" stroke="#0000ff">Plut:</text>
<text x="648" y="334" fill="#ffff00" stroke="#ffff00">0Cap28</text>
<text x="696" y="334" fill="#c0c0c0" stroke="#c0c0c0">+</text>
<text x="708" y="334" fill="#c0c0c0" stroke="#c0c0c0">6°17'</text>
<text x="606" y="344" fill="#008080" stroke="#008080">Node:</text>
<text x="642" y="344" fill="#00ff00" stroke="#00ff00">28Aqu09</text>
<text x="684" y="344" fill="#ffffff" stroke="#ffffff">R</text>
<text x="696" y="344" fill="#c0c0c0" stroke="#c0c0c0">+</text>
<text x="708" y="344" fill="#c0c0c0" stroke="#c0c0c0">0°00'</text>
<text x="606" y="364" fill="#c0c0c0" stroke="#c0c0c0">Fire: 1, Earth: 5,</text>
<text x="606" y="374" fill="#c0c0c0" stroke="#c0c0c0">Air : 6, Water: 1</text>
<text x="606" y="384" fill="#c0c0c0" stroke="#c0c0c0">Car: 4, Fix: 4, Mut: 5</text>
<text x="606" y="394" fill="#c0c0c0" stroke="#c0c0c0">Yang: 7, Yin: 6</text>
<text x="606" y="404" fill="#c0c0c0" stroke="#c0c0c0">M: 3, N: 8, A: 2, D: 9</text>
<text x="606" y="414" fill="#c0c0c0" stroke="#c0c0c0">Ang: 4, Suc: 3, Cad: 4</text>
<text x="606" y="424" fill="#c0c0c0" stroke="#c0c0c0">Learn: 5, Share: 8</text>
</g>
</svg>
</body></html>
